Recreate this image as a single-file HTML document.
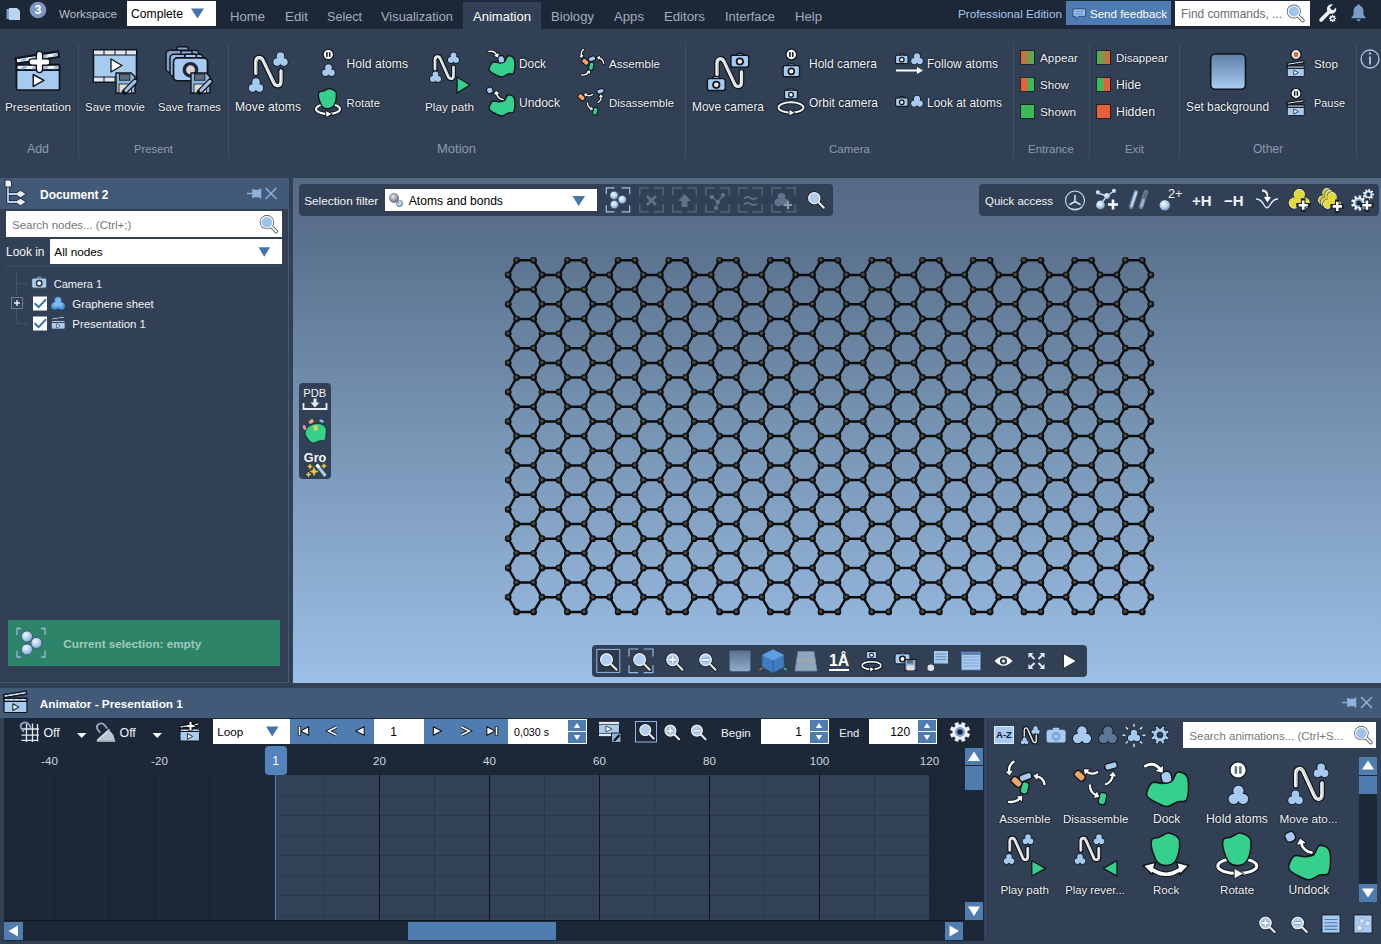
<!DOCTYPE html>
<html lang="en"><head><meta charset="utf-8"><title>SAMSON Animator</title><style>
html,body{margin:0;padding:0;}
body{width:1381px;height:944px;overflow:hidden;background:#314054;position:relative;font-family:"Liberation Sans",sans-serif;}
.t{position:absolute;white-space:nowrap;}
.b{position:absolute;}
.i{position:absolute;overflow:visible;}
</style></head><body>
<div class="b" style="left:0px;top:0px;width:1381px;height:29px;background:#1c2838;"></div>
<div class="b" style="left:0px;top:29px;width:1381px;height:149px;background:#314054;"></div>
<div class="b" style="left:463px;top:2px;width:78px;height:27px;background:#314054;"></div>
<svg class="i" style="left:0;top:0" width="1381" height="29" viewBox="0 0 1381 29"><rect x="6.5" y="9" width="8" height="10" fill="#7f9fc6"/><path d="M9 8 L17 8 L20 11 L20 20 L9 20 Z" fill="#b9d3f0"/><circle cx="38" cy="10" r="8.3" fill="#7d97c4"/></svg>
<div class="t" style="left:34.52px;top:0.00px;font-size:12.50px;color:#fff;line-height:20px;font-weight:bold;">3</div>
<div class="t" style="left:59.00px;top:4.00px;font-size:11.64px;color:#b7bec9;line-height:20px;">Workspace</div>
<div class="b" style="left:127px;top:1px;width:89px;height:25px;background:#ffffff;"></div>
<div class="t" style="left:131.00px;top:3.50px;font-size:12.15px;color:#000;line-height:20px;">Complete</div>
<svg class="i" style="left:190px;top:8px" width="16" height="12" viewBox="0 0 16 12"><path d="M1 0.5 L14 0.5 L7.5 10.5 Z" fill="#4574ad"/></svg>
<div class="t" style="left:230.00px;top:6.50px;font-size:13.12px;color:#a3adbb;line-height:20px;">Home</div>
<div class="t" style="left:285.00px;top:6.50px;font-size:13.35px;color:#a3adbb;line-height:20px;">Edit</div>
<div class="t" style="left:327.00px;top:6.50px;font-size:12.59px;color:#a3adbb;line-height:20px;">Select</div>
<div class="t" style="left:381.00px;top:6.50px;font-size:12.87px;color:#a3adbb;line-height:20px;">Visualization</div>
<div class="t" style="left:473.00px;top:6.50px;font-size:13.04px;color:#ffffff;line-height:20px;">Animation</div>
<div class="t" style="left:551.00px;top:6.50px;font-size:13.11px;color:#a3adbb;line-height:20px;">Biology</div>
<div class="t" style="left:614.00px;top:6.50px;font-size:13.16px;color:#a3adbb;line-height:20px;">Apps</div>
<div class="t" style="left:664.00px;top:6.50px;font-size:13.17px;color:#a3adbb;line-height:20px;">Editors</div>
<div class="t" style="left:725.00px;top:6.50px;font-size:12.85px;color:#a3adbb;line-height:20px;">Interface</div>
<div class="t" style="left:795.00px;top:6.50px;font-size:13.13px;color:#a3adbb;line-height:20px;">Help</div>
<div class="t" style="left:958.00px;top:3.50px;font-size:11.77px;color:#a9c6ee;line-height:20px;">Professional Edition</div>
<div class="b" style="left:1066px;top:1px;width:105px;height:24px;background:#4e7bb1;"></div>
<svg class="i" style="left:1072px;top:7.500px" width="15" height="13" viewBox="0 0 16 14"><path d="M1 1 H14.5 V9 H7 L4 12 V9 H1 Z" fill="#9cc0ea" stroke="#2a4a78" stroke-width="1"/><path d="M3.5 4 H12 M3.5 6.5 H12" stroke="#5b86bd" stroke-width="1"/></svg>
<div class="t" style="left:1090.00px;top:3.50px;font-size:11.54px;color:#fff;line-height:20px;">Send feedback</div>
<div class="b" style="left:1175px;top:1px;width:135px;height:25px;background:#ffffff;"></div>
<div class="t" style="left:1181.00px;top:3.50px;font-size:11.88px;color:#6d6d6d;line-height:20px;">Find commands, ...</div>
<svg class="i" style="left:0;top:0" width="1381" height="29" viewBox="0 0 1381 29"><line x1="1298.25" y1="15.95" x2="1302.81" y2="20.51" stroke="#3c4046" stroke-width="3.70" stroke-linecap="round"/><circle cx="1293.8" cy="11.5" r="6.95" fill="#3c4046"/><line x1="1298.25" y1="15.95" x2="1302.81" y2="20.51" stroke="#f6f6f6" stroke-width="2.20" stroke-linecap="round"/><circle cx="1293.8" cy="11.5" r="5.70" fill="#9cc4ee" stroke="#f6f6f6" stroke-width="1.3"/></svg>
<svg class="i" style="left:1316.500px;top:2px" width="22.500" height="24.200" viewBox="0 0 26 28"><path d="M3 19.5 L12 10.5 Q10.5 6.5 13.5 3.8 Q16 2 18.5 3 L15 6.5 L16.5 9 L19 9.5 L22 6.5 Q23 9.5 21 12 Q18.5 14.5 15 13.2 L6 22.5 Q4.5 23.5 3.2 22.2 Q2 21 3 19.5 Z" fill="#f2f4f7"/><path d="M22.14 18.28 L22.14 19.72 L20.95 19.68 L20.57 20.60 L21.44 21.42 L20.42 22.44 L19.60 21.57 L18.68 21.95 L18.72 23.14 L17.28 23.14 L17.32 21.95 L16.40 21.57 L15.58 22.44 L14.56 21.42 L15.43 20.60 L15.05 19.68 L13.86 19.72 L13.86 18.28 L15.05 18.32 L15.43 17.40 L14.56 16.58 L15.58 15.56 L16.40 16.43 L17.32 16.05 L17.28 14.86 L18.72 14.86 L18.68 16.05 L19.60 16.43 L20.42 15.56 L21.44 16.58 L20.57 17.40 L20.95 18.32 Z" fill="#f2f4f7" stroke-linejoin="round"/><circle cx="18" cy="19" r="1.43" fill="#1e293a"/></svg>
<svg class="i" style="left:1348px;top:2px" width="22" height="24" viewBox="0 0 22 24"><path d="M9.300 3.500 Q9.300 2.300 10.500 2.300 Q11.700 2.300 11.700 3.500 Q15.500 4.800 15.500 10 L15.500 13 L18 16.300 L3 16.300 L5.500 13 L5.500 10 Q5.500 4.800 9.300 3.500 Z" fill="#7d9cc6"/><path d="M8.500 17.300 H12.500 Q12 19.300 10.500 19.300 Q9 19.300 8.500 17.300 Z" fill="#7d9cc6"/></svg>
<div class="b" style="left:78.0px;top:44px;width:0;height:115px;border-left:1px solid #3d4e66"></div>
<div class="b" style="left:228.0px;top:44px;width:0;height:115px;border-left:1px solid #3d4e66"></div>
<div class="b" style="left:685.0px;top:44px;width:0;height:115px;border-left:1px solid #3d4e66"></div>
<div class="b" style="left:1013.0px;top:44px;width:0;height:115px;border-left:1px solid #3d4e66"></div>
<div class="b" style="left:1089.0px;top:44px;width:0;height:115px;border-left:1px solid #3d4e66"></div>
<div class="b" style="left:1179.0px;top:44px;width:0;height:115px;border-left:1px solid #3d4e66"></div>
<div class="b" style="left:1356.0px;top:44px;width:0;height:115px;border-left:1px solid #3d4e66"></div>
<div class="t" style="left:27.00px;top:138.50px;font-size:12.36px;color:#8d9bb0;line-height:20px;">Add</div>
<div class="t" style="left:134.00px;top:138.50px;font-size:11.32px;color:#8d9bb0;line-height:20px;">Present</div>
<div class="t" style="left:437.00px;top:138.50px;font-size:12.99px;color:#8d9bb0;line-height:20px;">Motion</div>
<div class="t" style="left:829.00px;top:138.50px;font-size:11.53px;color:#8d9bb0;line-height:20px;">Camera</div>
<div class="t" style="left:1028.00px;top:138.50px;font-size:11.49px;color:#8d9bb0;line-height:20px;">Entrance</div>
<div class="t" style="left:1125.00px;top:138.50px;font-size:11.40px;color:#8d9bb0;line-height:20px;">Exit</div>
<div class="t" style="left:1253.00px;top:138.50px;font-size:12.00px;color:#8d9bb0;line-height:20px;">Other</div>
<div class="t" style="left:5.00px;top:96.50px;font-size:11.75px;color:#f4f6f9;line-height:20px;text-shadow:0 0 2px #0d1320,0 0 1px #0d1320;">Presentation</div>
<div class="t" style="left:85.00px;top:96.50px;font-size:11.48px;color:#f4f6f9;line-height:20px;text-shadow:0 0 2px #0d1320,0 0 1px #0d1320;">Save movie</div>
<div class="t" style="left:158.00px;top:96.50px;font-size:11.22px;color:#f4f6f9;line-height:20px;text-shadow:0 0 2px #0d1320,0 0 1px #0d1320;">Save frames</div>
<div class="t" style="left:235.00px;top:96.50px;font-size:12.12px;color:#f4f6f9;line-height:20px;text-shadow:0 0 2px #0d1320,0 0 1px #0d1320;">Move atoms</div>
<div class="t" style="left:346.50px;top:53.50px;font-size:12.16px;color:#f4f6f9;line-height:20px;text-shadow:0 0 2px #0d1320,0 0 1px #0d1320;">Hold atoms</div>
<div class="t" style="left:346.50px;top:92.50px;font-size:11.37px;color:#f4f6f9;line-height:20px;text-shadow:0 0 2px #0d1320,0 0 1px #0d1320;">Rotate</div>
<div class="t" style="left:425.00px;top:96.50px;font-size:11.75px;color:#f4f6f9;line-height:20px;text-shadow:0 0 2px #0d1320,0 0 1px #0d1320;">Play path</div>
<div class="t" style="left:519.00px;top:53.50px;font-size:11.85px;color:#f4f6f9;line-height:20px;text-shadow:0 0 2px #0d1320,0 0 1px #0d1320;">Dock</div>
<div class="t" style="left:519.00px;top:92.50px;font-size:12.09px;color:#f4f6f9;line-height:20px;text-shadow:0 0 2px #0d1320,0 0 1px #0d1320;">Undock</div>
<div class="t" style="left:609.00px;top:53.50px;font-size:11.62px;color:#f4f6f9;line-height:20px;text-shadow:0 0 2px #0d1320,0 0 1px #0d1320;">Assemble</div>
<div class="t" style="left:609.00px;top:92.50px;font-size:11.36px;color:#f4f6f9;line-height:20px;text-shadow:0 0 2px #0d1320,0 0 1px #0d1320;">Disassemble</div>
<div class="t" style="left:692.00px;top:96.50px;font-size:11.89px;color:#f4f6f9;line-height:20px;text-shadow:0 0 2px #0d1320,0 0 1px #0d1320;">Move camera</div>
<div class="t" style="left:809.00px;top:53.50px;font-size:11.99px;color:#f4f6f9;line-height:20px;text-shadow:0 0 2px #0d1320,0 0 1px #0d1320;">Hold camera</div>
<div class="t" style="left:809.00px;top:92.50px;font-size:11.94px;color:#f4f6f9;line-height:20px;text-shadow:0 0 2px #0d1320,0 0 1px #0d1320;">Orbit camera</div>
<div class="t" style="left:927.00px;top:53.50px;font-size:12.05px;color:#f4f6f9;line-height:20px;text-shadow:0 0 2px #0d1320,0 0 1px #0d1320;">Follow atoms</div>
<div class="t" style="left:927.00px;top:92.50px;font-size:11.94px;color:#f4f6f9;line-height:20px;text-shadow:0 0 2px #0d1320,0 0 1px #0d1320;">Look at atoms</div>
<div class="t" style="left:1040.00px;top:47.50px;font-size:11.78px;color:#f4f6f9;line-height:20px;text-shadow:0 0 2px #0d1320,0 0 1px #0d1320;">Appear</div>
<div class="t" style="left:1040.00px;top:74.50px;font-size:11.59px;color:#f4f6f9;line-height:20px;text-shadow:0 0 2px #0d1320,0 0 1px #0d1320;">Show</div>
<div class="t" style="left:1040.00px;top:101.50px;font-size:11.77px;color:#f4f6f9;line-height:20px;text-shadow:0 0 2px #0d1320,0 0 1px #0d1320;">Shown</div>
<div class="t" style="left:1116.00px;top:47.50px;font-size:11.41px;color:#f4f6f9;line-height:20px;text-shadow:0 0 2px #0d1320,0 0 1px #0d1320;">Disappear</div>
<div class="t" style="left:1116.00px;top:74.50px;font-size:12.16px;color:#f4f6f9;line-height:20px;text-shadow:0 0 2px #0d1320,0 0 1px #0d1320;">Hide</div>
<div class="t" style="left:1116.00px;top:101.50px;font-size:12.31px;color:#f4f6f9;line-height:20px;text-shadow:0 0 2px #0d1320,0 0 1px #0d1320;">Hidden</div>
<div class="t" style="left:1186.00px;top:96.50px;font-size:11.85px;color:#f4f6f9;line-height:20px;text-shadow:0 0 2px #0d1320,0 0 1px #0d1320;">Set background</div>
<div class="t" style="left:1314.00px;top:53.50px;font-size:11.67px;color:#f4f6f9;line-height:20px;text-shadow:0 0 2px #0d1320,0 0 1px #0d1320;">Stop</div>
<div class="t" style="left:1314.00px;top:92.50px;font-size:10.93px;color:#f4f6f9;line-height:20px;text-shadow:0 0 2px #0d1320,0 0 1px #0d1320;">Pause</div>
<svg class="i" style="left:0;top:0" width="1381" height="178" viewBox="0 0 1381 178"><rect x="16.50" y="70.12" width="43.00" height="19.88" rx="1" fill="#a6caf0" stroke="#10151d" stroke-width="1.7"/><g><rect x="16.50" y="64.69" width="43.00" height="5.44" fill="#eef2f7" stroke="#10151d" stroke-width="1.7"/><path d="M19.94 70.12 L24.24 64.69 L28.54 64.69 L24.24 70.12 Z" fill="#9fb9d6"/><path d="M30.69 70.12 L34.99 64.69 L39.29 64.69 L34.99 70.12 Z" fill="#9fb9d6"/><path d="M41.44 70.12 L45.74 64.69 L50.04 64.69 L45.74 70.12 Z" fill="#9fb9d6"/><path d="M52.19 70.12 L56.49 64.69 L60.79 64.69 L56.49 70.12 Z" fill="#9fb9d6"/><rect x="16.50" y="64.69" width="43.00" height="5.44" fill="none" stroke="#10151d" stroke-width="1.7"/></g><g transform="rotate(-9 16.50 63.56)"><rect x="16.50" y="58.12" width="43.00" height="5.44" fill="#eef2f7" stroke="#10151d" stroke-width="1.7"/><path d="M19.94 63.56 L24.24 58.12 L28.54 58.12 L24.24 63.56 Z" fill="#9fb9d6"/><path d="M30.69 63.56 L34.99 58.12 L39.29 58.12 L34.99 63.56 Z" fill="#9fb9d6"/><path d="M41.44 63.56 L45.74 58.12 L50.04 58.12 L45.74 63.56 Z" fill="#9fb9d6"/><path d="M52.19 63.56 L56.49 58.12 L60.79 58.12 L56.49 63.56 Z" fill="#9fb9d6"/><rect x="16.50" y="58.12" width="43.00" height="5.44" fill="none" stroke="#10151d" stroke-width="1.7"/></g><path d="M33.23 74.50 L43.96 80.46 L33.23 86.42 Z" fill="#fff" stroke="#10151d" stroke-width="1.44" stroke-linejoin="round"/><path d="M39.500 54.500 V69.500 M32 62 H47" stroke="#10151d" stroke-width="7.6" stroke-linecap="round"/><path d="M39.500 54.500 V69.500 M32 62 H47" stroke="#fff" stroke-width="4.8" stroke-linecap="round"/><rect x="93.5" y="50" width="43" height="32" fill="#a6caf0" stroke="#10151d" stroke-width="1.6"/><rect x="93.5" y="50" width="43" height="5" fill="#dfe6ee" stroke="#10151d" stroke-width="1"/><rect x="93.5" y="77" width="43" height="5" fill="#dfe6ee" stroke="#10151d" stroke-width="1"/><line x1="104" y1="50" x2="104" y2="55" stroke="#10151d" stroke-width="1"/><line x1="104" y1="77" x2="104" y2="82" stroke="#10151d" stroke-width="1"/><line x1="115" y1="50" x2="115" y2="55" stroke="#10151d" stroke-width="1"/><line x1="115" y1="77" x2="115" y2="82" stroke="#10151d" stroke-width="1"/><line x1="126" y1="50" x2="126" y2="55" stroke="#10151d" stroke-width="1"/><line x1="126" y1="77" x2="126" y2="82" stroke="#10151d" stroke-width="1"/><line x1="137" y1="50" x2="137" y2="55" stroke="#10151d" stroke-width="1"/><line x1="137" y1="77" x2="137" y2="82" stroke="#10151d" stroke-width="1"/><path d="M111 59 L122 65.5 L111 72 Z" fill="#fff" stroke="#10151d" stroke-width="1.3" stroke-linejoin="round"/><path d="M116.00 73.00 L131.20 73.00 L135.00 76.80 L135.00 92.95 L116.00 92.95 Z" fill="#8fb4dc" stroke="#10151d" stroke-width="1.4" stroke-linejoin="round"/><rect x="119.42" y="74.14" width="10.45" height="6.08" fill="#5f6b7a" stroke="#10151d" stroke-width="0.8"/><rect x="119.04" y="84.02" width="12.54" height="8.93" fill="#e4ddd0" stroke="#10151d" stroke-width="0.8"/><line x1="124.55" y1="91.95" x2="135.00" y2="81.38" stroke="#10151d" stroke-width="5.70" stroke-linecap="round"/><line x1="126.07" y1="90.43" x2="135.00" y2="81.38" stroke="#9cc0ea" stroke-width="3.23" stroke-linecap="round"/><rect x="176.89" y="46.63" width="11.22" height="7.72" rx="1.65" fill="#7f9fc6" stroke="#10151d" stroke-width="1.5"/><rect x="166.00" y="50.23" width="33.00" height="22.14" rx="3.96" fill="#7f9fc6" stroke="#10151d" stroke-width="1.5"/><circle cx="182.50" cy="61.74" r="5.98" fill="#7f9fc6" stroke="#10151d" stroke-width="3.30"/><rect x="180.89" y="50.63" width="11.22" height="7.72" rx="1.65" fill="#93b5dd" stroke="#10151d" stroke-width="1.5"/><rect x="170.00" y="54.23" width="33.00" height="22.14" rx="3.96" fill="#93b5dd" stroke="#10151d" stroke-width="1.5"/><circle cx="186.50" cy="65.74" r="5.98" fill="#93b5dd" stroke="#10151d" stroke-width="3.30"/><rect x="184.72" y="54.24" width="11.56" height="7.96" rx="1.70" fill="#a6caf0" stroke="#10151d" stroke-width="1.7"/><rect x="173.50" y="57.95" width="34.00" height="22.81" rx="4.08" fill="#a6caf0" stroke="#10151d" stroke-width="1.7"/><circle cx="190.50" cy="69.81" r="6.16" fill="#ddd5cc" stroke="#1d2838" stroke-width="3.40"/><path d="M191.00 73.00 L206.20 73.00 L210.00 76.80 L210.00 92.95 L191.00 92.95 Z" fill="#8fb4dc" stroke="#10151d" stroke-width="1.4" stroke-linejoin="round"/><rect x="194.42" y="74.14" width="10.45" height="6.08" fill="#5f6b7a" stroke="#10151d" stroke-width="0.8"/><rect x="194.04" y="84.02" width="12.54" height="8.93" fill="#e4ddd0" stroke="#10151d" stroke-width="0.8"/><line x1="199.55" y1="91.95" x2="210.00" y2="81.38" stroke="#10151d" stroke-width="5.70" stroke-linecap="round"/><line x1="201.07" y1="90.43" x2="210.00" y2="81.38" stroke="#9cc0ea" stroke-width="3.23" stroke-linecap="round"/><path d="M255.80 73.46 L255.80 62.06 C255.80 56.65 261.34 56.08 263.36 60.92 L273.44 82.01 C275.46 87.14 281.00 86.86 281.00 81.44 L281.00 70.89" fill="none" stroke="#10151d" stroke-width="5.6" stroke-linecap="round" stroke-linejoin="round"/><path d="M255.80 73.46 L255.80 62.06 C255.80 56.65 261.34 56.08 263.36 60.92 L273.44 82.01 C275.46 87.14 281.00 86.86 281.00 81.44 L281.00 70.89" fill="none" stroke="#f6f6f6" stroke-width="3.2" stroke-linecap="round" stroke-linejoin="round"/><path d="M255.80 73.46 L255.80 62.06 C255.80 56.65 261.34 56.08 263.36 60.92 L273.44 82.01 C275.46 87.14 281.00 86.86 281.00 81.44 L281.00 70.89" fill="none" stroke="#c4c4c4" stroke-width="0.96" stroke-linecap="round" stroke-linejoin="round" transform="translate(0.70,0)"/><circle cx="280.50" cy="56.16" r="4.60" fill="#10151d"/><circle cx="283.92" cy="62.08" r="4.60" fill="#10151d"/><circle cx="277.08" cy="62.08" r="4.60" fill="#10151d"/><circle cx="280.50" cy="60.11" r="4.22" fill="#10151d"/><circle cx="280.50" cy="56.16" r="3.80" fill="#a6caf0"/><circle cx="283.92" cy="62.08" r="3.80" fill="#a6caf0"/><circle cx="277.08" cy="62.08" r="3.80" fill="#a6caf0"/><circle cx="280.50" cy="60.11" r="3.42" fill="#a6caf0"/><circle cx="256.00" cy="82.16" r="4.60" fill="#10151d"/><circle cx="259.42" cy="88.08" r="4.60" fill="#10151d"/><circle cx="252.58" cy="88.08" r="4.60" fill="#10151d"/><circle cx="256.00" cy="86.11" r="4.22" fill="#10151d"/><circle cx="256.00" cy="82.16" r="3.80" fill="#a6caf0"/><circle cx="259.42" cy="88.08" r="3.80" fill="#a6caf0"/><circle cx="252.58" cy="88.08" r="3.80" fill="#a6caf0"/><circle cx="256.00" cy="86.11" r="3.42" fill="#a6caf0"/><circle cx="328.3" cy="54.5" r="5.2" fill="#fff" stroke="#10151d" stroke-width="1.2"/><rect x="326.12" y="52.16" width="1.56" height="4.68" fill="#10151d"/><rect x="328.92" y="52.16" width="1.56" height="4.68" fill="#10151d"/><circle cx="328.50" cy="67.60" r="4.10" fill="#10151d"/><circle cx="331.47" cy="72.74" r="4.10" fill="#10151d"/><circle cx="325.53" cy="72.74" r="4.10" fill="#10151d"/><circle cx="328.50" cy="71.03" r="3.77" fill="#10151d"/><circle cx="328.50" cy="67.60" r="3.30" fill="#a6caf0"/><circle cx="331.47" cy="72.74" r="3.30" fill="#a6caf0"/><circle cx="325.53" cy="72.74" r="3.30" fill="#a6caf0"/><circle cx="328.50" cy="71.03" r="2.97" fill="#a6caf0"/><ellipse cx="328" cy="109" rx="12" ry="5.0" fill="none" stroke="#10151d" stroke-width="3.8"/><ellipse cx="328" cy="109" rx="12" ry="5.0" fill="none" stroke="#fff" stroke-width="2.0"/><path d="M319.14 92.15 C320.03 91.33 322.05 91.53 323.70 90.92 C325.35 90.31 327.31 88.60 329.02 88.46 C330.73 88.32 332.76 89.35 333.96 90.10 C335.16 90.85 335.92 91.26 336.24 92.97 C336.56 94.68 336.37 98.09 335.86 100.35 C335.35 102.60 334.53 105.10 333.20 106.50 C331.87 107.90 329.65 108.69 327.88 108.75 C326.11 108.82 323.95 108.24 322.56 106.91 C321.17 105.58 320.22 102.60 319.52 100.76 C318.82 98.91 318.44 97.28 318.38 95.84 C318.32 94.41 318.25 92.97 319.14 92.15 Z" fill="#35d08b" stroke="#10151d" stroke-width="1.4" stroke-linejoin="round"/><path d="M316 109 A12 5.0 0 0 0 340 109" fill="none" stroke="#10151d" stroke-width="3.8"/><path d="M316 109 A12 5.0 0 0 0 340 109" fill="none" stroke="#fff" stroke-width="2.0"/><path d="M325.80 110.43 L332.26 114.00 L325.80 117.57 Z" fill="#fff" stroke="#10151d" stroke-width="0.9" stroke-linejoin="round"/><path d="M435.00 69.10 L435.00 60.10 C435.00 55.83 439.07 55.38 440.55 59.20 L447.95 75.85 C449.43 79.90 453.50 79.67 453.50 75.40 L453.50 67.08" fill="none" stroke="#10151d" stroke-width="5.0" stroke-linecap="round" stroke-linejoin="round"/><path d="M435.00 69.10 L435.00 60.10 C435.00 55.83 439.07 55.38 440.55 59.20 L447.95 75.85 C449.43 79.90 453.50 79.67 453.50 75.40 L453.50 67.08" fill="none" stroke="#f6f6f6" stroke-width="2.6" stroke-linecap="round" stroke-linejoin="round"/><path d="M435.00 69.10 L435.00 60.10 C435.00 55.83 439.07 55.38 440.55 59.20 L447.95 75.85 C449.43 79.90 453.50 79.67 453.50 75.40 L453.50 67.08" fill="none" stroke="#c4c4c4" stroke-width="0.78" stroke-linecap="round" stroke-linejoin="round" transform="translate(0.57,0)"/><circle cx="453.50" cy="55.45" r="3.70" fill="#10151d"/><circle cx="456.11" cy="59.97" r="3.70" fill="#10151d"/><circle cx="450.89" cy="59.97" r="3.70" fill="#10151d"/><circle cx="453.50" cy="58.46" r="3.41" fill="#10151d"/><circle cx="453.50" cy="55.45" r="2.90" fill="#a6caf0"/><circle cx="456.11" cy="59.97" r="2.90" fill="#a6caf0"/><circle cx="450.89" cy="59.97" r="2.90" fill="#a6caf0"/><circle cx="453.50" cy="58.46" r="2.61" fill="#a6caf0"/><circle cx="435.50" cy="74.45" r="3.70" fill="#10151d"/><circle cx="438.11" cy="78.97" r="3.70" fill="#10151d"/><circle cx="432.89" cy="78.97" r="3.70" fill="#10151d"/><circle cx="435.50" cy="77.46" r="3.41" fill="#10151d"/><circle cx="435.50" cy="74.45" r="2.90" fill="#a6caf0"/><circle cx="438.11" cy="78.97" r="2.90" fill="#a6caf0"/><circle cx="432.89" cy="78.97" r="2.90" fill="#a6caf0"/><circle cx="435.50" cy="77.46" r="2.61" fill="#a6caf0"/><path d="M457 77 L470 85 L457 93 Z" fill="#35d08b" stroke="#10151d" stroke-width="1.3" stroke-linejoin="round"/><path d="M489.20 68.30 C489.67 66.80 491.20 63.12 492.80 62.20 C494.40 61.28 496.83 62.93 498.80 62.80 C500.77 62.67 503.10 62.53 504.60 61.40 C506.10 60.27 506.35 56.65 507.80 56.00 C509.25 55.35 512.12 56.28 513.30 57.50 C514.48 58.72 514.85 60.72 514.90 63.30 C514.95 65.88 514.70 71.22 513.60 73.00 C512.50 74.78 510.28 73.35 508.30 74.00 C506.32 74.65 503.92 76.83 501.70 76.90 C499.48 76.97 496.95 75.35 495.00 74.40 C493.05 73.45 490.97 72.22 490.00 71.20 C489.03 70.18 488.73 69.80 489.20 68.30 Z" fill="#35d08b" stroke="#10151d" stroke-width="1.4" stroke-linejoin="round"/><rect x="498.00" y="55.80" width="6.40" height="7.20" rx="2.43" fill="#a6caf0" stroke="#10151d" stroke-width="1.1" transform="rotate(-12 501.20 59.40)"/><path d="M489.00 51.50 Q494.27 50.46 496.80 55.20" fill="none" stroke="#10151d" stroke-width="3.2" stroke-linecap="round"/><path d="M497.99 57.42 L493.93 55.78 L498.88 53.14 Z" fill="#10151d" stroke="#10151d" stroke-width="1.6" stroke-linejoin="round"/><path d="M489.00 51.50 Q494.27 50.46 496.80 55.20" fill="none" stroke="#fff" stroke-width="1.6" stroke-linecap="round"/><path d="M497.99 57.42 L493.93 55.78 L498.88 53.14 Z" fill="#fff"/><path d="M489.20 107.30 C489.67 105.80 491.20 102.12 492.80 101.20 C494.40 100.28 496.83 101.93 498.80 101.80 C500.77 101.67 503.10 101.53 504.60 100.40 C506.10 99.27 506.35 95.65 507.80 95.00 C509.25 94.35 512.12 95.28 513.30 96.50 C514.48 97.72 514.85 99.72 514.90 102.30 C514.95 104.88 514.70 110.22 513.60 112.00 C512.50 113.78 510.28 112.35 508.30 113.00 C506.32 113.65 503.92 115.83 501.70 115.90 C499.48 115.97 496.95 114.35 495.00 113.40 C493.05 112.45 490.97 111.22 490.00 110.20 C489.03 109.18 488.73 108.80 489.20 107.30 Z" fill="#35d08b" stroke="#10151d" stroke-width="1.4" stroke-linejoin="round"/><rect x="486.70" y="87.20" width="6.20" height="6.20" rx="2.36" fill="#a6caf0" stroke="#10151d" stroke-width="1.1" transform="rotate(-25 489.80 90.30)"/><path d="M503.00 99.50 Q497.68 98.57 496.50 93.30" fill="none" stroke="#10151d" stroke-width="3.2" stroke-linecap="round"/><path d="M495.95 90.84 L499.42 93.51 L493.95 94.73 Z" fill="#10151d" stroke="#10151d" stroke-width="1.6" stroke-linejoin="round"/><path d="M503.00 99.50 Q497.68 98.57 496.50 93.30" fill="none" stroke="#fff" stroke-width="1.6" stroke-linecap="round"/><path d="M495.95 90.84 L499.42 93.51 L493.95 94.73 Z" fill="#fff"/><rect x="581.55" y="59.30" width="7.50" height="5.00" rx="1.90" fill="#f2a468" stroke="#10151d" stroke-width="1.1" transform="rotate(40 585.30 61.80)"/><rect x="588.50" y="56.50" width="7.00" height="4.60" rx="1.75" fill="#a6caf0" stroke="#10151d" stroke-width="1.1" transform="rotate(-18 592.00 58.80)"/><rect x="589.00" y="62.20" width="4.60" height="8.00" rx="1.75" fill="#35d08b" stroke="#10151d" stroke-width="1.1" transform="rotate(12 591.30 66.20)"/><path d="M583.50 49.50 Q580.40 52.10 581.50 56.00" fill="none" stroke="#10151d" stroke-width="2.9000000000000004" stroke-linecap="round"/><path d="M582.04 57.91 L579.20 55.96 L583.44 54.77 Z" fill="#10151d" stroke="#10151d" stroke-width="1.6" stroke-linejoin="round"/><path d="M583.50 49.50 Q580.40 52.10 581.50 56.00" fill="none" stroke="#fff" stroke-width="1.3" stroke-linecap="round"/><path d="M582.04 57.91 L579.20 55.96 L583.44 54.77 Z" fill="#fff"/><path d="M603.70 63.30 Q603.11 58.97 598.90 57.80" fill="none" stroke="#10151d" stroke-width="2.9000000000000004" stroke-linecap="round"/><path d="M596.99 57.27 L600.13 55.86 L598.95 60.10 Z" fill="#10151d" stroke="#10151d" stroke-width="1.6" stroke-linejoin="round"/><path d="M603.70 63.30 Q603.11 58.97 598.90 57.80" fill="none" stroke="#fff" stroke-width="1.3" stroke-linecap="round"/><path d="M596.99 57.27 L600.13 55.86 L598.95 60.10 Z" fill="#fff"/><path d="M581.50 75.00 Q585.91 75.35 588.80 72.00" fill="none" stroke="#10151d" stroke-width="2.9000000000000004" stroke-linecap="round"/><path d="M590.09 70.50 L590.03 73.94 L586.70 71.06 Z" fill="#10151d" stroke="#10151d" stroke-width="1.6" stroke-linejoin="round"/><path d="M581.50 75.00 Q585.91 75.35 588.80 72.00" fill="none" stroke="#fff" stroke-width="1.3" stroke-linecap="round"/><path d="M590.09 70.50 L590.03 73.94 L586.70 71.06 Z" fill="#fff"/><rect x="577.75" y="94.70" width="7.50" height="5.00" rx="1.90" fill="#f2a468" stroke="#10151d" stroke-width="1.1" transform="rotate(40 581.50 97.20)"/><rect x="597.00" y="88.90" width="7.00" height="4.60" rx="1.75" fill="#a6caf0" stroke="#10151d" stroke-width="1.1" transform="rotate(-18 600.50 91.20)"/><rect x="593.00" y="107.45" width="4.60" height="7.50" rx="1.75" fill="#35d08b" stroke="#10151d" stroke-width="1.1" transform="rotate(12 595.30 111.20)"/><path d="M592.50 94.50 Q589.25 96.85 585.80 94.80" fill="none" stroke="#10151d" stroke-width="2.9000000000000004" stroke-linecap="round"/><path d="M584.10 93.79 L587.49 93.25 L585.24 97.03 Z" fill="#10151d" stroke="#10151d" stroke-width="1.6" stroke-linejoin="round"/><path d="M592.50 94.50 Q589.25 96.85 585.80 94.80" fill="none" stroke="#fff" stroke-width="1.3" stroke-linecap="round"/><path d="M584.10 93.79 L587.49 93.25 L585.24 97.03 Z" fill="#fff"/><path d="M598.00 102.50 Q601.48 100.36 601.00 96.30" fill="none" stroke="#10151d" stroke-width="2.9000000000000004" stroke-linecap="round"/><path d="M600.77 94.33 L603.26 96.70 L598.89 97.21 Z" fill="#10151d" stroke="#10151d" stroke-width="1.6" stroke-linejoin="round"/><path d="M598.00 102.50 Q601.48 100.36 601.00 96.30" fill="none" stroke="#fff" stroke-width="1.3" stroke-linecap="round"/><path d="M600.77 94.33 L603.26 96.70 L598.89 97.21 Z" fill="#fff"/><path d="M587.50 103.00 Q587.56 107.11 591.30 108.80" fill="none" stroke="#10151d" stroke-width="2.9000000000000004" stroke-linecap="round"/><path d="M593.10 109.62 L589.79 110.53 L591.61 106.52 Z" fill="#10151d" stroke="#10151d" stroke-width="1.6" stroke-linejoin="round"/><path d="M587.50 103.00 Q587.56 107.11 591.30 108.80" fill="none" stroke="#fff" stroke-width="1.3" stroke-linecap="round"/><path d="M593.10 109.62 L589.79 110.53 L591.61 106.52 Z" fill="#fff"/><path d="M717.00 74.48 L717.00 63.28 C717.00 57.96 722.39 57.40 724.35 62.16 L734.15 82.88 C736.11 87.92 741.50 87.64 741.50 82.32 L741.50 71.96" fill="none" stroke="#10151d" stroke-width="5.6" stroke-linecap="round" stroke-linejoin="round"/><path d="M717.00 74.48 L717.00 63.28 C717.00 57.96 722.39 57.40 724.35 62.16 L734.15 82.88 C736.11 87.92 741.50 87.64 741.50 82.32 L741.50 71.96" fill="none" stroke="#f6f6f6" stroke-width="3.2" stroke-linecap="round" stroke-linejoin="round"/><path d="M717.00 74.48 L717.00 63.28 C717.00 57.96 722.39 57.40 724.35 62.16 L734.15 82.88 C736.11 87.92 741.50 87.64 741.50 82.32 L741.50 71.96" fill="none" stroke="#c4c4c4" stroke-width="0.96" stroke-linecap="round" stroke-linejoin="round" transform="translate(0.70,0)"/><rect x="736.77" y="53.36" width="6.05" height="4.17" rx="0.89" fill="#a6caf0" stroke="#10151d" stroke-width="1.4"/><rect x="730.90" y="55.30" width="17.80" height="11.94" rx="2.14" fill="#a6caf0" stroke="#10151d" stroke-width="1.4"/><circle cx="739.80" cy="61.51" r="3.22" fill="#ece8e4" stroke="#10151d" stroke-width="1.78"/><rect x="713.27" y="76.66" width="6.05" height="4.17" rx="0.89" fill="#a6caf0" stroke="#10151d" stroke-width="1.4"/><rect x="707.40" y="78.60" width="17.80" height="11.94" rx="2.14" fill="#a6caf0" stroke="#10151d" stroke-width="1.4"/><circle cx="716.30" cy="84.81" r="3.22" fill="#ece8e4" stroke="#10151d" stroke-width="1.78"/><circle cx="791.3" cy="54.5" r="5.3" fill="#fff" stroke="#10151d" stroke-width="1.2"/><rect x="789.07" y="52.12" width="1.59" height="4.77" fill="#10151d"/><rect x="791.94" y="52.12" width="1.59" height="4.77" fill="#10151d"/><rect x="788.50" y="63.86" width="5.61" height="3.86" rx="0.83" fill="#a6caf0" stroke="#10151d" stroke-width="1.4"/><rect x="783.05" y="65.67" width="16.50" height="11.07" rx="1.98" fill="#a6caf0" stroke="#10151d" stroke-width="1.4"/><circle cx="791.30" cy="71.42" r="2.99" fill="#ffffff" stroke="#10151d" stroke-width="1.65"/><rect x="788.79" y="88.73" width="4.42" height="3.04" rx="0.65" fill="#a6caf0" stroke="#10151d" stroke-width="1.2"/><rect x="784.50" y="90.15" width="13.00" height="8.72" rx="1.56" fill="#a6caf0" stroke="#10151d" stroke-width="1.2"/><circle cx="791.00" cy="94.68" r="2.35" fill="#ffffff" stroke="#10151d" stroke-width="1.30"/><ellipse cx="791" cy="107.5" rx="12.5" ry="5.2" fill="none" stroke="#10151d" stroke-width="3.7"/><ellipse cx="791" cy="107.5" rx="12.5" ry="5.2" fill="none" stroke="#fff" stroke-width="1.9"/><path d="M778.5 107.5 A12.5 5.2 0 0 0 803.5 107.5" fill="none" stroke="#10151d" stroke-width="3.7"/><path d="M778.5 107.5 A12.5 5.2 0 0 0 803.5 107.5" fill="none" stroke="#fff" stroke-width="1.9"/><path d="M789.02 109.31 L795.16 112.70 L789.02 116.09 Z" fill="#fff" stroke="#10151d" stroke-width="0.9" stroke-linejoin="round"/><rect x="899.67" y="53.92" width="4.25" height="2.92" rx="0.62" fill="#a6caf0" stroke="#10151d" stroke-width="1.1"/><rect x="895.55" y="55.29" width="12.50" height="8.38" rx="1.50" fill="#a6caf0" stroke="#10151d" stroke-width="1.1"/><circle cx="901.80" cy="59.65" r="2.26" fill="#ffffff" stroke="#10151d" stroke-width="1.25"/><circle cx="917.00" cy="56.27" r="3.70" fill="#10151d"/><circle cx="919.79" cy="61.11" r="3.70" fill="#10151d"/><circle cx="914.21" cy="61.11" r="3.70" fill="#10151d"/><circle cx="917.00" cy="59.50" r="3.39" fill="#10151d"/><circle cx="917.00" cy="56.27" r="3.10" fill="#a6caf0"/><circle cx="919.79" cy="61.11" r="3.10" fill="#a6caf0"/><circle cx="914.21" cy="61.11" r="3.10" fill="#a6caf0"/><circle cx="917.00" cy="59.50" r="2.79" fill="#a6caf0"/><path d="M896 70.5 H918" stroke="#fff" stroke-width="2"/><path d="M917 67 L923 70.5 L917 74 Z" fill="#fff"/><rect x="899.67" y="96.62" width="4.25" height="2.92" rx="0.62" fill="#a6caf0" stroke="#10151d" stroke-width="1.1"/><rect x="895.55" y="97.99" width="12.50" height="8.38" rx="1.50" fill="#a6caf0" stroke="#10151d" stroke-width="1.1"/><circle cx="901.80" cy="102.35" r="2.26" fill="#ffffff" stroke="#10151d" stroke-width="1.25"/><circle cx="917.00" cy="98.77" r="3.70" fill="#10151d"/><circle cx="919.79" cy="103.61" r="3.70" fill="#10151d"/><circle cx="914.21" cy="103.61" r="3.70" fill="#10151d"/><circle cx="917.00" cy="102.00" r="3.39" fill="#10151d"/><circle cx="917.00" cy="98.77" r="3.10" fill="#a6caf0"/><circle cx="919.79" cy="103.61" r="3.10" fill="#a6caf0"/><circle cx="914.21" cy="103.61" r="3.10" fill="#a6caf0"/><circle cx="917.00" cy="102.00" r="2.79" fill="#a6caf0"/><defs><linearGradient id="gA" x1="0" x2="1"><stop offset="0" stop-color="#e8603a"/><stop offset="1" stop-color="#3cba5a"/></linearGradient><linearGradient id="gD" x1="0" x2="1"><stop offset="0" stop-color="#3cba5a"/><stop offset="1" stop-color="#e8603a"/></linearGradient><linearGradient id="gBG" x1="0" y1="0" x2="0" y2="1"><stop offset="0" stop-color="#5f7fa8"/><stop offset="1" stop-color="#a9ccf0"/></linearGradient></defs><rect x="1020.5" y="50.5" width="14" height="14" fill="url(#gA)" stroke="#10151d" stroke-width="0.8"/><rect x="1020.5" y="77.500" width="14" height="14" fill="#3cba5a" stroke="#10151d" stroke-width="0.8"/><rect x="1020.9" y="77.900" width="6.5" height="13.2" fill="#e8603a"/><rect x="1020.5" y="104.5" width="14" height="14" fill="#3cba5a" stroke="#10151d" stroke-width="0.8"/><rect x="1096.500" y="50.5" width="14" height="14" fill="url(#gD)" stroke="#10151d" stroke-width="0.8"/><rect x="1096.500" y="77.500" width="14" height="14" fill="#e8603a" stroke="#10151d" stroke-width="0.8"/><rect x="1096.9" y="77.900" width="6.5" height="13.2" fill="#3cba5a"/><rect x="1096.500" y="104.5" width="14" height="14" fill="#e8603a" stroke="#10151d" stroke-width="0.8"/><rect x="1210.700" y="54" width="34.800" height="35.300" rx="4.5" fill="url(#gBG)" stroke="#10151d" stroke-width="1.6"/><circle cx="1296" cy="54.5" r="5" fill="#fff" stroke="#10151d" stroke-width="1.2"/><rect x="1293.75" y="52.25" width="4.50" height="4.50" fill="#e8603a"/><rect x="1287.30" y="68.23" width="17.00" height="8.37" rx="1" fill="#a6caf0" stroke="#10151d" stroke-width="0.9"/><g><rect x="1287.30" y="65.94" width="17.00" height="2.29" fill="#eef2f7" stroke="#10151d" stroke-width="0.9"/><path d="M1288.66 68.23 L1290.36 65.94 L1292.06 65.94 L1290.36 68.23 Z" fill="#9fb9d6"/><path d="M1292.91 68.23 L1294.61 65.94 L1296.31 65.94 L1294.61 68.23 Z" fill="#9fb9d6"/><path d="M1297.16 68.23 L1298.86 65.94 L1300.56 65.94 L1298.86 68.23 Z" fill="#9fb9d6"/><path d="M1301.41 68.23 L1303.11 65.94 L1304.81 65.94 L1303.11 68.23 Z" fill="#9fb9d6"/><rect x="1287.30" y="65.94" width="17.00" height="2.29" fill="none" stroke="#10151d" stroke-width="0.9"/></g><g transform="rotate(-9 1287.30 65.46)"><rect x="1287.30" y="63.17" width="17.00" height="2.29" fill="#eef2f7" stroke="#10151d" stroke-width="0.9"/><path d="M1288.66 65.46 L1290.36 63.17 L1292.06 63.17 L1290.36 65.46 Z" fill="#9fb9d6"/><path d="M1292.91 65.46 L1294.61 63.17 L1296.31 63.17 L1294.61 65.46 Z" fill="#9fb9d6"/><path d="M1297.16 65.46 L1298.86 63.17 L1300.56 63.17 L1298.86 65.46 Z" fill="#9fb9d6"/><path d="M1301.41 65.46 L1303.11 63.17 L1304.81 63.17 L1303.11 65.46 Z" fill="#9fb9d6"/><rect x="1287.30" y="63.17" width="17.00" height="2.29" fill="none" stroke="#10151d" stroke-width="0.9"/></g><path d="M1293.79 70.07 L1298.31 72.58 L1293.79 75.09 Z" fill="#fff" stroke="#10151d" stroke-width="0.77" stroke-linejoin="round"/><circle cx="1296" cy="93.5" r="5" fill="#fff" stroke="#10151d" stroke-width="1.2"/><rect x="1293.90" y="91.25" width="1.50" height="4.50" fill="#10151d"/><rect x="1296.60" y="91.25" width="1.50" height="4.50" fill="#10151d"/><rect x="1287.30" y="107.23" width="17.00" height="8.37" rx="1" fill="#a6caf0" stroke="#10151d" stroke-width="0.9"/><g><rect x="1287.30" y="104.94" width="17.00" height="2.29" fill="#eef2f7" stroke="#10151d" stroke-width="0.9"/><path d="M1288.66 107.23 L1290.36 104.94 L1292.06 104.94 L1290.36 107.23 Z" fill="#9fb9d6"/><path d="M1292.91 107.23 L1294.61 104.94 L1296.31 104.94 L1294.61 107.23 Z" fill="#9fb9d6"/><path d="M1297.16 107.23 L1298.86 104.94 L1300.56 104.94 L1298.86 107.23 Z" fill="#9fb9d6"/><path d="M1301.41 107.23 L1303.11 104.94 L1304.81 104.94 L1303.11 107.23 Z" fill="#9fb9d6"/><rect x="1287.30" y="104.94" width="17.00" height="2.29" fill="none" stroke="#10151d" stroke-width="0.9"/></g><g transform="rotate(-9 1287.30 104.46)"><rect x="1287.30" y="102.17" width="17.00" height="2.29" fill="#eef2f7" stroke="#10151d" stroke-width="0.9"/><path d="M1288.66 104.46 L1290.36 102.17 L1292.06 102.17 L1290.36 104.46 Z" fill="#9fb9d6"/><path d="M1292.91 104.46 L1294.61 102.17 L1296.31 102.17 L1294.61 104.46 Z" fill="#9fb9d6"/><path d="M1297.16 104.46 L1298.86 102.17 L1300.56 102.17 L1298.86 104.46 Z" fill="#9fb9d6"/><path d="M1301.41 104.46 L1303.11 102.17 L1304.81 102.17 L1303.11 104.46 Z" fill="#9fb9d6"/><rect x="1287.30" y="102.17" width="17.00" height="2.29" fill="none" stroke="#10151d" stroke-width="0.9"/></g><path d="M1293.79 109.07 L1298.31 111.58 L1293.79 114.09 Z" fill="#fff" stroke="#10151d" stroke-width="0.77" stroke-linejoin="round"/><circle cx="1370" cy="59" r="9" fill="none" stroke="#a9c6ee" stroke-width="1.3"/><path d="M1370 56.5 V64.5" stroke="#a9c6ee" stroke-width="1.8"/><circle cx="1370" cy="53.500" r="1.2" fill="#a9c6ee"/></svg>
<div class="b" style="left:0px;top:178px;width:289px;height:505px;background:#314054;border-right:1px solid #455a76;border-bottom:1px solid #455a76;box-sizing:border-box;"></div>
<div class="b" style="left:0px;top:178px;width:289px;height:31px;background:#425a78;"></div>
<div class="b" style="left:289px;top:178px;width:4px;height:510px;background:#314054;"></div>
<div class="t" style="left:40.00px;top:184.50px;font-size:11.97px;color:#fff;line-height:20px;font-weight:bold;">Document 2</div>
<svg class="i" style="left:0;top:0" width="293" height="700" viewBox="0 0 293 700"><g transform="translate(-0.5,-1.5)" stroke-linejoin="round"><path d="M8.500 189 V203.500 H17 M8.500 195.500 H17" fill="none" stroke="#1d2838" stroke-width="3.4"/><path d="M16 195.500 L21 192.300 L26 195.500 L21 198.700 Z M16 203.500 L21 200.300 L26 203.500 L21 206.700 Z" fill="#1d2838" stroke="#1d2838" stroke-width="1.6"/><path d="M5.500 181.500 H10 L12 183.500 V188.500 H5.500 Z" fill="#e8eef6" stroke="#1d2838" stroke-width="0.9"/><path d="M8.500 189 V203.500 H17 M8.500 195.500 H17" fill="none" stroke="#b9d0ec" stroke-width="1.8"/><path d="M16 195.500 L21 192.300 L26 195.500 L21 198.700 Z" fill="#e8eef6"/><path d="M16 203.500 L21 200.300 L26 203.500 L21 206.700 Z" fill="#e8eef6"/></g><path d="M247 193.500 H253" stroke="#8fb2dc" stroke-width="1.4"/><path d="M253 189 V198 M254 190.500 H259 V196.500 H254 Z M260.500 188.500 V198.500" stroke="#8fb2dc" stroke-width="1.5" fill="#8fb2dc"/><path d="M265.500 188 L276.500 199 M276.500 188 L265.500 199" stroke="#8fb2dc" stroke-width="1.5"/></svg>
<div class="b" style="left:6px;top:211px;width:276px;height:26px;background:#fff;"></div>
<div class="t" style="left:12.00px;top:214.50px;font-size:11.53px;color:#777;line-height:20px;">Search nodes... (Ctrl+;)</div>
<svg class="i" style="left:0;top:0" width="293" height="300" viewBox="0 0 293 300"><line x1="271.50" y1="226.80" x2="276.22" y2="231.52" stroke="#3c4046" stroke-width="3.70" stroke-linecap="round"/><circle cx="266.9" cy="222.2" r="7.15" fill="#3c4046"/><line x1="271.50" y1="226.80" x2="276.22" y2="231.52" stroke="#f6f6f6" stroke-width="2.20" stroke-linecap="round"/><circle cx="266.9" cy="222.2" r="5.90" fill="#9cc4ee" stroke="#f6f6f6" stroke-width="1.3"/></svg>
<div class="t" style="left:6.00px;top:241.50px;font-size:11.94px;color:#f2f4f7;line-height:20px;">Look in</div>
<div class="b" style="left:50px;top:239px;width:232px;height:25px;background:#fff;"></div>
<div class="t" style="left:54.30px;top:241.50px;font-size:11.79px;color:#000;line-height:20px;">All nodes</div>
<svg class="i" style="left:258px;top:247px" width="14" height="11" viewBox="0 0 14 11"><path d="M0.500 0.3 L12 0.3 L6.2 9.8 Z" fill="#4574ad"/></svg>
<div class="b" style="left:6px;top:266px;width:276px;height:0;border-top:1px dotted #46566e"></div>
<svg class="i" style="left:0;top:0" width="293" height="700" viewBox="0 0 293 700"><path d="M16.500 273 V323.500 H27 M16.500 283.500 H27 M23 303.500 H27" fill="none" stroke="#55647a" stroke-width="1" stroke-dasharray="1 1"/><rect x="11.5" y="297.500" width="11" height="11" fill="#314054" stroke="#6b7b92" stroke-width="1"/><path d="M14 303 H20 M17 300 V306" stroke="#e8eef6" stroke-width="1.4"/><rect x="36.65" y="276.45" width="5.10" height="3.51" rx="0.75" fill="#a6caf0" stroke="#2a3a52" stroke-width="0.8"/><rect x="31.70" y="278.09" width="15.00" height="10.06" rx="1.80" fill="#a6caf0" stroke="#2a3a52" stroke-width="0.8"/><circle cx="39.20" cy="283.32" r="2.72" fill="#f4f6f9" stroke="#2a3648" stroke-width="1.50"/><rect x="33" y="296.5" width="14" height="14" fill="#fff"/><path d="M34.600 303.3 L38.600 307.1 L46 299.3" fill="none" stroke="#3d6fa8" stroke-width="2"/><rect x="33" y="316.5" width="14" height="14" fill="#fff"/><path d="M34.600 323.3 L38.600 327.1 L46 319.3" fill="none" stroke="#3d6fa8" stroke-width="2"/><circle cx="58.00" cy="300.33" r="3.60" fill="#4b97dc"/><circle cx="61.24" cy="305.95" r="3.60" fill="#4b97dc"/><circle cx="54.76" cy="305.95" r="3.60" fill="#4b97dc"/><circle cx="58.00" cy="304.08" r="3.24" fill="#4b97dc"/><circle cx="58.00" cy="300.60" r="2.50" fill="#7db8ee"/><circle cx="60.25" cy="304.50" r="2.50" fill="#7db8ee"/><circle cx="55.75" cy="304.50" r="2.50" fill="#7db8ee"/><circle cx="58.00" cy="303.20" r="2.25" fill="#7db8ee"/><rect x="51.30" y="322.32" width="13.80" height="6.78" rx="1" fill="#a6caf0" stroke="#2a3a52" stroke-width="0.8"/><g><rect x="51.30" y="320.46" width="13.80" height="1.86" fill="#eef2f7" stroke="#2a3a52" stroke-width="0.8"/><path d="M52.40 322.32 L53.78 320.46 L55.16 320.46 L53.78 322.32 Z" fill="#9fb9d6"/><path d="M55.85 322.32 L57.23 320.46 L58.61 320.46 L57.23 322.32 Z" fill="#9fb9d6"/><path d="M59.30 322.32 L60.68 320.46 L62.06 320.46 L60.68 322.32 Z" fill="#9fb9d6"/><path d="M62.75 322.32 L64.13 320.46 L65.51 320.46 L64.13 322.32 Z" fill="#9fb9d6"/><rect x="51.30" y="320.46" width="13.80" height="1.86" fill="none" stroke="#2a3a52" stroke-width="0.8"/></g><g transform="rotate(-9 51.30 320.08)"><rect x="51.30" y="318.22" width="13.80" height="1.86" fill="#eef2f7" stroke="#2a3a52" stroke-width="0.8"/><path d="M52.40 320.08 L53.78 318.22 L55.16 318.22 L53.78 320.08 Z" fill="#9fb9d6"/><path d="M55.85 320.08 L57.23 318.22 L58.61 318.22 L57.23 320.08 Z" fill="#9fb9d6"/><path d="M59.30 320.08 L60.68 318.22 L62.06 318.22 L60.68 320.08 Z" fill="#9fb9d6"/><path d="M62.75 320.08 L64.13 318.22 L65.51 318.22 L64.13 320.08 Z" fill="#9fb9d6"/><rect x="51.30" y="318.22" width="13.80" height="1.86" fill="none" stroke="#2a3a52" stroke-width="0.8"/></g><path d="M56.57 323.81 L60.24 325.84 L56.57 327.88 Z" fill="#fff" stroke="#2a3a52" stroke-width="0.68" stroke-linejoin="round"/></svg>
<div class="t" style="left:53.70px;top:273.50px;font-size:11.05px;color:#f2f4f7;line-height:20px;">Camera 1</div>
<div class="t" style="left:72.30px;top:293.50px;font-size:11.36px;color:#f2f4f7;line-height:20px;">Graphene sheet</div>
<div class="t" style="left:72.30px;top:313.50px;font-size:11.43px;color:#f2f4f7;line-height:20px;">Presentation 1</div>
<div class="b" style="left:8px;top:620px;width:272px;height:46px;background:#2d8468;"></div>
<svg class="i" style="left:0;top:0" width="293" height="700" viewBox="0 0 293 700"><path d="M21 628.500 H17 V635 M41 628.500 H45 V635 M21 657 H17 V650.500 M41 657 H45 V650.500" fill="none" stroke="#9ab9d8" stroke-width="1.3"/><defs><radialGradient id="sph" cx="0.4" cy="0.35" r="0.7"><stop offset="0" stop-color="#f4f9ff"/><stop offset="0.6" stop-color="#a8c8ea"/><stop offset="1" stop-color="#6f93bd"/></radialGradient></defs><circle cx="27" cy="636.5" r="5.6" fill="url(#sph)" stroke="#3d5878" stroke-width="0.9"/><circle cx="36.5" cy="643" r="5.6" fill="url(#sph)" stroke="#3d5878" stroke-width="0.9"/><circle cx="27" cy="649.5" r="5.6" fill="url(#sph)" stroke="#3d5878" stroke-width="0.9"/></svg>
<div class="t" style="left:63.30px;top:633.50px;font-size:11.71px;color:#a3c9be;line-height:20px;font-weight:bold;">Current selection: empty</div>
<div class="b" style="left:293px;top:178px;width:1088px;height:505px;background:linear-gradient(to bottom,#556a85 0%,#5b728e 13%,#728fad 44%,#9cbfe6 100%);"></div>
<div class="b" style="left:0px;top:683px;width:1381px;height:5px;background:#314054;"></div>
<svg class="i" style="left:0;top:0" width="1381" height="700" viewBox="0 0 1381 700"><defs><radialGradient id="at" cx="0.46" cy="0.44" r="0.6"><stop offset="0" stop-color="#58584e"/><stop offset="0.28" stop-color="#454540"/><stop offset="0.55" stop-color="#141414"/><stop offset="1" stop-color="#050607"/></radialGradient></defs><path d="M516.6 260.3L533.6 260.3M516.6 260.3L508.2 274.9M533.6 260.3L542.0 274.9M567.4 260.3L584.3 260.3M567.4 260.3L558.9 274.9M584.3 260.3L592.7 274.9M618.1 260.3L635.0 260.3M618.1 260.3L609.7 274.9M635.0 260.3L643.5 274.9M668.8 260.3L685.7 260.3M668.8 260.3L660.4 274.9M685.7 260.3L694.2 274.9M719.6 260.3L736.5 260.3M719.6 260.3L711.1 274.9M736.5 260.3L744.9 274.9M770.3 260.3L787.2 260.3M770.3 260.3L761.8 274.9M787.2 260.3L795.7 274.9M821.0 260.3L837.9 260.3M821.0 260.3L812.6 274.9M837.9 260.3L846.4 274.9M871.8 260.3L888.7 260.3M871.8 260.3L863.3 274.9M888.7 260.3L897.1 274.9M922.5 260.3L939.4 260.3M922.5 260.3L914.0 274.9M939.4 260.3L947.9 274.9M973.2 260.3L990.1 260.3M973.2 260.3L964.8 274.9M990.1 260.3L998.6 274.9M1024.0 260.3L1040.9 260.3M1024.0 260.3L1015.5 274.9M1040.9 260.3L1049.3 274.9M1074.7 260.3L1091.6 260.3M1074.7 260.3L1066.2 274.9M1091.6 260.3L1100.0 274.9M1125.4 260.3L1142.3 260.3M1125.4 260.3L1117.0 274.9M1142.3 260.3L1150.8 274.9M542.0 274.9L558.9 274.9M592.7 274.9L609.7 274.9M643.5 274.9L660.4 274.9M694.2 274.9L711.1 274.9M744.9 274.9L761.8 274.9M795.7 274.9L812.6 274.9M846.4 274.9L863.3 274.9M897.1 274.9L914.0 274.9M947.9 274.9L964.8 274.9M998.6 274.9L1015.5 274.9M1049.3 274.9L1066.2 274.9M1100.0 274.9L1117.0 274.9M516.6 289.6L533.6 289.6M516.6 289.6L508.2 275.0M533.6 289.6L542.0 275.0M516.6 289.6L508.2 304.2M533.6 289.6L542.0 304.2M567.4 289.6L584.3 289.6M567.4 289.6L558.9 275.0M584.3 289.6L592.7 275.0M567.4 289.6L558.9 304.2M584.3 289.6L592.7 304.2M618.1 289.6L635.0 289.6M618.1 289.6L609.7 275.0M635.0 289.6L643.5 275.0M618.1 289.6L609.7 304.2M635.0 289.6L643.5 304.2M668.8 289.6L685.7 289.6M668.8 289.6L660.4 275.0M685.7 289.6L694.2 275.0M668.8 289.6L660.4 304.2M685.7 289.6L694.2 304.2M719.6 289.6L736.5 289.6M719.6 289.6L711.1 275.0M736.5 289.6L744.9 275.0M719.6 289.6L711.1 304.2M736.5 289.6L744.9 304.2M770.3 289.6L787.2 289.6M770.3 289.6L761.8 275.0M787.2 289.6L795.7 275.0M770.3 289.6L761.8 304.2M787.2 289.6L795.7 304.2M821.0 289.6L837.9 289.6M821.0 289.6L812.6 275.0M837.9 289.6L846.4 275.0M821.0 289.6L812.6 304.2M837.9 289.6L846.4 304.2M871.8 289.6L888.7 289.6M871.8 289.6L863.3 275.0M888.7 289.6L897.1 275.0M871.8 289.6L863.3 304.2M888.7 289.6L897.1 304.2M922.5 289.6L939.4 289.6M922.5 289.6L914.0 275.0M939.4 289.6L947.9 275.0M922.5 289.6L914.0 304.2M939.4 289.6L947.9 304.2M973.2 289.6L990.1 289.6M973.2 289.6L964.8 275.0M990.1 289.6L998.6 275.0M973.2 289.6L964.8 304.2M990.1 289.6L998.6 304.2M1024.0 289.6L1040.9 289.6M1024.0 289.6L1015.5 275.0M1040.9 289.6L1049.3 275.0M1024.0 289.6L1015.5 304.2M1040.9 289.6L1049.3 304.2M1074.7 289.6L1091.6 289.6M1074.7 289.6L1066.2 275.0M1091.6 289.6L1100.0 275.0M1074.7 289.6L1066.2 304.2M1091.6 289.6L1100.0 304.2M1125.4 289.6L1142.3 289.6M1125.4 289.6L1117.0 275.0M1142.3 289.6L1150.8 275.0M1125.4 289.6L1117.0 304.2M1142.3 289.6L1150.8 304.2M542.0 304.2L558.9 304.2M592.7 304.2L609.7 304.2M643.5 304.2L660.4 304.2M694.2 304.2L711.1 304.2M744.9 304.2L761.8 304.2M795.7 304.2L812.6 304.2M846.4 304.2L863.3 304.2M897.1 304.2L914.0 304.2M947.9 304.2L964.8 304.2M998.6 304.2L1015.5 304.2M1049.3 304.2L1066.2 304.2M1100.0 304.2L1117.0 304.2M516.6 318.9L533.6 318.9M516.6 318.9L508.2 304.3M533.6 318.9L542.0 304.3M516.6 318.9L508.2 333.6M533.6 318.9L542.0 333.6M567.4 318.9L584.3 318.9M567.4 318.9L558.9 304.3M584.3 318.9L592.7 304.3M567.4 318.9L558.9 333.6M584.3 318.9L592.7 333.6M618.1 318.9L635.0 318.9M618.1 318.9L609.7 304.3M635.0 318.9L643.5 304.3M618.1 318.9L609.7 333.6M635.0 318.9L643.5 333.6M668.8 318.9L685.7 318.9M668.8 318.9L660.4 304.3M685.7 318.9L694.2 304.3M668.8 318.9L660.4 333.6M685.7 318.9L694.2 333.6M719.6 318.9L736.5 318.9M719.6 318.9L711.1 304.3M736.5 318.9L744.9 304.3M719.6 318.9L711.1 333.6M736.5 318.9L744.9 333.6M770.3 318.9L787.2 318.9M770.3 318.9L761.8 304.3M787.2 318.9L795.7 304.3M770.3 318.9L761.8 333.6M787.2 318.9L795.7 333.6M821.0 318.9L837.9 318.9M821.0 318.9L812.6 304.3M837.9 318.9L846.4 304.3M821.0 318.9L812.6 333.6M837.9 318.9L846.4 333.6M871.8 318.9L888.7 318.9M871.8 318.9L863.3 304.3M888.7 318.9L897.1 304.3M871.8 318.9L863.3 333.6M888.7 318.9L897.1 333.6M922.5 318.9L939.4 318.9M922.5 318.9L914.0 304.3M939.4 318.9L947.9 304.3M922.5 318.9L914.0 333.6M939.4 318.9L947.9 333.6M973.2 318.9L990.1 318.9M973.2 318.9L964.8 304.3M990.1 318.9L998.6 304.3M973.2 318.9L964.8 333.6M990.1 318.9L998.6 333.6M1024.0 318.9L1040.9 318.9M1024.0 318.9L1015.5 304.3M1040.9 318.9L1049.3 304.3M1024.0 318.9L1015.5 333.6M1040.9 318.9L1049.3 333.6M1074.7 318.9L1091.6 318.9M1074.7 318.9L1066.2 304.3M1091.6 318.9L1100.0 304.3M1074.7 318.9L1066.2 333.6M1091.6 318.9L1100.0 333.6M1125.4 318.9L1142.3 318.9M1125.4 318.9L1117.0 304.3M1142.3 318.9L1150.8 304.3M1125.4 318.9L1117.0 333.6M1142.3 318.9L1150.8 333.6M542.0 333.6L558.9 333.6M592.7 333.6L609.7 333.6M643.5 333.6L660.4 333.6M694.2 333.6L711.1 333.6M744.9 333.6L761.8 333.6M795.7 333.6L812.6 333.6M846.4 333.6L863.3 333.6M897.1 333.6L914.0 333.6M947.9 333.6L964.8 333.6M998.6 333.6L1015.5 333.6M1049.3 333.6L1066.2 333.6M1100.0 333.6L1117.0 333.6M516.6 348.2L533.6 348.2M516.6 348.2L508.2 333.6M533.6 348.2L542.0 333.6M516.6 348.2L508.2 362.9M533.6 348.2L542.0 362.9M567.4 348.2L584.3 348.2M567.4 348.2L558.9 333.6M584.3 348.2L592.7 333.6M567.4 348.2L558.9 362.9M584.3 348.2L592.7 362.9M618.1 348.2L635.0 348.2M618.1 348.2L609.7 333.6M635.0 348.2L643.5 333.6M618.1 348.2L609.7 362.9M635.0 348.2L643.5 362.9M668.8 348.2L685.7 348.2M668.8 348.2L660.4 333.6M685.7 348.2L694.2 333.6M668.8 348.2L660.4 362.9M685.7 348.2L694.2 362.9M719.6 348.2L736.5 348.2M719.6 348.2L711.1 333.6M736.5 348.2L744.9 333.6M719.6 348.2L711.1 362.9M736.5 348.2L744.9 362.9M770.3 348.2L787.2 348.2M770.3 348.2L761.8 333.6M787.2 348.2L795.7 333.6M770.3 348.2L761.8 362.9M787.2 348.2L795.7 362.9M821.0 348.2L837.9 348.2M821.0 348.2L812.6 333.6M837.9 348.2L846.4 333.6M821.0 348.2L812.6 362.9M837.9 348.2L846.4 362.9M871.8 348.2L888.7 348.2M871.8 348.2L863.3 333.6M888.7 348.2L897.1 333.6M871.8 348.2L863.3 362.9M888.7 348.2L897.1 362.9M922.5 348.2L939.4 348.2M922.5 348.2L914.0 333.6M939.4 348.2L947.9 333.6M922.5 348.2L914.0 362.9M939.4 348.2L947.9 362.9M973.2 348.2L990.1 348.2M973.2 348.2L964.8 333.6M990.1 348.2L998.6 333.6M973.2 348.2L964.8 362.9M990.1 348.2L998.6 362.9M1024.0 348.2L1040.9 348.2M1024.0 348.2L1015.5 333.6M1040.9 348.2L1049.3 333.6M1024.0 348.2L1015.5 362.9M1040.9 348.2L1049.3 362.9M1074.7 348.2L1091.6 348.2M1074.7 348.2L1066.2 333.6M1091.6 348.2L1100.0 333.6M1074.7 348.2L1066.2 362.9M1091.6 348.2L1100.0 362.9M1125.4 348.2L1142.3 348.2M1125.4 348.2L1117.0 333.6M1142.3 348.2L1150.8 333.6M1125.4 348.2L1117.0 362.9M1142.3 348.2L1150.8 362.9M542.0 362.9L558.9 362.9M592.7 362.9L609.7 362.9M643.5 362.9L660.4 362.9M694.2 362.9L711.1 362.9M744.9 362.9L761.8 362.9M795.7 362.9L812.6 362.9M846.4 362.9L863.3 362.9M897.1 362.9L914.0 362.9M947.9 362.9L964.8 362.9M998.6 362.9L1015.5 362.9M1049.3 362.9L1066.2 362.9M1100.0 362.9L1117.0 362.9M516.6 377.5L533.6 377.5M516.6 377.5L508.2 362.9M533.6 377.5L542.0 362.9M516.6 377.5L508.2 392.1M533.6 377.5L542.0 392.1M567.4 377.5L584.3 377.5M567.4 377.5L558.9 362.9M584.3 377.5L592.7 362.9M567.4 377.5L558.9 392.1M584.3 377.5L592.7 392.1M618.1 377.5L635.0 377.5M618.1 377.5L609.7 362.9M635.0 377.5L643.5 362.9M618.1 377.5L609.7 392.1M635.0 377.5L643.5 392.1M668.8 377.5L685.7 377.5M668.8 377.5L660.4 362.9M685.7 377.5L694.2 362.9M668.8 377.5L660.4 392.1M685.7 377.5L694.2 392.1M719.6 377.5L736.5 377.5M719.6 377.5L711.1 362.9M736.5 377.5L744.9 362.9M719.6 377.5L711.1 392.1M736.5 377.5L744.9 392.1M770.3 377.5L787.2 377.5M770.3 377.5L761.8 362.9M787.2 377.5L795.7 362.9M770.3 377.5L761.8 392.1M787.2 377.5L795.7 392.1M821.0 377.5L837.9 377.5M821.0 377.5L812.6 362.9M837.9 377.5L846.4 362.9M821.0 377.5L812.6 392.1M837.9 377.5L846.4 392.1M871.8 377.5L888.7 377.5M871.8 377.5L863.3 362.9M888.7 377.5L897.1 362.9M871.8 377.5L863.3 392.1M888.7 377.5L897.1 392.1M922.5 377.5L939.4 377.5M922.5 377.5L914.0 362.9M939.4 377.5L947.9 362.9M922.5 377.5L914.0 392.1M939.4 377.5L947.9 392.1M973.2 377.5L990.1 377.5M973.2 377.5L964.8 362.9M990.1 377.5L998.6 362.9M973.2 377.5L964.8 392.1M990.1 377.5L998.6 392.1M1024.0 377.5L1040.9 377.5M1024.0 377.5L1015.5 362.9M1040.9 377.5L1049.3 362.9M1024.0 377.5L1015.5 392.1M1040.9 377.5L1049.3 392.1M1074.7 377.5L1091.6 377.5M1074.7 377.5L1066.2 362.9M1091.6 377.5L1100.0 362.9M1074.7 377.5L1066.2 392.1M1091.6 377.5L1100.0 392.1M1125.4 377.5L1142.3 377.5M1125.4 377.5L1117.0 362.9M1142.3 377.5L1150.8 362.9M1125.4 377.5L1117.0 392.1M1142.3 377.5L1150.8 392.1M542.0 392.1L558.9 392.1M592.7 392.1L609.7 392.1M643.5 392.1L660.4 392.1M694.2 392.1L711.1 392.1M744.9 392.1L761.8 392.1M795.7 392.1L812.6 392.1M846.4 392.1L863.3 392.1M897.1 392.1L914.0 392.1M947.9 392.1L964.8 392.1M998.6 392.1L1015.5 392.1M1049.3 392.1L1066.2 392.1M1100.0 392.1L1117.0 392.1M516.6 406.8L533.6 406.8M516.6 406.8L508.2 392.2M533.6 406.8L542.0 392.2M516.6 406.8L508.2 421.4M533.6 406.8L542.0 421.4M567.4 406.8L584.3 406.8M567.4 406.8L558.9 392.2M584.3 406.8L592.7 392.2M567.4 406.8L558.9 421.4M584.3 406.8L592.7 421.4M618.1 406.8L635.0 406.8M618.1 406.8L609.7 392.2M635.0 406.8L643.5 392.2M618.1 406.8L609.7 421.4M635.0 406.8L643.5 421.4M668.8 406.8L685.7 406.8M668.8 406.8L660.4 392.2M685.7 406.8L694.2 392.2M668.8 406.8L660.4 421.4M685.7 406.8L694.2 421.4M719.6 406.8L736.5 406.8M719.6 406.8L711.1 392.2M736.5 406.8L744.9 392.2M719.6 406.8L711.1 421.4M736.5 406.8L744.9 421.4M770.3 406.8L787.2 406.8M770.3 406.8L761.8 392.2M787.2 406.8L795.7 392.2M770.3 406.8L761.8 421.4M787.2 406.8L795.7 421.4M821.0 406.8L837.9 406.8M821.0 406.8L812.6 392.2M837.9 406.8L846.4 392.2M821.0 406.8L812.6 421.4M837.9 406.8L846.4 421.4M871.8 406.8L888.7 406.8M871.8 406.8L863.3 392.2M888.7 406.8L897.1 392.2M871.8 406.8L863.3 421.4M888.7 406.8L897.1 421.4M922.5 406.8L939.4 406.8M922.5 406.8L914.0 392.2M939.4 406.8L947.9 392.2M922.5 406.8L914.0 421.4M939.4 406.8L947.9 421.4M973.2 406.8L990.1 406.8M973.2 406.8L964.8 392.2M990.1 406.8L998.6 392.2M973.2 406.8L964.8 421.4M990.1 406.8L998.6 421.4M1024.0 406.8L1040.9 406.8M1024.0 406.8L1015.5 392.2M1040.9 406.8L1049.3 392.2M1024.0 406.8L1015.5 421.4M1040.9 406.8L1049.3 421.4M1074.7 406.8L1091.6 406.8M1074.7 406.8L1066.2 392.2M1091.6 406.8L1100.0 392.2M1074.7 406.8L1066.2 421.4M1091.6 406.8L1100.0 421.4M1125.4 406.8L1142.3 406.8M1125.4 406.8L1117.0 392.2M1142.3 406.8L1150.8 392.2M1125.4 406.8L1117.0 421.4M1142.3 406.8L1150.8 421.4M542.0 421.5L558.9 421.5M592.7 421.5L609.7 421.5M643.5 421.5L660.4 421.5M694.2 421.5L711.1 421.5M744.9 421.5L761.8 421.5M795.7 421.5L812.6 421.5M846.4 421.5L863.3 421.5M897.1 421.5L914.0 421.5M947.9 421.5L964.8 421.5M998.6 421.5L1015.5 421.5M1049.3 421.5L1066.2 421.5M1100.0 421.5L1117.0 421.5M516.6 436.1L533.6 436.1M516.6 436.1L508.2 421.5M533.6 436.1L542.0 421.5M516.6 436.1L508.2 450.8M533.6 436.1L542.0 450.8M567.4 436.1L584.3 436.1M567.4 436.1L558.9 421.5M584.3 436.1L592.7 421.5M567.4 436.1L558.9 450.8M584.3 436.1L592.7 450.8M618.1 436.1L635.0 436.1M618.1 436.1L609.7 421.5M635.0 436.1L643.5 421.5M618.1 436.1L609.7 450.8M635.0 436.1L643.5 450.8M668.8 436.1L685.7 436.1M668.8 436.1L660.4 421.5M685.7 436.1L694.2 421.5M668.8 436.1L660.4 450.8M685.7 436.1L694.2 450.8M719.6 436.1L736.5 436.1M719.6 436.1L711.1 421.5M736.5 436.1L744.9 421.5M719.6 436.1L711.1 450.8M736.5 436.1L744.9 450.8M770.3 436.1L787.2 436.1M770.3 436.1L761.8 421.5M787.2 436.1L795.7 421.5M770.3 436.1L761.8 450.8M787.2 436.1L795.7 450.8M821.0 436.1L837.9 436.1M821.0 436.1L812.6 421.5M837.9 436.1L846.4 421.5M821.0 436.1L812.6 450.8M837.9 436.1L846.4 450.8M871.8 436.1L888.7 436.1M871.8 436.1L863.3 421.5M888.7 436.1L897.1 421.5M871.8 436.1L863.3 450.8M888.7 436.1L897.1 450.8M922.5 436.1L939.4 436.1M922.5 436.1L914.0 421.5M939.4 436.1L947.9 421.5M922.5 436.1L914.0 450.8M939.4 436.1L947.9 450.8M973.2 436.1L990.1 436.1M973.2 436.1L964.8 421.5M990.1 436.1L998.6 421.5M973.2 436.1L964.8 450.8M990.1 436.1L998.6 450.8M1024.0 436.1L1040.9 436.1M1024.0 436.1L1015.5 421.5M1040.9 436.1L1049.3 421.5M1024.0 436.1L1015.5 450.8M1040.9 436.1L1049.3 450.8M1074.7 436.1L1091.6 436.1M1074.7 436.1L1066.2 421.5M1091.6 436.1L1100.0 421.5M1074.7 436.1L1066.2 450.8M1091.6 436.1L1100.0 450.8M1125.4 436.1L1142.3 436.1M1125.4 436.1L1117.0 421.5M1142.3 436.1L1150.8 421.5M1125.4 436.1L1117.0 450.8M1142.3 436.1L1150.8 450.8M542.0 450.8L558.9 450.8M592.7 450.8L609.7 450.8M643.5 450.8L660.4 450.8M694.2 450.8L711.1 450.8M744.9 450.8L761.8 450.8M795.7 450.8L812.6 450.8M846.4 450.8L863.3 450.8M897.1 450.8L914.0 450.8M947.9 450.8L964.8 450.8M998.6 450.8L1015.5 450.8M1049.3 450.8L1066.2 450.8M1100.0 450.8L1117.0 450.8M516.6 465.4L533.6 465.4M516.6 465.4L508.2 450.8M533.6 465.4L542.0 450.8M516.6 465.4L508.2 480.0M533.6 465.4L542.0 480.0M567.4 465.4L584.3 465.4M567.4 465.4L558.9 450.8M584.3 465.4L592.7 450.8M567.4 465.4L558.9 480.0M584.3 465.4L592.7 480.0M618.1 465.4L635.0 465.4M618.1 465.4L609.7 450.8M635.0 465.4L643.5 450.8M618.1 465.4L609.7 480.0M635.0 465.4L643.5 480.0M668.8 465.4L685.7 465.4M668.8 465.4L660.4 450.8M685.7 465.4L694.2 450.8M668.8 465.4L660.4 480.0M685.7 465.4L694.2 480.0M719.6 465.4L736.5 465.4M719.6 465.4L711.1 450.8M736.5 465.4L744.9 450.8M719.6 465.4L711.1 480.0M736.5 465.4L744.9 480.0M770.3 465.4L787.2 465.4M770.3 465.4L761.8 450.8M787.2 465.4L795.7 450.8M770.3 465.4L761.8 480.0M787.2 465.4L795.7 480.0M821.0 465.4L837.9 465.4M821.0 465.4L812.6 450.8M837.9 465.4L846.4 450.8M821.0 465.4L812.6 480.0M837.9 465.4L846.4 480.0M871.8 465.4L888.7 465.4M871.8 465.4L863.3 450.8M888.7 465.4L897.1 450.8M871.8 465.4L863.3 480.0M888.7 465.4L897.1 480.0M922.5 465.4L939.4 465.4M922.5 465.4L914.0 450.8M939.4 465.4L947.9 450.8M922.5 465.4L914.0 480.0M939.4 465.4L947.9 480.0M973.2 465.4L990.1 465.4M973.2 465.4L964.8 450.8M990.1 465.4L998.6 450.8M973.2 465.4L964.8 480.0M990.1 465.4L998.6 480.0M1024.0 465.4L1040.9 465.4M1024.0 465.4L1015.5 450.8M1040.9 465.4L1049.3 450.8M1024.0 465.4L1015.5 480.0M1040.9 465.4L1049.3 480.0M1074.7 465.4L1091.6 465.4M1074.7 465.4L1066.2 450.8M1091.6 465.4L1100.0 450.8M1074.7 465.4L1066.2 480.0M1091.6 465.4L1100.0 480.0M1125.4 465.4L1142.3 465.4M1125.4 465.4L1117.0 450.8M1142.3 465.4L1150.8 450.8M1125.4 465.4L1117.0 480.0M1142.3 465.4L1150.8 480.0M542.0 480.1L558.9 480.1M592.7 480.1L609.7 480.1M643.5 480.1L660.4 480.1M694.2 480.1L711.1 480.1M744.9 480.1L761.8 480.1M795.7 480.1L812.6 480.1M846.4 480.1L863.3 480.1M897.1 480.1L914.0 480.1M947.9 480.1L964.8 480.1M998.6 480.1L1015.5 480.1M1049.3 480.1L1066.2 480.1M1100.0 480.1L1117.0 480.1M516.6 494.7L533.6 494.7M516.6 494.7L508.2 480.1M533.6 494.7L542.0 480.1M516.6 494.7L508.2 509.4M533.6 494.7L542.0 509.4M567.4 494.7L584.3 494.7M567.4 494.7L558.9 480.1M584.3 494.7L592.7 480.1M567.4 494.7L558.9 509.4M584.3 494.7L592.7 509.4M618.1 494.7L635.0 494.7M618.1 494.7L609.7 480.1M635.0 494.7L643.5 480.1M618.1 494.7L609.7 509.4M635.0 494.7L643.5 509.4M668.8 494.7L685.7 494.7M668.8 494.7L660.4 480.1M685.7 494.7L694.2 480.1M668.8 494.7L660.4 509.4M685.7 494.7L694.2 509.4M719.6 494.7L736.5 494.7M719.6 494.7L711.1 480.1M736.5 494.7L744.9 480.1M719.6 494.7L711.1 509.4M736.5 494.7L744.9 509.4M770.3 494.7L787.2 494.7M770.3 494.7L761.8 480.1M787.2 494.7L795.7 480.1M770.3 494.7L761.8 509.4M787.2 494.7L795.7 509.4M821.0 494.7L837.9 494.7M821.0 494.7L812.6 480.1M837.9 494.7L846.4 480.1M821.0 494.7L812.6 509.4M837.9 494.7L846.4 509.4M871.8 494.7L888.7 494.7M871.8 494.7L863.3 480.1M888.7 494.7L897.1 480.1M871.8 494.7L863.3 509.4M888.7 494.7L897.1 509.4M922.5 494.7L939.4 494.7M922.5 494.7L914.0 480.1M939.4 494.7L947.9 480.1M922.5 494.7L914.0 509.4M939.4 494.7L947.9 509.4M973.2 494.7L990.1 494.7M973.2 494.7L964.8 480.1M990.1 494.7L998.6 480.1M973.2 494.7L964.8 509.4M990.1 494.7L998.6 509.4M1024.0 494.7L1040.9 494.7M1024.0 494.7L1015.5 480.1M1040.9 494.7L1049.3 480.1M1024.0 494.7L1015.5 509.4M1040.9 494.7L1049.3 509.4M1074.7 494.7L1091.6 494.7M1074.7 494.7L1066.2 480.1M1091.6 494.7L1100.0 480.1M1074.7 494.7L1066.2 509.4M1091.6 494.7L1100.0 509.4M1125.4 494.7L1142.3 494.7M1125.4 494.7L1117.0 480.1M1142.3 494.7L1150.8 480.1M1125.4 494.7L1117.0 509.4M1142.3 494.7L1150.8 509.4M542.0 509.4L558.9 509.4M592.7 509.4L609.7 509.4M643.5 509.4L660.4 509.4M694.2 509.4L711.1 509.4M744.9 509.4L761.8 509.4M795.7 509.4L812.6 509.4M846.4 509.4L863.3 509.4M897.1 509.4L914.0 509.4M947.9 509.4L964.8 509.4M998.6 509.4L1015.5 509.4M1049.3 509.4L1066.2 509.4M1100.0 509.4L1117.0 509.4M516.6 524.0L533.6 524.0M516.6 524.0L508.2 509.4M533.6 524.0L542.0 509.4M516.6 524.0L508.2 538.6M533.6 524.0L542.0 538.6M567.4 524.0L584.3 524.0M567.4 524.0L558.9 509.4M584.3 524.0L592.7 509.4M567.4 524.0L558.9 538.6M584.3 524.0L592.7 538.6M618.1 524.0L635.0 524.0M618.1 524.0L609.7 509.4M635.0 524.0L643.5 509.4M618.1 524.0L609.7 538.6M635.0 524.0L643.5 538.6M668.8 524.0L685.7 524.0M668.8 524.0L660.4 509.4M685.7 524.0L694.2 509.4M668.8 524.0L660.4 538.6M685.7 524.0L694.2 538.6M719.6 524.0L736.5 524.0M719.6 524.0L711.1 509.4M736.5 524.0L744.9 509.4M719.6 524.0L711.1 538.6M736.5 524.0L744.9 538.6M770.3 524.0L787.2 524.0M770.3 524.0L761.8 509.4M787.2 524.0L795.7 509.4M770.3 524.0L761.8 538.6M787.2 524.0L795.7 538.6M821.0 524.0L837.9 524.0M821.0 524.0L812.6 509.4M837.9 524.0L846.4 509.4M821.0 524.0L812.6 538.6M837.9 524.0L846.4 538.6M871.8 524.0L888.7 524.0M871.8 524.0L863.3 509.4M888.7 524.0L897.1 509.4M871.8 524.0L863.3 538.6M888.7 524.0L897.1 538.6M922.5 524.0L939.4 524.0M922.5 524.0L914.0 509.4M939.4 524.0L947.9 509.4M922.5 524.0L914.0 538.6M939.4 524.0L947.9 538.6M973.2 524.0L990.1 524.0M973.2 524.0L964.8 509.4M990.1 524.0L998.6 509.4M973.2 524.0L964.8 538.6M990.1 524.0L998.6 538.6M1024.0 524.0L1040.9 524.0M1024.0 524.0L1015.5 509.4M1040.9 524.0L1049.3 509.4M1024.0 524.0L1015.5 538.6M1040.9 524.0L1049.3 538.6M1074.7 524.0L1091.6 524.0M1074.7 524.0L1066.2 509.4M1091.6 524.0L1100.0 509.4M1074.7 524.0L1066.2 538.6M1091.6 524.0L1100.0 538.6M1125.4 524.0L1142.3 524.0M1125.4 524.0L1117.0 509.4M1142.3 524.0L1150.8 509.4M1125.4 524.0L1117.0 538.6M1142.3 524.0L1150.8 538.6M542.0 538.7L558.9 538.7M592.7 538.7L609.7 538.7M643.5 538.7L660.4 538.7M694.2 538.7L711.1 538.7M744.9 538.7L761.8 538.7M795.7 538.7L812.6 538.7M846.4 538.7L863.3 538.7M897.1 538.7L914.0 538.7M947.9 538.7L964.8 538.7M998.6 538.7L1015.5 538.7M1049.3 538.7L1066.2 538.7M1100.0 538.7L1117.0 538.7M516.6 553.3L533.6 553.3M516.6 553.3L508.2 538.6M533.6 553.3L542.0 538.6M516.6 553.3L508.2 567.9M533.6 553.3L542.0 567.9M567.4 553.3L584.3 553.3M567.4 553.3L558.9 538.6M584.3 553.3L592.7 538.6M567.4 553.3L558.9 567.9M584.3 553.3L592.7 567.9M618.1 553.3L635.0 553.3M618.1 553.3L609.7 538.6M635.0 553.3L643.5 538.6M618.1 553.3L609.7 567.9M635.0 553.3L643.5 567.9M668.8 553.3L685.7 553.3M668.8 553.3L660.4 538.6M685.7 553.3L694.2 538.6M668.8 553.3L660.4 567.9M685.7 553.3L694.2 567.9M719.6 553.3L736.5 553.3M719.6 553.3L711.1 538.6M736.5 553.3L744.9 538.6M719.6 553.3L711.1 567.9M736.5 553.3L744.9 567.9M770.3 553.3L787.2 553.3M770.3 553.3L761.8 538.6M787.2 553.3L795.7 538.6M770.3 553.3L761.8 567.9M787.2 553.3L795.7 567.9M821.0 553.3L837.9 553.3M821.0 553.3L812.6 538.6M837.9 553.3L846.4 538.6M821.0 553.3L812.6 567.9M837.9 553.3L846.4 567.9M871.8 553.3L888.7 553.3M871.8 553.3L863.3 538.6M888.7 553.3L897.1 538.6M871.8 553.3L863.3 567.9M888.7 553.3L897.1 567.9M922.5 553.3L939.4 553.3M922.5 553.3L914.0 538.6M939.4 553.3L947.9 538.6M922.5 553.3L914.0 567.9M939.4 553.3L947.9 567.9M973.2 553.3L990.1 553.3M973.2 553.3L964.8 538.6M990.1 553.3L998.6 538.6M973.2 553.3L964.8 567.9M990.1 553.3L998.6 567.9M1024.0 553.3L1040.9 553.3M1024.0 553.3L1015.5 538.6M1040.9 553.3L1049.3 538.6M1024.0 553.3L1015.5 567.9M1040.9 553.3L1049.3 567.9M1074.7 553.3L1091.6 553.3M1074.7 553.3L1066.2 538.6M1091.6 553.3L1100.0 538.6M1074.7 553.3L1066.2 567.9M1091.6 553.3L1100.0 567.9M1125.4 553.3L1142.3 553.3M1125.4 553.3L1117.0 538.6M1142.3 553.3L1150.8 538.6M1125.4 553.3L1117.0 567.9M1142.3 553.3L1150.8 567.9M542.0 568.0L558.9 568.0M592.7 568.0L609.7 568.0M643.5 568.0L660.4 568.0M694.2 568.0L711.1 568.0M744.9 568.0L761.8 568.0M795.7 568.0L812.6 568.0M846.4 568.0L863.3 568.0M897.1 568.0L914.0 568.0M947.9 568.0L964.8 568.0M998.6 568.0L1015.5 568.0M1049.3 568.0L1066.2 568.0M1100.0 568.0L1117.0 568.0M516.6 582.6L533.6 582.6M516.6 582.6L508.2 568.0M533.6 582.6L542.0 568.0M516.6 582.6L508.2 597.2M533.6 582.6L542.0 597.2M567.4 582.6L584.3 582.6M567.4 582.6L558.9 568.0M584.3 582.6L592.7 568.0M567.4 582.6L558.9 597.2M584.3 582.6L592.7 597.2M618.1 582.6L635.0 582.6M618.1 582.6L609.7 568.0M635.0 582.6L643.5 568.0M618.1 582.6L609.7 597.2M635.0 582.6L643.5 597.2M668.8 582.6L685.7 582.6M668.8 582.6L660.4 568.0M685.7 582.6L694.2 568.0M668.8 582.6L660.4 597.2M685.7 582.6L694.2 597.2M719.6 582.6L736.5 582.6M719.6 582.6L711.1 568.0M736.5 582.6L744.9 568.0M719.6 582.6L711.1 597.2M736.5 582.6L744.9 597.2M770.3 582.6L787.2 582.6M770.3 582.6L761.8 568.0M787.2 582.6L795.7 568.0M770.3 582.6L761.8 597.2M787.2 582.6L795.7 597.2M821.0 582.6L837.9 582.6M821.0 582.6L812.6 568.0M837.9 582.6L846.4 568.0M821.0 582.6L812.6 597.2M837.9 582.6L846.4 597.2M871.8 582.6L888.7 582.6M871.8 582.6L863.3 568.0M888.7 582.6L897.1 568.0M871.8 582.6L863.3 597.2M888.7 582.6L897.1 597.2M922.5 582.6L939.4 582.6M922.5 582.6L914.0 568.0M939.4 582.6L947.9 568.0M922.5 582.6L914.0 597.2M939.4 582.6L947.9 597.2M973.2 582.6L990.1 582.6M973.2 582.6L964.8 568.0M990.1 582.6L998.6 568.0M973.2 582.6L964.8 597.2M990.1 582.6L998.6 597.2M1024.0 582.6L1040.9 582.6M1024.0 582.6L1015.5 568.0M1040.9 582.6L1049.3 568.0M1024.0 582.6L1015.5 597.2M1040.9 582.6L1049.3 597.2M1074.7 582.6L1091.6 582.6M1074.7 582.6L1066.2 568.0M1091.6 582.6L1100.0 568.0M1074.7 582.6L1066.2 597.2M1091.6 582.6L1100.0 597.2M1125.4 582.6L1142.3 582.6M1125.4 582.6L1117.0 568.0M1142.3 582.6L1150.8 568.0M1125.4 582.6L1117.0 597.2M1142.3 582.6L1150.8 597.2M542.0 597.2L558.9 597.2M592.7 597.2L609.7 597.2M643.5 597.2L660.4 597.2M694.2 597.2L711.1 597.2M744.9 597.2L761.8 597.2M795.7 597.2L812.6 597.2M846.4 597.2L863.3 597.2M897.1 597.2L914.0 597.2M947.9 597.2L964.8 597.2M998.6 597.2L1015.5 597.2M1049.3 597.2L1066.2 597.2M1100.0 597.2L1117.0 597.2M516.6 611.9L533.6 611.9M516.6 611.9L508.2 597.3M533.6 611.9L542.0 597.3M567.4 611.9L584.3 611.9M567.4 611.9L558.9 597.3M584.3 611.9L592.7 597.3M618.1 611.9L635.0 611.9M618.1 611.9L609.7 597.3M635.0 611.9L643.5 597.3M668.8 611.9L685.7 611.9M668.8 611.9L660.4 597.3M685.7 611.9L694.2 597.3M719.6 611.9L736.5 611.9M719.6 611.9L711.1 597.3M736.5 611.9L744.9 597.3M770.3 611.9L787.2 611.9M770.3 611.9L761.8 597.3M787.2 611.9L795.7 597.3M821.0 611.9L837.9 611.9M821.0 611.9L812.6 597.3M837.9 611.9L846.4 597.3M871.8 611.9L888.7 611.9M871.8 611.9L863.3 597.3M888.7 611.9L897.1 597.3M922.5 611.9L939.4 611.9M922.5 611.9L914.0 597.3M939.4 611.9L947.9 597.3M973.2 611.9L990.1 611.9M973.2 611.9L964.8 597.3M990.1 611.9L998.6 597.3M1024.0 611.9L1040.9 611.9M1024.0 611.9L1015.5 597.3M1040.9 611.9L1049.3 597.3M1074.7 611.9L1091.6 611.9M1074.7 611.9L1066.2 597.3M1091.6 611.9L1100.0 597.3M1125.4 611.9L1142.3 611.9M1125.4 611.9L1117.0 597.3M1142.3 611.9L1150.8 597.3" stroke="#0a0c0e" stroke-width="2.5" fill="none" stroke-linecap="round"/><g fill="url(#at)"><circle cx="516.6" cy="260.3" r="3.4"/><circle cx="533.6" cy="260.3" r="3.4"/><circle cx="567.4" cy="260.3" r="3.4"/><circle cx="584.3" cy="260.3" r="3.4"/><circle cx="618.1" cy="260.3" r="3.4"/><circle cx="635.0" cy="260.3" r="3.4"/><circle cx="668.8" cy="260.3" r="3.4"/><circle cx="685.7" cy="260.3" r="3.4"/><circle cx="719.6" cy="260.3" r="3.4"/><circle cx="736.5" cy="260.3" r="3.4"/><circle cx="770.3" cy="260.3" r="3.4"/><circle cx="787.2" cy="260.3" r="3.4"/><circle cx="821.0" cy="260.3" r="3.4"/><circle cx="837.9" cy="260.3" r="3.4"/><circle cx="871.8" cy="260.3" r="3.4"/><circle cx="888.7" cy="260.3" r="3.4"/><circle cx="922.5" cy="260.3" r="3.4"/><circle cx="939.4" cy="260.3" r="3.4"/><circle cx="973.2" cy="260.3" r="3.4"/><circle cx="990.1" cy="260.3" r="3.4"/><circle cx="1024.0" cy="260.3" r="3.4"/><circle cx="1040.9" cy="260.3" r="3.4"/><circle cx="1074.7" cy="260.3" r="3.4"/><circle cx="1091.6" cy="260.3" r="3.4"/><circle cx="1125.4" cy="260.3" r="3.4"/><circle cx="1142.3" cy="260.3" r="3.4"/><circle cx="508.2" cy="274.9" r="3.4"/><circle cx="542.0" cy="274.9" r="3.4"/><circle cx="558.9" cy="274.9" r="3.4"/><circle cx="592.7" cy="274.9" r="3.4"/><circle cx="609.7" cy="274.9" r="3.4"/><circle cx="643.5" cy="274.9" r="3.4"/><circle cx="660.4" cy="274.9" r="3.4"/><circle cx="694.2" cy="274.9" r="3.4"/><circle cx="711.1" cy="274.9" r="3.4"/><circle cx="744.9" cy="274.9" r="3.4"/><circle cx="761.8" cy="274.9" r="3.4"/><circle cx="795.7" cy="274.9" r="3.4"/><circle cx="812.6" cy="274.9" r="3.4"/><circle cx="846.4" cy="274.9" r="3.4"/><circle cx="863.3" cy="274.9" r="3.4"/><circle cx="897.1" cy="274.9" r="3.4"/><circle cx="914.0" cy="274.9" r="3.4"/><circle cx="947.9" cy="274.9" r="3.4"/><circle cx="964.8" cy="274.9" r="3.4"/><circle cx="998.6" cy="274.9" r="3.4"/><circle cx="1015.5" cy="274.9" r="3.4"/><circle cx="1049.3" cy="274.9" r="3.4"/><circle cx="1066.2" cy="274.9" r="3.4"/><circle cx="1100.0" cy="274.9" r="3.4"/><circle cx="1117.0" cy="274.9" r="3.4"/><circle cx="1150.8" cy="274.9" r="3.4"/><circle cx="516.6" cy="289.6" r="3.4"/><circle cx="533.6" cy="289.6" r="3.4"/><circle cx="567.4" cy="289.6" r="3.4"/><circle cx="584.3" cy="289.6" r="3.4"/><circle cx="618.1" cy="289.6" r="3.4"/><circle cx="635.0" cy="289.6" r="3.4"/><circle cx="668.8" cy="289.6" r="3.4"/><circle cx="685.7" cy="289.6" r="3.4"/><circle cx="719.6" cy="289.6" r="3.4"/><circle cx="736.5" cy="289.6" r="3.4"/><circle cx="770.3" cy="289.6" r="3.4"/><circle cx="787.2" cy="289.6" r="3.4"/><circle cx="821.0" cy="289.6" r="3.4"/><circle cx="837.9" cy="289.6" r="3.4"/><circle cx="871.8" cy="289.6" r="3.4"/><circle cx="888.7" cy="289.6" r="3.4"/><circle cx="922.5" cy="289.6" r="3.4"/><circle cx="939.4" cy="289.6" r="3.4"/><circle cx="973.2" cy="289.6" r="3.4"/><circle cx="990.1" cy="289.6" r="3.4"/><circle cx="1024.0" cy="289.6" r="3.4"/><circle cx="1040.9" cy="289.6" r="3.4"/><circle cx="1074.7" cy="289.6" r="3.4"/><circle cx="1091.6" cy="289.6" r="3.4"/><circle cx="1125.4" cy="289.6" r="3.4"/><circle cx="1142.3" cy="289.6" r="3.4"/><circle cx="508.2" cy="304.2" r="3.4"/><circle cx="542.0" cy="304.2" r="3.4"/><circle cx="558.9" cy="304.2" r="3.4"/><circle cx="592.7" cy="304.2" r="3.4"/><circle cx="609.7" cy="304.2" r="3.4"/><circle cx="643.5" cy="304.2" r="3.4"/><circle cx="660.4" cy="304.2" r="3.4"/><circle cx="694.2" cy="304.2" r="3.4"/><circle cx="711.1" cy="304.2" r="3.4"/><circle cx="744.9" cy="304.2" r="3.4"/><circle cx="761.8" cy="304.2" r="3.4"/><circle cx="795.7" cy="304.2" r="3.4"/><circle cx="812.6" cy="304.2" r="3.4"/><circle cx="846.4" cy="304.2" r="3.4"/><circle cx="863.3" cy="304.2" r="3.4"/><circle cx="897.1" cy="304.2" r="3.4"/><circle cx="914.0" cy="304.2" r="3.4"/><circle cx="947.9" cy="304.2" r="3.4"/><circle cx="964.8" cy="304.2" r="3.4"/><circle cx="998.6" cy="304.2" r="3.4"/><circle cx="1015.5" cy="304.2" r="3.4"/><circle cx="1049.3" cy="304.2" r="3.4"/><circle cx="1066.2" cy="304.2" r="3.4"/><circle cx="1100.0" cy="304.2" r="3.4"/><circle cx="1117.0" cy="304.2" r="3.4"/><circle cx="1150.8" cy="304.2" r="3.4"/><circle cx="516.6" cy="318.9" r="3.4"/><circle cx="533.6" cy="318.9" r="3.4"/><circle cx="567.4" cy="318.9" r="3.4"/><circle cx="584.3" cy="318.9" r="3.4"/><circle cx="618.1" cy="318.9" r="3.4"/><circle cx="635.0" cy="318.9" r="3.4"/><circle cx="668.8" cy="318.9" r="3.4"/><circle cx="685.7" cy="318.9" r="3.4"/><circle cx="719.6" cy="318.9" r="3.4"/><circle cx="736.5" cy="318.9" r="3.4"/><circle cx="770.3" cy="318.9" r="3.4"/><circle cx="787.2" cy="318.9" r="3.4"/><circle cx="821.0" cy="318.9" r="3.4"/><circle cx="837.9" cy="318.9" r="3.4"/><circle cx="871.8" cy="318.9" r="3.4"/><circle cx="888.7" cy="318.9" r="3.4"/><circle cx="922.5" cy="318.9" r="3.4"/><circle cx="939.4" cy="318.9" r="3.4"/><circle cx="973.2" cy="318.9" r="3.4"/><circle cx="990.1" cy="318.9" r="3.4"/><circle cx="1024.0" cy="318.9" r="3.4"/><circle cx="1040.9" cy="318.9" r="3.4"/><circle cx="1074.7" cy="318.9" r="3.4"/><circle cx="1091.6" cy="318.9" r="3.4"/><circle cx="1125.4" cy="318.9" r="3.4"/><circle cx="1142.3" cy="318.9" r="3.4"/><circle cx="508.2" cy="333.6" r="3.4"/><circle cx="542.0" cy="333.6" r="3.4"/><circle cx="558.9" cy="333.6" r="3.4"/><circle cx="592.7" cy="333.6" r="3.4"/><circle cx="609.7" cy="333.6" r="3.4"/><circle cx="643.5" cy="333.6" r="3.4"/><circle cx="660.4" cy="333.6" r="3.4"/><circle cx="694.2" cy="333.6" r="3.4"/><circle cx="711.1" cy="333.6" r="3.4"/><circle cx="744.9" cy="333.6" r="3.4"/><circle cx="761.8" cy="333.6" r="3.4"/><circle cx="795.7" cy="333.6" r="3.4"/><circle cx="812.6" cy="333.6" r="3.4"/><circle cx="846.4" cy="333.6" r="3.4"/><circle cx="863.3" cy="333.6" r="3.4"/><circle cx="897.1" cy="333.6" r="3.4"/><circle cx="914.0" cy="333.6" r="3.4"/><circle cx="947.9" cy="333.6" r="3.4"/><circle cx="964.8" cy="333.6" r="3.4"/><circle cx="998.6" cy="333.6" r="3.4"/><circle cx="1015.5" cy="333.6" r="3.4"/><circle cx="1049.3" cy="333.6" r="3.4"/><circle cx="1066.2" cy="333.6" r="3.4"/><circle cx="1100.0" cy="333.6" r="3.4"/><circle cx="1117.0" cy="333.6" r="3.4"/><circle cx="1150.8" cy="333.6" r="3.4"/><circle cx="516.6" cy="348.2" r="3.4"/><circle cx="533.6" cy="348.2" r="3.4"/><circle cx="567.4" cy="348.2" r="3.4"/><circle cx="584.3" cy="348.2" r="3.4"/><circle cx="618.1" cy="348.2" r="3.4"/><circle cx="635.0" cy="348.2" r="3.4"/><circle cx="668.8" cy="348.2" r="3.4"/><circle cx="685.7" cy="348.2" r="3.4"/><circle cx="719.6" cy="348.2" r="3.4"/><circle cx="736.5" cy="348.2" r="3.4"/><circle cx="770.3" cy="348.2" r="3.4"/><circle cx="787.2" cy="348.2" r="3.4"/><circle cx="821.0" cy="348.2" r="3.4"/><circle cx="837.9" cy="348.2" r="3.4"/><circle cx="871.8" cy="348.2" r="3.4"/><circle cx="888.7" cy="348.2" r="3.4"/><circle cx="922.5" cy="348.2" r="3.4"/><circle cx="939.4" cy="348.2" r="3.4"/><circle cx="973.2" cy="348.2" r="3.4"/><circle cx="990.1" cy="348.2" r="3.4"/><circle cx="1024.0" cy="348.2" r="3.4"/><circle cx="1040.9" cy="348.2" r="3.4"/><circle cx="1074.7" cy="348.2" r="3.4"/><circle cx="1091.6" cy="348.2" r="3.4"/><circle cx="1125.4" cy="348.2" r="3.4"/><circle cx="1142.3" cy="348.2" r="3.4"/><circle cx="508.2" cy="362.9" r="3.4"/><circle cx="542.0" cy="362.9" r="3.4"/><circle cx="558.9" cy="362.9" r="3.4"/><circle cx="592.7" cy="362.9" r="3.4"/><circle cx="609.7" cy="362.9" r="3.4"/><circle cx="643.5" cy="362.9" r="3.4"/><circle cx="660.4" cy="362.9" r="3.4"/><circle cx="694.2" cy="362.9" r="3.4"/><circle cx="711.1" cy="362.9" r="3.4"/><circle cx="744.9" cy="362.9" r="3.4"/><circle cx="761.8" cy="362.9" r="3.4"/><circle cx="795.7" cy="362.9" r="3.4"/><circle cx="812.6" cy="362.9" r="3.4"/><circle cx="846.4" cy="362.9" r="3.4"/><circle cx="863.3" cy="362.9" r="3.4"/><circle cx="897.1" cy="362.9" r="3.4"/><circle cx="914.0" cy="362.9" r="3.4"/><circle cx="947.9" cy="362.9" r="3.4"/><circle cx="964.8" cy="362.9" r="3.4"/><circle cx="998.6" cy="362.9" r="3.4"/><circle cx="1015.5" cy="362.9" r="3.4"/><circle cx="1049.3" cy="362.9" r="3.4"/><circle cx="1066.2" cy="362.9" r="3.4"/><circle cx="1100.0" cy="362.9" r="3.4"/><circle cx="1117.0" cy="362.9" r="3.4"/><circle cx="1150.8" cy="362.9" r="3.4"/><circle cx="516.6" cy="377.5" r="3.4"/><circle cx="533.6" cy="377.5" r="3.4"/><circle cx="567.4" cy="377.5" r="3.4"/><circle cx="584.3" cy="377.5" r="3.4"/><circle cx="618.1" cy="377.5" r="3.4"/><circle cx="635.0" cy="377.5" r="3.4"/><circle cx="668.8" cy="377.5" r="3.4"/><circle cx="685.7" cy="377.5" r="3.4"/><circle cx="719.6" cy="377.5" r="3.4"/><circle cx="736.5" cy="377.5" r="3.4"/><circle cx="770.3" cy="377.5" r="3.4"/><circle cx="787.2" cy="377.5" r="3.4"/><circle cx="821.0" cy="377.5" r="3.4"/><circle cx="837.9" cy="377.5" r="3.4"/><circle cx="871.8" cy="377.5" r="3.4"/><circle cx="888.7" cy="377.5" r="3.4"/><circle cx="922.5" cy="377.5" r="3.4"/><circle cx="939.4" cy="377.5" r="3.4"/><circle cx="973.2" cy="377.5" r="3.4"/><circle cx="990.1" cy="377.5" r="3.4"/><circle cx="1024.0" cy="377.5" r="3.4"/><circle cx="1040.9" cy="377.5" r="3.4"/><circle cx="1074.7" cy="377.5" r="3.4"/><circle cx="1091.6" cy="377.5" r="3.4"/><circle cx="1125.4" cy="377.5" r="3.4"/><circle cx="1142.3" cy="377.5" r="3.4"/><circle cx="508.2" cy="392.1" r="3.4"/><circle cx="542.0" cy="392.1" r="3.4"/><circle cx="558.9" cy="392.1" r="3.4"/><circle cx="592.7" cy="392.1" r="3.4"/><circle cx="609.7" cy="392.1" r="3.4"/><circle cx="643.5" cy="392.1" r="3.4"/><circle cx="660.4" cy="392.1" r="3.4"/><circle cx="694.2" cy="392.1" r="3.4"/><circle cx="711.1" cy="392.1" r="3.4"/><circle cx="744.9" cy="392.1" r="3.4"/><circle cx="761.8" cy="392.1" r="3.4"/><circle cx="795.7" cy="392.1" r="3.4"/><circle cx="812.6" cy="392.1" r="3.4"/><circle cx="846.4" cy="392.1" r="3.4"/><circle cx="863.3" cy="392.1" r="3.4"/><circle cx="897.1" cy="392.1" r="3.4"/><circle cx="914.0" cy="392.1" r="3.4"/><circle cx="947.9" cy="392.1" r="3.4"/><circle cx="964.8" cy="392.1" r="3.4"/><circle cx="998.6" cy="392.1" r="3.4"/><circle cx="1015.5" cy="392.1" r="3.4"/><circle cx="1049.3" cy="392.1" r="3.4"/><circle cx="1066.2" cy="392.1" r="3.4"/><circle cx="1100.0" cy="392.1" r="3.4"/><circle cx="1117.0" cy="392.1" r="3.4"/><circle cx="1150.8" cy="392.1" r="3.4"/><circle cx="516.6" cy="406.8" r="3.4"/><circle cx="533.6" cy="406.8" r="3.4"/><circle cx="567.4" cy="406.8" r="3.4"/><circle cx="584.3" cy="406.8" r="3.4"/><circle cx="618.1" cy="406.8" r="3.4"/><circle cx="635.0" cy="406.8" r="3.4"/><circle cx="668.8" cy="406.8" r="3.4"/><circle cx="685.7" cy="406.8" r="3.4"/><circle cx="719.6" cy="406.8" r="3.4"/><circle cx="736.5" cy="406.8" r="3.4"/><circle cx="770.3" cy="406.8" r="3.4"/><circle cx="787.2" cy="406.8" r="3.4"/><circle cx="821.0" cy="406.8" r="3.4"/><circle cx="837.9" cy="406.8" r="3.4"/><circle cx="871.8" cy="406.8" r="3.4"/><circle cx="888.7" cy="406.8" r="3.4"/><circle cx="922.5" cy="406.8" r="3.4"/><circle cx="939.4" cy="406.8" r="3.4"/><circle cx="973.2" cy="406.8" r="3.4"/><circle cx="990.1" cy="406.8" r="3.4"/><circle cx="1024.0" cy="406.8" r="3.4"/><circle cx="1040.9" cy="406.8" r="3.4"/><circle cx="1074.7" cy="406.8" r="3.4"/><circle cx="1091.6" cy="406.8" r="3.4"/><circle cx="1125.4" cy="406.8" r="3.4"/><circle cx="1142.3" cy="406.8" r="3.4"/><circle cx="508.2" cy="421.5" r="3.4"/><circle cx="542.0" cy="421.5" r="3.4"/><circle cx="558.9" cy="421.5" r="3.4"/><circle cx="592.7" cy="421.5" r="3.4"/><circle cx="609.7" cy="421.5" r="3.4"/><circle cx="643.5" cy="421.5" r="3.4"/><circle cx="660.4" cy="421.5" r="3.4"/><circle cx="694.2" cy="421.5" r="3.4"/><circle cx="711.1" cy="421.5" r="3.4"/><circle cx="744.9" cy="421.5" r="3.4"/><circle cx="761.8" cy="421.5" r="3.4"/><circle cx="795.7" cy="421.5" r="3.4"/><circle cx="812.6" cy="421.5" r="3.4"/><circle cx="846.4" cy="421.5" r="3.4"/><circle cx="863.3" cy="421.5" r="3.4"/><circle cx="897.1" cy="421.5" r="3.4"/><circle cx="914.0" cy="421.5" r="3.4"/><circle cx="947.9" cy="421.5" r="3.4"/><circle cx="964.8" cy="421.5" r="3.4"/><circle cx="998.6" cy="421.5" r="3.4"/><circle cx="1015.5" cy="421.5" r="3.4"/><circle cx="1049.3" cy="421.5" r="3.4"/><circle cx="1066.2" cy="421.5" r="3.4"/><circle cx="1100.0" cy="421.5" r="3.4"/><circle cx="1117.0" cy="421.5" r="3.4"/><circle cx="1150.8" cy="421.5" r="3.4"/><circle cx="516.6" cy="436.1" r="3.4"/><circle cx="533.6" cy="436.1" r="3.4"/><circle cx="567.4" cy="436.1" r="3.4"/><circle cx="584.3" cy="436.1" r="3.4"/><circle cx="618.1" cy="436.1" r="3.4"/><circle cx="635.0" cy="436.1" r="3.4"/><circle cx="668.8" cy="436.1" r="3.4"/><circle cx="685.7" cy="436.1" r="3.4"/><circle cx="719.6" cy="436.1" r="3.4"/><circle cx="736.5" cy="436.1" r="3.4"/><circle cx="770.3" cy="436.1" r="3.4"/><circle cx="787.2" cy="436.1" r="3.4"/><circle cx="821.0" cy="436.1" r="3.4"/><circle cx="837.9" cy="436.1" r="3.4"/><circle cx="871.8" cy="436.1" r="3.4"/><circle cx="888.7" cy="436.1" r="3.4"/><circle cx="922.5" cy="436.1" r="3.4"/><circle cx="939.4" cy="436.1" r="3.4"/><circle cx="973.2" cy="436.1" r="3.4"/><circle cx="990.1" cy="436.1" r="3.4"/><circle cx="1024.0" cy="436.1" r="3.4"/><circle cx="1040.9" cy="436.1" r="3.4"/><circle cx="1074.7" cy="436.1" r="3.4"/><circle cx="1091.6" cy="436.1" r="3.4"/><circle cx="1125.4" cy="436.1" r="3.4"/><circle cx="1142.3" cy="436.1" r="3.4"/><circle cx="508.2" cy="450.8" r="3.4"/><circle cx="542.0" cy="450.8" r="3.4"/><circle cx="558.9" cy="450.8" r="3.4"/><circle cx="592.7" cy="450.8" r="3.4"/><circle cx="609.7" cy="450.8" r="3.4"/><circle cx="643.5" cy="450.8" r="3.4"/><circle cx="660.4" cy="450.8" r="3.4"/><circle cx="694.2" cy="450.8" r="3.4"/><circle cx="711.1" cy="450.8" r="3.4"/><circle cx="744.9" cy="450.8" r="3.4"/><circle cx="761.8" cy="450.8" r="3.4"/><circle cx="795.7" cy="450.8" r="3.4"/><circle cx="812.6" cy="450.8" r="3.4"/><circle cx="846.4" cy="450.8" r="3.4"/><circle cx="863.3" cy="450.8" r="3.4"/><circle cx="897.1" cy="450.8" r="3.4"/><circle cx="914.0" cy="450.8" r="3.4"/><circle cx="947.9" cy="450.8" r="3.4"/><circle cx="964.8" cy="450.8" r="3.4"/><circle cx="998.6" cy="450.8" r="3.4"/><circle cx="1015.5" cy="450.8" r="3.4"/><circle cx="1049.3" cy="450.8" r="3.4"/><circle cx="1066.2" cy="450.8" r="3.4"/><circle cx="1100.0" cy="450.8" r="3.4"/><circle cx="1117.0" cy="450.8" r="3.4"/><circle cx="1150.8" cy="450.8" r="3.4"/><circle cx="516.6" cy="465.4" r="3.4"/><circle cx="533.6" cy="465.4" r="3.4"/><circle cx="567.4" cy="465.4" r="3.4"/><circle cx="584.3" cy="465.4" r="3.4"/><circle cx="618.1" cy="465.4" r="3.4"/><circle cx="635.0" cy="465.4" r="3.4"/><circle cx="668.8" cy="465.4" r="3.4"/><circle cx="685.7" cy="465.4" r="3.4"/><circle cx="719.6" cy="465.4" r="3.4"/><circle cx="736.5" cy="465.4" r="3.4"/><circle cx="770.3" cy="465.4" r="3.4"/><circle cx="787.2" cy="465.4" r="3.4"/><circle cx="821.0" cy="465.4" r="3.4"/><circle cx="837.9" cy="465.4" r="3.4"/><circle cx="871.8" cy="465.4" r="3.4"/><circle cx="888.7" cy="465.4" r="3.4"/><circle cx="922.5" cy="465.4" r="3.4"/><circle cx="939.4" cy="465.4" r="3.4"/><circle cx="973.2" cy="465.4" r="3.4"/><circle cx="990.1" cy="465.4" r="3.4"/><circle cx="1024.0" cy="465.4" r="3.4"/><circle cx="1040.9" cy="465.4" r="3.4"/><circle cx="1074.7" cy="465.4" r="3.4"/><circle cx="1091.6" cy="465.4" r="3.4"/><circle cx="1125.4" cy="465.4" r="3.4"/><circle cx="1142.3" cy="465.4" r="3.4"/><circle cx="508.2" cy="480.1" r="3.4"/><circle cx="542.0" cy="480.1" r="3.4"/><circle cx="558.9" cy="480.1" r="3.4"/><circle cx="592.7" cy="480.1" r="3.4"/><circle cx="609.7" cy="480.1" r="3.4"/><circle cx="643.5" cy="480.1" r="3.4"/><circle cx="660.4" cy="480.1" r="3.4"/><circle cx="694.2" cy="480.1" r="3.4"/><circle cx="711.1" cy="480.1" r="3.4"/><circle cx="744.9" cy="480.1" r="3.4"/><circle cx="761.8" cy="480.1" r="3.4"/><circle cx="795.7" cy="480.1" r="3.4"/><circle cx="812.6" cy="480.1" r="3.4"/><circle cx="846.4" cy="480.1" r="3.4"/><circle cx="863.3" cy="480.1" r="3.4"/><circle cx="897.1" cy="480.1" r="3.4"/><circle cx="914.0" cy="480.1" r="3.4"/><circle cx="947.9" cy="480.1" r="3.4"/><circle cx="964.8" cy="480.1" r="3.4"/><circle cx="998.6" cy="480.1" r="3.4"/><circle cx="1015.5" cy="480.1" r="3.4"/><circle cx="1049.3" cy="480.1" r="3.4"/><circle cx="1066.2" cy="480.1" r="3.4"/><circle cx="1100.0" cy="480.1" r="3.4"/><circle cx="1117.0" cy="480.1" r="3.4"/><circle cx="1150.8" cy="480.1" r="3.4"/><circle cx="516.6" cy="494.7" r="3.4"/><circle cx="533.6" cy="494.7" r="3.4"/><circle cx="567.4" cy="494.7" r="3.4"/><circle cx="584.3" cy="494.7" r="3.4"/><circle cx="618.1" cy="494.7" r="3.4"/><circle cx="635.0" cy="494.7" r="3.4"/><circle cx="668.8" cy="494.7" r="3.4"/><circle cx="685.7" cy="494.7" r="3.4"/><circle cx="719.6" cy="494.7" r="3.4"/><circle cx="736.5" cy="494.7" r="3.4"/><circle cx="770.3" cy="494.7" r="3.4"/><circle cx="787.2" cy="494.7" r="3.4"/><circle cx="821.0" cy="494.7" r="3.4"/><circle cx="837.9" cy="494.7" r="3.4"/><circle cx="871.8" cy="494.7" r="3.4"/><circle cx="888.7" cy="494.7" r="3.4"/><circle cx="922.5" cy="494.7" r="3.4"/><circle cx="939.4" cy="494.7" r="3.4"/><circle cx="973.2" cy="494.7" r="3.4"/><circle cx="990.1" cy="494.7" r="3.4"/><circle cx="1024.0" cy="494.7" r="3.4"/><circle cx="1040.9" cy="494.7" r="3.4"/><circle cx="1074.7" cy="494.7" r="3.4"/><circle cx="1091.6" cy="494.7" r="3.4"/><circle cx="1125.4" cy="494.7" r="3.4"/><circle cx="1142.3" cy="494.7" r="3.4"/><circle cx="508.2" cy="509.4" r="3.4"/><circle cx="542.0" cy="509.4" r="3.4"/><circle cx="558.9" cy="509.4" r="3.4"/><circle cx="592.7" cy="509.4" r="3.4"/><circle cx="609.7" cy="509.4" r="3.4"/><circle cx="643.5" cy="509.4" r="3.4"/><circle cx="660.4" cy="509.4" r="3.4"/><circle cx="694.2" cy="509.4" r="3.4"/><circle cx="711.1" cy="509.4" r="3.4"/><circle cx="744.9" cy="509.4" r="3.4"/><circle cx="761.8" cy="509.4" r="3.4"/><circle cx="795.7" cy="509.4" r="3.4"/><circle cx="812.6" cy="509.4" r="3.4"/><circle cx="846.4" cy="509.4" r="3.4"/><circle cx="863.3" cy="509.4" r="3.4"/><circle cx="897.1" cy="509.4" r="3.4"/><circle cx="914.0" cy="509.4" r="3.4"/><circle cx="947.9" cy="509.4" r="3.4"/><circle cx="964.8" cy="509.4" r="3.4"/><circle cx="998.6" cy="509.4" r="3.4"/><circle cx="1015.5" cy="509.4" r="3.4"/><circle cx="1049.3" cy="509.4" r="3.4"/><circle cx="1066.2" cy="509.4" r="3.4"/><circle cx="1100.0" cy="509.4" r="3.4"/><circle cx="1117.0" cy="509.4" r="3.4"/><circle cx="1150.8" cy="509.4" r="3.4"/><circle cx="516.6" cy="524.0" r="3.4"/><circle cx="533.6" cy="524.0" r="3.4"/><circle cx="567.4" cy="524.0" r="3.4"/><circle cx="584.3" cy="524.0" r="3.4"/><circle cx="618.1" cy="524.0" r="3.4"/><circle cx="635.0" cy="524.0" r="3.4"/><circle cx="668.8" cy="524.0" r="3.4"/><circle cx="685.7" cy="524.0" r="3.4"/><circle cx="719.6" cy="524.0" r="3.4"/><circle cx="736.5" cy="524.0" r="3.4"/><circle cx="770.3" cy="524.0" r="3.4"/><circle cx="787.2" cy="524.0" r="3.4"/><circle cx="821.0" cy="524.0" r="3.4"/><circle cx="837.9" cy="524.0" r="3.4"/><circle cx="871.8" cy="524.0" r="3.4"/><circle cx="888.7" cy="524.0" r="3.4"/><circle cx="922.5" cy="524.0" r="3.4"/><circle cx="939.4" cy="524.0" r="3.4"/><circle cx="973.2" cy="524.0" r="3.4"/><circle cx="990.1" cy="524.0" r="3.4"/><circle cx="1024.0" cy="524.0" r="3.4"/><circle cx="1040.9" cy="524.0" r="3.4"/><circle cx="1074.7" cy="524.0" r="3.4"/><circle cx="1091.6" cy="524.0" r="3.4"/><circle cx="1125.4" cy="524.0" r="3.4"/><circle cx="1142.3" cy="524.0" r="3.4"/><circle cx="508.2" cy="538.7" r="3.4"/><circle cx="542.0" cy="538.7" r="3.4"/><circle cx="558.9" cy="538.7" r="3.4"/><circle cx="592.7" cy="538.7" r="3.4"/><circle cx="609.7" cy="538.7" r="3.4"/><circle cx="643.5" cy="538.7" r="3.4"/><circle cx="660.4" cy="538.7" r="3.4"/><circle cx="694.2" cy="538.7" r="3.4"/><circle cx="711.1" cy="538.7" r="3.4"/><circle cx="744.9" cy="538.7" r="3.4"/><circle cx="761.8" cy="538.7" r="3.4"/><circle cx="795.7" cy="538.7" r="3.4"/><circle cx="812.6" cy="538.7" r="3.4"/><circle cx="846.4" cy="538.7" r="3.4"/><circle cx="863.3" cy="538.7" r="3.4"/><circle cx="897.1" cy="538.7" r="3.4"/><circle cx="914.0" cy="538.7" r="3.4"/><circle cx="947.9" cy="538.7" r="3.4"/><circle cx="964.8" cy="538.7" r="3.4"/><circle cx="998.6" cy="538.7" r="3.4"/><circle cx="1015.5" cy="538.7" r="3.4"/><circle cx="1049.3" cy="538.7" r="3.4"/><circle cx="1066.2" cy="538.7" r="3.4"/><circle cx="1100.0" cy="538.7" r="3.4"/><circle cx="1117.0" cy="538.7" r="3.4"/><circle cx="1150.8" cy="538.7" r="3.4"/><circle cx="516.6" cy="553.3" r="3.4"/><circle cx="533.6" cy="553.3" r="3.4"/><circle cx="567.4" cy="553.3" r="3.4"/><circle cx="584.3" cy="553.3" r="3.4"/><circle cx="618.1" cy="553.3" r="3.4"/><circle cx="635.0" cy="553.3" r="3.4"/><circle cx="668.8" cy="553.3" r="3.4"/><circle cx="685.7" cy="553.3" r="3.4"/><circle cx="719.6" cy="553.3" r="3.4"/><circle cx="736.5" cy="553.3" r="3.4"/><circle cx="770.3" cy="553.3" r="3.4"/><circle cx="787.2" cy="553.3" r="3.4"/><circle cx="821.0" cy="553.3" r="3.4"/><circle cx="837.9" cy="553.3" r="3.4"/><circle cx="871.8" cy="553.3" r="3.4"/><circle cx="888.7" cy="553.3" r="3.4"/><circle cx="922.5" cy="553.3" r="3.4"/><circle cx="939.4" cy="553.3" r="3.4"/><circle cx="973.2" cy="553.3" r="3.4"/><circle cx="990.1" cy="553.3" r="3.4"/><circle cx="1024.0" cy="553.3" r="3.4"/><circle cx="1040.9" cy="553.3" r="3.4"/><circle cx="1074.7" cy="553.3" r="3.4"/><circle cx="1091.6" cy="553.3" r="3.4"/><circle cx="1125.4" cy="553.3" r="3.4"/><circle cx="1142.3" cy="553.3" r="3.4"/><circle cx="508.2" cy="568.0" r="3.4"/><circle cx="542.0" cy="568.0" r="3.4"/><circle cx="558.9" cy="568.0" r="3.4"/><circle cx="592.7" cy="568.0" r="3.4"/><circle cx="609.7" cy="568.0" r="3.4"/><circle cx="643.5" cy="568.0" r="3.4"/><circle cx="660.4" cy="568.0" r="3.4"/><circle cx="694.2" cy="568.0" r="3.4"/><circle cx="711.1" cy="568.0" r="3.4"/><circle cx="744.9" cy="568.0" r="3.4"/><circle cx="761.8" cy="568.0" r="3.4"/><circle cx="795.7" cy="568.0" r="3.4"/><circle cx="812.6" cy="568.0" r="3.4"/><circle cx="846.4" cy="568.0" r="3.4"/><circle cx="863.3" cy="568.0" r="3.4"/><circle cx="897.1" cy="568.0" r="3.4"/><circle cx="914.0" cy="568.0" r="3.4"/><circle cx="947.9" cy="568.0" r="3.4"/><circle cx="964.8" cy="568.0" r="3.4"/><circle cx="998.6" cy="568.0" r="3.4"/><circle cx="1015.5" cy="568.0" r="3.4"/><circle cx="1049.3" cy="568.0" r="3.4"/><circle cx="1066.2" cy="568.0" r="3.4"/><circle cx="1100.0" cy="568.0" r="3.4"/><circle cx="1117.0" cy="568.0" r="3.4"/><circle cx="1150.8" cy="568.0" r="3.4"/><circle cx="516.6" cy="582.6" r="3.4"/><circle cx="533.6" cy="582.6" r="3.4"/><circle cx="567.4" cy="582.6" r="3.4"/><circle cx="584.3" cy="582.6" r="3.4"/><circle cx="618.1" cy="582.6" r="3.4"/><circle cx="635.0" cy="582.6" r="3.4"/><circle cx="668.8" cy="582.6" r="3.4"/><circle cx="685.7" cy="582.6" r="3.4"/><circle cx="719.6" cy="582.6" r="3.4"/><circle cx="736.5" cy="582.6" r="3.4"/><circle cx="770.3" cy="582.6" r="3.4"/><circle cx="787.2" cy="582.6" r="3.4"/><circle cx="821.0" cy="582.6" r="3.4"/><circle cx="837.9" cy="582.6" r="3.4"/><circle cx="871.8" cy="582.6" r="3.4"/><circle cx="888.7" cy="582.6" r="3.4"/><circle cx="922.5" cy="582.6" r="3.4"/><circle cx="939.4" cy="582.6" r="3.4"/><circle cx="973.2" cy="582.6" r="3.4"/><circle cx="990.1" cy="582.6" r="3.4"/><circle cx="1024.0" cy="582.6" r="3.4"/><circle cx="1040.9" cy="582.6" r="3.4"/><circle cx="1074.7" cy="582.6" r="3.4"/><circle cx="1091.6" cy="582.6" r="3.4"/><circle cx="1125.4" cy="582.6" r="3.4"/><circle cx="1142.3" cy="582.6" r="3.4"/><circle cx="508.2" cy="597.2" r="3.4"/><circle cx="542.0" cy="597.2" r="3.4"/><circle cx="558.9" cy="597.2" r="3.4"/><circle cx="592.7" cy="597.2" r="3.4"/><circle cx="609.7" cy="597.2" r="3.4"/><circle cx="643.5" cy="597.2" r="3.4"/><circle cx="660.4" cy="597.2" r="3.4"/><circle cx="694.2" cy="597.2" r="3.4"/><circle cx="711.1" cy="597.2" r="3.4"/><circle cx="744.9" cy="597.2" r="3.4"/><circle cx="761.8" cy="597.2" r="3.4"/><circle cx="795.7" cy="597.2" r="3.4"/><circle cx="812.6" cy="597.2" r="3.4"/><circle cx="846.4" cy="597.2" r="3.4"/><circle cx="863.3" cy="597.2" r="3.4"/><circle cx="897.1" cy="597.2" r="3.4"/><circle cx="914.0" cy="597.2" r="3.4"/><circle cx="947.9" cy="597.2" r="3.4"/><circle cx="964.8" cy="597.2" r="3.4"/><circle cx="998.6" cy="597.2" r="3.4"/><circle cx="1015.5" cy="597.2" r="3.4"/><circle cx="1049.3" cy="597.2" r="3.4"/><circle cx="1066.2" cy="597.2" r="3.4"/><circle cx="1100.0" cy="597.2" r="3.4"/><circle cx="1117.0" cy="597.2" r="3.4"/><circle cx="1150.8" cy="597.2" r="3.4"/><circle cx="516.6" cy="611.9" r="3.4"/><circle cx="533.6" cy="611.9" r="3.4"/><circle cx="567.4" cy="611.9" r="3.4"/><circle cx="584.3" cy="611.9" r="3.4"/><circle cx="618.1" cy="611.9" r="3.4"/><circle cx="635.0" cy="611.9" r="3.4"/><circle cx="668.8" cy="611.9" r="3.4"/><circle cx="685.7" cy="611.9" r="3.4"/><circle cx="719.6" cy="611.9" r="3.4"/><circle cx="736.5" cy="611.9" r="3.4"/><circle cx="770.3" cy="611.9" r="3.4"/><circle cx="787.2" cy="611.9" r="3.4"/><circle cx="821.0" cy="611.9" r="3.4"/><circle cx="837.9" cy="611.9" r="3.4"/><circle cx="871.8" cy="611.9" r="3.4"/><circle cx="888.7" cy="611.9" r="3.4"/><circle cx="922.5" cy="611.9" r="3.4"/><circle cx="939.4" cy="611.9" r="3.4"/><circle cx="973.2" cy="611.9" r="3.4"/><circle cx="990.1" cy="611.9" r="3.4"/><circle cx="1024.0" cy="611.9" r="3.4"/><circle cx="1040.9" cy="611.9" r="3.4"/><circle cx="1074.7" cy="611.9" r="3.4"/><circle cx="1091.6" cy="611.9" r="3.4"/><circle cx="1125.4" cy="611.9" r="3.4"/><circle cx="1142.3" cy="611.9" r="3.4"/></g></svg>
<div class="b" style="left:299px;top:184px;width:534px;height:32px;background:#314054;border-radius:4px;"></div>
<div class="b" style="left:979px;top:184px;width:400px;height:32px;background:#314054;border-radius:4px;"></div>
<div class="b" style="left:299px;top:383px;width:32px;height:96px;background:#314054;border-radius:4px;"></div>
<div class="b" style="left:592px;top:645px;width:495px;height:32px;background:#314054;border-radius:4px;"></div>
<div class="t" style="left:304.20px;top:190.50px;font-size:11.81px;color:#f2f4f7;line-height:20px;">Selection filter</div>
<div class="b" style="left:385px;top:189px;width:212px;height:22px;background:#fff;"></div>
<div class="t" style="left:408.80px;top:190.50px;font-size:12.10px;color:#000;line-height:20px;">Atoms and bonds</div>
<div class="t" style="left:985.00px;top:190.50px;font-size:11.44px;color:#f2f4f7;line-height:20px;">Quick access</div>
<svg class="i" style="left:0;top:0" width="1381" height="700" viewBox="0 0 1381 700"><defs><radialGradient id="sp2" cx="0.4" cy="0.35" r="0.7"><stop offset="0" stop-color="#f8fbff"/><stop offset="0.55" stop-color="#b4d0ee"/><stop offset="1" stop-color="#6f93bd"/></radialGradient><radialGradient id="spg" cx="0.4" cy="0.35" r="0.7"><stop offset="0" stop-color="#e8e8e8"/><stop offset="0.55" stop-color="#9aa4b0"/><stop offset="1" stop-color="#5c6876"/></radialGradient><linearGradient id="vbg" x1="0" y1="0" x2="0" y2="1"><stop offset="0" stop-color="#5a728f"/><stop offset="1" stop-color="#8eaccd"/></linearGradient></defs><circle cx="394" cy="198" r="4.6" fill="url(#spg)" stroke="#5c6876" stroke-width="0.6"/><circle cx="399.500" cy="203.500" r="3.2" fill="url(#sp2)" stroke="#5c6876" stroke-width="0.6"/><path d="M396 200 L399 203" stroke="#7a8796" stroke-width="1.6"/><path d="M572.500 196 L585 196 L578.700 206 Z" fill="#4574ad"/><path d="M614.5 187.8 H606.3 V194.36 M621.5 187.8 H629.7 V194.36 M614.5 211.8 H606.3 V205.24 M621.5 211.8 H629.7 V205.24" fill="none" stroke="#9fc3ee" stroke-width="1.2"/><circle cx="614.1" cy="195.4" r="4.2" fill="url(#sp2)" stroke="#3d5878" stroke-width="0.8"/><circle cx="622.3" cy="199.6" r="4.2" fill="url(#sp2)" stroke="#3d5878" stroke-width="0.8"/><circle cx="614.4" cy="204.6" r="4.2" fill="url(#sp2)" stroke="#3d5878" stroke-width="0.8"/><path d="M649.4 187.8 H639.8 V195.48000000000002 M653.6 187.8 H663.2 V195.48000000000002 M649.4 211.8 H639.8 V204.12 M653.6 211.8 H663.2 V204.12" fill="none" stroke="#5b6a80" stroke-width="1.2"/><path d="M647 196 L656 205 M656 196 L647 205" stroke="#62718a" stroke-width="2.6"/><path d="M682.4 187.8 H672.8 V195.48000000000002 M686.6 187.8 H696.2 V195.48000000000002 M682.4 211.8 H672.8 V204.12 M686.6 211.8 H696.2 V204.12" fill="none" stroke="#5b6a80" stroke-width="1.2"/><path d="M684.500 194 L691 201 H687.500 V207 H681.500 V201 H678 Z" fill="#62718a"/><path d="M715.4 187.8 H705.8 V195.48000000000002 M719.6 187.8 H729.2 V195.48000000000002 M715.4 211.8 H705.8 V204.12 M719.6 211.8 H729.2 V204.12" fill="none" stroke="#5b6a80" stroke-width="1.2"/><path d="M712 197 L718 202 L723 195 M718 202 L716 208" stroke="#62718a" stroke-width="1.4" fill="none"/><circle cx="712" cy="197" r="2.2" fill="#62718a"/><circle cx="718" cy="202" r="2.2" fill="#62718a"/><circle cx="723" cy="195" r="2.2" fill="#62718a"/><circle cx="716" cy="208" r="2.2" fill="#62718a"/><path d="M748.4 187.8 H738.8 V195.48000000000002 M752.6 187.8 H762.2 V195.48000000000002 M748.4 211.8 H738.8 V204.12 M752.6 211.8 H762.2 V204.12" fill="none" stroke="#5b6a80" stroke-width="1.2"/><path d="M744 198.500 Q747 195.500 750.500 198 T757 197.500 M744 204.500 Q747 201.500 750.500 204 T757 203.500" stroke="#62718a" stroke-width="1.6" fill="none"/><path d="M781.4 187.8 H771.8 V195.48000000000002 M785.6 187.8 H795.2 V195.48000000000002 M781.4 211.8 H771.8 V204.12 M785.6 211.8 H795.2 V204.12" fill="none" stroke="#5b6a80" stroke-width="1.2"/><circle cx="781.50" cy="196.70" r="3.75" fill="#62718a"/><circle cx="784.88" cy="202.55" r="3.75" fill="#62718a"/><circle cx="778.12" cy="202.55" r="3.75" fill="#62718a"/><circle cx="781.50" cy="200.60" r="3.38" fill="#62718a"/><path d="M788 201 V209 M784 205 H792" stroke="#8f9db0" stroke-width="2.2"/><line x1="818.67" y1="202.57" x2="823.71" y2="207.61" stroke="#10151d" stroke-width="3.70" stroke-linecap="round"/><circle cx="814.3" cy="198.2" r="6.85" fill="#10151d"/><line x1="818.67" y1="202.57" x2="823.71" y2="207.61" stroke="#e8eaec" stroke-width="2.20" stroke-linecap="round"/><circle cx="814.3" cy="198.2" r="5.60" fill="#aecdf0" stroke="#eef0f2" stroke-width="1.3"/><circle cx="1075" cy="200.5" r="9.5" fill="none" stroke="#cfe0f4" stroke-width="1.1"/><path d="M1075 201.500 L1075.0 195.0" stroke="#cfe0f4" stroke-width="1.6"/><path d="M1075 201.500 L1080.6 204.8" stroke="#cfe0f4" stroke-width="1.6"/><path d="M1075 201.500 L1069.4 204.8" stroke="#cfe0f4" stroke-width="1.6"/><path d="M1068 207.500 Q1075 211 1082 207.500" stroke="#cfe0f4" stroke-width="1" fill="none"/><path d="M1100 205 L1107 196 L1098 193 M1107 196 L1114 191" stroke="#cfe0f4" stroke-width="1.4" fill="none"/><circle cx="1100.500" cy="205" r="4.4" fill="url(#sp2)"/><circle cx="1107" cy="196" r="3" fill="url(#sp2)"/><circle cx="1098" cy="192.500" r="2.2" fill="url(#sp2)"/><circle cx="1114" cy="191" r="2.2" fill="url(#sp2)"/><path d="M1113 199.500 V209.500 M1108 204.500 H1118" stroke="#fff" stroke-width="2.6"/><path d="M1136 192 L1131 207" stroke="#6f8198" stroke-width="4.4" stroke-linecap="round"/><path d="M1136 192.500 L1131.500 206" stroke="#b9d5f3" stroke-width="2.4" stroke-linecap="round"/><path d="M1146 192 L1141 207" stroke="#6f8198" stroke-width="4.4" stroke-linecap="round"/><path d="M1146 192.500 L1144 199" stroke="#5b6b80" stroke-width="2.4" stroke-linecap="round"/><path d="M1143.500 200 L1141.500 206" stroke="#9fb6d2" stroke-width="2.4" stroke-linecap="round"/><circle cx="1164.800" cy="205.300" r="5.2" fill="url(#sp2)"/><path d="M1256 199 Q1261 199 1264 205 Q1267 210.500 1270 205 Q1273 199 1278 199" stroke="#dfeaf7" stroke-width="1.4" fill="none"/><path d="M1262 190.500 Q1268 190.500 1267.500 198" stroke="#fff" stroke-width="1.8" fill="none"/><path d="M1264 197 L1267.500 202.500 L1271 197 Z" fill="#fff"/><circle cx="1299.30" cy="194.02" r="6.00" fill="#1a222e"/><circle cx="1304.70" cy="203.38" r="6.00" fill="#1a222e"/><circle cx="1293.90" cy="203.38" r="6.00" fill="#1a222e"/><circle cx="1299.30" cy="200.26" r="5.40" fill="#1a222e"/><circle cx="1299.30" cy="194.37" r="5.60" fill="#f1efc4"/><circle cx="1304.34" cy="203.11" r="5.60" fill="#f1efc4"/><circle cx="1294.26" cy="203.11" r="5.60" fill="#f1efc4"/><circle cx="1299.30" cy="200.20" r="5.04" fill="#f1efc4"/><circle cx="1299.30" cy="194.81" r="5.10" fill="#e4d93c"/><circle cx="1303.89" cy="202.77" r="5.10" fill="#e4d93c"/><circle cx="1294.71" cy="202.77" r="5.10" fill="#e4d93c"/><circle cx="1299.30" cy="200.12" r="4.59" fill="#e4d93c"/><path d="M1303.2 200.6 V209.79999999999998 M1298.6000000000001 205.2 H1307.8" stroke="#1a222e" stroke-width="4.6" stroke-linecap="square"/><path d="M1303.2 200.6 V209.79999999999998 M1298.6000000000001 205.2 H1307.8" stroke="#fff" stroke-width="2.6"/><circle cx="1327.00" cy="192.51" r="5.10" fill="#1a222e"/><circle cx="1331.59" cy="200.47" r="5.10" fill="#1a222e"/><circle cx="1322.41" cy="200.47" r="5.10" fill="#1a222e"/><circle cx="1327.00" cy="197.82" r="4.59" fill="#1a222e"/><circle cx="1327.00" cy="192.82" r="4.75" fill="#f1efc4"/><circle cx="1331.28" cy="200.23" r="4.75" fill="#f1efc4"/><circle cx="1322.72" cy="200.23" r="4.75" fill="#f1efc4"/><circle cx="1327.00" cy="197.76" r="4.28" fill="#f1efc4"/><circle cx="1327.00" cy="193.22" r="4.30" fill="#cfc432"/><circle cx="1330.87" cy="199.92" r="4.30" fill="#cfc432"/><circle cx="1323.13" cy="199.92" r="4.30" fill="#cfc432"/><circle cx="1327.00" cy="197.69" r="3.87" fill="#cfc432"/><circle cx="1329.50" cy="194.51" r="5.10" fill="#1a222e"/><circle cx="1334.09" cy="202.47" r="5.10" fill="#1a222e"/><circle cx="1324.91" cy="202.47" r="5.10" fill="#1a222e"/><circle cx="1329.50" cy="199.82" r="4.59" fill="#1a222e"/><circle cx="1329.50" cy="194.82" r="4.75" fill="#f1efc4"/><circle cx="1333.78" cy="202.23" r="4.75" fill="#f1efc4"/><circle cx="1325.22" cy="202.23" r="4.75" fill="#f1efc4"/><circle cx="1329.50" cy="199.76" r="4.28" fill="#f1efc4"/><circle cx="1329.50" cy="195.22" r="4.30" fill="#d9ce36"/><circle cx="1333.37" cy="201.92" r="4.30" fill="#d9ce36"/><circle cx="1325.63" cy="201.92" r="4.30" fill="#d9ce36"/><circle cx="1329.50" cy="199.69" r="3.87" fill="#d9ce36"/><circle cx="1332.00" cy="196.51" r="5.10" fill="#1a222e"/><circle cx="1336.59" cy="204.47" r="5.10" fill="#1a222e"/><circle cx="1327.41" cy="204.47" r="5.10" fill="#1a222e"/><circle cx="1332.00" cy="201.82" r="4.59" fill="#1a222e"/><circle cx="1332.00" cy="196.82" r="4.75" fill="#f1efc4"/><circle cx="1336.28" cy="204.23" r="4.75" fill="#f1efc4"/><circle cx="1327.72" cy="204.23" r="4.75" fill="#f1efc4"/><circle cx="1332.00" cy="201.76" r="4.28" fill="#f1efc4"/><circle cx="1332.00" cy="197.22" r="4.30" fill="#e4d93c"/><circle cx="1335.87" cy="203.92" r="4.30" fill="#e4d93c"/><circle cx="1328.13" cy="203.92" r="4.30" fill="#e4d93c"/><circle cx="1332.00" cy="201.69" r="3.87" fill="#e4d93c"/><path d="M1337.3 201.8 V211.0 M1332.7 206.4 H1341.8999999999999" stroke="#1a222e" stroke-width="4.6" stroke-linecap="square"/><path d="M1337.3 201.8 V211.0 M1332.7 206.4 H1341.8999999999999" stroke="#fff" stroke-width="2.6"/><path d="M1366.50 201.75 L1366.50 204.25 L1364.29 204.17 L1363.76 205.64 L1365.50 206.99 L1363.90 208.90 L1362.26 207.43 L1360.90 208.21 L1361.37 210.37 L1358.91 210.80 L1358.60 208.61 L1357.06 208.34 L1356.03 210.29 L1353.87 209.04 L1355.04 207.17 L1354.04 205.98 L1351.99 206.81 L1351.14 204.46 L1353.24 203.78 L1353.24 202.22 L1351.14 201.54 L1351.99 199.19 L1354.04 200.02 L1355.04 198.83 L1353.87 196.96 L1356.03 195.71 L1357.06 197.66 L1358.60 197.39 L1358.91 195.20 L1361.37 195.63 L1360.90 197.79 L1362.26 198.57 L1363.90 197.10 L1365.50 199.01 L1363.76 200.36 L1364.29 201.83 Z" fill="#eef1f5" stroke-linejoin="round"/><circle cx="1358.800" cy="203" r="3.900" fill="#7da3d2"/><circle cx="1358.800" cy="203" r="2.500" fill="#1e2a3a"/><path d="M1373.93 193.60 L1373.93 195.40 L1372.34 195.34 L1371.96 196.39 L1373.21 197.37 L1372.06 198.74 L1370.88 197.68 L1369.91 198.24 L1370.24 199.79 L1368.48 200.10 L1368.26 198.53 L1367.15 198.33 L1366.41 199.74 L1364.86 198.84 L1365.70 197.50 L1364.98 196.64 L1363.51 197.23 L1362.90 195.55 L1364.41 195.06 L1364.41 193.94 L1362.90 193.45 L1363.51 191.77 L1364.98 192.36 L1365.70 191.50 L1364.86 190.16 L1366.41 189.26 L1367.15 190.67 L1368.26 190.47 L1368.48 188.90 L1370.24 189.21 L1369.91 190.76 L1370.88 191.32 L1372.06 190.26 L1373.21 191.63 L1371.96 192.61 L1372.34 193.66 Z" fill="#eef1f5" stroke-linejoin="round"/><circle cx="1368.400" cy="194.500" r="2.800" fill="#7da3d2"/><circle cx="1368.400" cy="194.500" r="1.700" fill="#1e2a3a"/><path d="M1366.9 200.6 V209.79999999999998 M1362.3000000000002 205.2 H1371.5" stroke="#1a222e" stroke-width="4.6" stroke-linecap="square"/><path d="M1366.9 200.6 V209.79999999999998 M1362.3000000000002 205.2 H1371.5" stroke="#fff" stroke-width="2.6"/><path d="M303.500 403 V409 H326.500 V403" fill="none" stroke="#e8eef6" stroke-width="1.8"/><path d="M315 398.500 V404" stroke="#e8eef6" stroke-width="3"/><path d="M310.500 402.500 L315 407.500 L319.500 402.500 Z" fill="#e8eef6"/><path d="M305.00 433.00 C305.00 431.00 306.50 428.50 308.00 427.00 C309.50 425.50 311.83 424.50 314.00 424.00 C316.17 423.50 319.00 423.33 321.00 424.00 C323.00 424.67 325.17 426.17 326.00 428.00 C326.83 429.83 326.17 433.00 326.00 435.00 C325.83 437.00 326.17 439.00 325.00 440.00 C323.83 441.00 321.00 440.50 319.00 441.00 C317.00 441.50 314.83 443.33 313.00 443.00 C311.17 442.67 309.33 440.67 308.00 439.00 C306.67 437.33 305.00 435.00 305.00 433.00 Z" fill="#35d08b" stroke="#10151d" stroke-width="0.8" stroke-linejoin="round"/><rect x="309" y="420" width="5" height="3.500" rx="1" fill="#f2a468" transform="rotate(-35 311 422)"/><ellipse cx="304.500" cy="427.500" rx="1.600" ry="2.600" fill="#ee8fb4" transform="rotate(-20 304.500 427.500)"/><ellipse cx="321.500" cy="421" rx="2.400" ry="1.300" fill="#8fc4f2" transform="rotate(20 321.500 421)"/><path d="M313 426 L317 425 L318 430 L314.500 431 Z" fill="#e8c860"/><path d="M317 465 L325.500 476" stroke="#a9cdf2" stroke-width="3"/><path d="M316.500 464.500 L319 467.500" stroke="#fff" stroke-width="3"/><path d="M314 467.5 Q314 471.5 318 471.5 Q314 471.5 314 475.5 Q314 471.5 310 471.5 Q314 471.5 314 467.5 Z" fill="#f4d23c" stroke="#f4d23c" stroke-width="0.8"/><path d="M308.5 472.2 Q308.5 474.5 310.8 474.5 Q308.5 474.5 308.5 476.8 Q308.5 474.5 306.2 474.5 Q308.5 474.5 308.5 472.2 Z" fill="#f4d23c" stroke="#f4d23c" stroke-width="0.8"/><path d="M310 464.2 Q310 466.5 312.3 466.5 Q310 466.5 310 468.8 Q310 466.5 307.7 466.5 Q310 466.5 310 464.2 Z" fill="#f4d23c" stroke="#f4d23c" stroke-width="0.8"/><path d="M324 463.7 Q324 466 326.3 466 Q324 466 324 468.3 Q324 466 321.7 466 Q324 466 324 463.7 Z" fill="#f4d23c" stroke="#f4d23c" stroke-width="0.8"/><rect x="596.800" y="649.400" width="23" height="23" fill="#2c3a4e" stroke="#8fb8e8" stroke-width="1"/><line x1="611.10" y1="664.20" x2="616.53" y2="669.63" stroke="#10151d" stroke-width="3.70" stroke-linecap="round"/><circle cx="606.5" cy="659.6" r="7.15" fill="#10151d"/><line x1="611.10" y1="664.20" x2="616.53" y2="669.63" stroke="#e8eaec" stroke-width="2.20" stroke-linecap="round"/><circle cx="606.5" cy="659.6" r="5.90" fill="#aecdf0" stroke="#eef0f2" stroke-width="1.3"/><path d="M638.3 649.0 H629 V656.44 M643.7 649.0 H653 V656.44 M638.3 672.5999999999999 H629 V665.1599999999999 M643.7 672.5999999999999 H653 V665.1599999999999" fill="none" stroke="#8fb8e8" stroke-width="1.2"/><line x1="644.20" y1="664.20" x2="649.63" y2="669.63" stroke="#10151d" stroke-width="3.70" stroke-linecap="round"/><circle cx="639.6" cy="659.6" r="7.15" fill="#10151d"/><line x1="644.20" y1="664.20" x2="649.63" y2="669.63" stroke="#e8eaec" stroke-width="2.20" stroke-linecap="round"/><circle cx="639.6" cy="659.6" r="5.90" fill="#aecdf0" stroke="#eef0f2" stroke-width="1.3"/><line x1="677.12" y1="664.32" x2="682.46" y2="669.66" stroke="#10151d" stroke-width="3.70" stroke-linecap="round"/><circle cx="672.6" cy="659.8" r="7.05" fill="#10151d"/><line x1="677.12" y1="664.32" x2="682.46" y2="669.66" stroke="#e8eaec" stroke-width="2.20" stroke-linecap="round"/><circle cx="672.6" cy="659.8" r="5.80" fill="#aecdf0" stroke="#eef0f2" stroke-width="1.3"/><path d="M672.600 656.300 V663.300 M669.100 659.800 H676.100" stroke="#6f86a4" stroke-width="3.200"/><path d="M672.600 656.300 V663.300 M669.100 659.800 H676.100" stroke="#fff" stroke-width="2"/><line x1="710.12" y1="664.32" x2="715.46" y2="669.66" stroke="#10151d" stroke-width="3.70" stroke-linecap="round"/><circle cx="705.6" cy="659.8" r="7.05" fill="#10151d"/><line x1="710.12" y1="664.32" x2="715.46" y2="669.66" stroke="#e8eaec" stroke-width="2.20" stroke-linecap="round"/><circle cx="705.6" cy="659.8" r="5.80" fill="#aecdf0" stroke="#eef0f2" stroke-width="1.3"/><path d="M702.100 659.800 H709.100" stroke="#6f86a4" stroke-width="3.200"/><path d="M702.100 659.800 H709.100" stroke="#fff" stroke-width="2"/><rect x="729.500" y="650.500" width="21" height="21" rx="2" fill="url(#vbg)" stroke="#4a5d78" stroke-width="0.8"/><path d="M773 649.500 L784 655 V667 L773 673 L762 667 V655 Z" fill="#3f7cc2" stroke="#27528a" stroke-width="0.8"/><path d="M773 649.500 L784 655 L773 660.500 L762 655 Z" fill="#5f9de0"/><path d="M773 660.500 V673" stroke="#2a5a98" stroke-width="0.8"/><path d="M762 668 L759.500 670" stroke="#e8603a" stroke-width="1.6"/><path d="M784 668 L786.500 670" stroke="#35d08b" stroke-width="1.6"/><path d="M798 651.500 H814 L817 671 H795 Z" fill="#8fa6c1" stroke="#6f86a2" stroke-width="0.8"/><path d="M806 651.500 V671" stroke="#6fb39a" stroke-width="0.8"/><path d="M796.500 660 H815.500" stroke="#c9a27a" stroke-width="0.8"/><rect x="869.72" y="650.40" width="3.57" height="2.46" rx="0.53" fill="#a6caf0" stroke="#10151d" stroke-width="1.0"/><rect x="866.25" y="651.55" width="10.50" height="7.04" rx="1.26" fill="#a6caf0" stroke="#10151d" stroke-width="1.0"/><circle cx="871.50" cy="655.21" r="1.90" fill="#ffffff" stroke="#10151d" stroke-width="1.05"/><ellipse cx="871.5" cy="665.5" rx="9.5" ry="3.8" fill="none" stroke="#10151d" stroke-width="3.4000000000000004"/><ellipse cx="871.5" cy="665.5" rx="9.5" ry="3.8" fill="none" stroke="#fff" stroke-width="1.6"/><path d="M862.0 665.5 A9.5 3.8 0 0 0 881.0 665.5" fill="none" stroke="#10151d" stroke-width="3.4000000000000004"/><path d="M862.0 665.5 A9.5 3.8 0 0 0 881.0 665.5" fill="none" stroke="#fff" stroke-width="1.6"/><path d="M869.73 666.44 L874.90 669.30 L869.73 672.16 Z" fill="#fff" stroke="#10151d" stroke-width="0.9" stroke-linejoin="round"/><rect x="899.95" y="652.15" width="5.10" height="3.51" rx="0.75" fill="#a6caf0" stroke="#10151d" stroke-width="1.0"/><rect x="895.00" y="653.79" width="15.00" height="10.06" rx="1.80" fill="#a6caf0" stroke="#10151d" stroke-width="1.0"/><circle cx="902.50" cy="659.02" r="2.72" fill="#ffffff" stroke="#10151d" stroke-width="1.50"/><rect x="905" y="659.500" width="11" height="11" fill="#8fb4dc" stroke="#10151d" stroke-width="1"/><rect x="907" y="660" width="6" height="3.500" fill="#5f6b7a"/><rect x="907" y="665.500" width="7" height="5" fill="#e4ddd0"/><rect x="934" y="651" width="14" height="12.500" fill="#a6caf0"/><path d="M935.500 654 H946.500 M935.500 656.800 H946.500 M935.500 659.600 H946.500" stroke="#5d84b4" stroke-width="0.9"/><circle cx="930.800" cy="667.800" r="3.300" fill="#dfe4ea"/><rect x="961.500" y="652" width="19" height="18" fill="#a6caf0" stroke="#5d84b4" stroke-width="0.8"/><path d="M963 657 H979 M963 660 H979 M963 663 H979 M963 666 H979" stroke="#7da3d2" stroke-width="0.9"/><rect x="961.500" y="652" width="19" height="3" fill="#5d84b4"/><path d="M994.500 661 Q1003.500 651.500 1012.500 661 Q1003.500 670.500 994.500 661 Z" fill="#fff"/><circle cx="1003.500" cy="661" r="3.600" fill="#314054"/><circle cx="1003.500" cy="661" r="1.500" fill="#fff"/><path d="M1034.5 659 L1029.0 653.5" stroke="#dfeaf7" stroke-width="2"/><path d="M1028.5 653 L1028.5 658 L1033.5 653 Z" fill="#dfeaf7"/><path d="M1038.5 659 L1044.0 653.5" stroke="#dfeaf7" stroke-width="2"/><path d="M1044.5 653 L1044.5 658 L1039.5 653 Z" fill="#dfeaf7"/><path d="M1034.5 663 L1029.0 668.5" stroke="#dfeaf7" stroke-width="2"/><path d="M1028.5 669 L1028.5 664 L1033.5 669 Z" fill="#dfeaf7"/><path d="M1038.5 663 L1044.0 668.5" stroke="#dfeaf7" stroke-width="2"/><path d="M1044.5 669 L1044.5 664 L1039.5 669 Z" fill="#dfeaf7"/><path d="M1063.500 653.500 L1076.500 661 L1063.500 668.500 Z" fill="#fff" stroke="#10151d" stroke-width="0.8"/></svg>
<div class="t" style="left:303.30px;top:382.50px;font-size:11.19px;color:#f2f4f7;line-height:20px;">PDB</div>
<div class="t" style="left:303.80px;top:448.00px;font-size:12.66px;color:#f6f7f9;line-height:20px;font-weight:bold;">Gro</div>
<div class="t" style="left:1168.00px;top:183.80px;font-size:12.72px;color:#f2f4f7;line-height:20px;">2+</div>
<div class="t" style="left:1192.00px;top:190.50px;font-size:15.00px;color:#eef2f7;line-height:20px;font-weight:bold;">+H</div>
<div class="t" style="left:1224.00px;top:190.50px;font-size:15.00px;color:#eef2f7;line-height:20px;font-weight:bold;">−H</div>
<div class="t" style="left:829.00px;top:651.00px;font-size:15.80px;color:#fff;line-height:20px;font-weight:bold;">1Å</div>
<div class="b" style="left:829px;top:669px;width:20px;height:2px;background:#fff;"></div>
<div class="b" style="left:0px;top:688px;width:1381px;height:256px;background:#314054;"></div>
<div class="b" style="left:0px;top:688px;width:1381px;height:30px;background:#425a78;"></div>
<div class="t" style="left:39.80px;top:693.50px;font-size:11.75px;color:#fff;line-height:20px;font-weight:bold;">Animator - Presentation 1</div>
<svg class="i" style="left:0;top:0" width="1381" height="944" viewBox="0 0 1381 944"><rect x="4.00" y="701.37" width="23.00" height="11.13" rx="1" fill="#a6caf0" stroke="#10151d" stroke-width="1.2"/><g><rect x="4.00" y="698.33" width="23.00" height="3.04" fill="#eef2f7" stroke="#10151d" stroke-width="1.2"/><path d="M5.84 701.37 L8.14 698.33 L10.44 698.33 L8.14 701.37 Z" fill="#9fb9d6"/><path d="M11.59 701.37 L13.89 698.33 L16.19 698.33 L13.89 701.37 Z" fill="#9fb9d6"/><path d="M17.34 701.37 L19.64 698.33 L21.94 698.33 L19.64 701.37 Z" fill="#9fb9d6"/><path d="M23.09 701.37 L25.39 698.33 L27.69 698.33 L25.39 701.37 Z" fill="#9fb9d6"/><rect x="4.00" y="698.33" width="23.00" height="3.04" fill="none" stroke="#10151d" stroke-width="1.2"/></g><g transform="rotate(-9 4.00 697.70)"><rect x="4.00" y="694.65" width="23.00" height="3.04" fill="#eef2f7" stroke="#10151d" stroke-width="1.2"/><path d="M5.84 697.70 L8.14 694.65 L10.44 694.65 L8.14 697.70 Z" fill="#9fb9d6"/><path d="M11.59 697.70 L13.89 694.65 L16.19 694.65 L13.89 697.70 Z" fill="#9fb9d6"/><path d="M17.34 697.70 L19.64 694.65 L21.94 694.65 L19.64 697.70 Z" fill="#9fb9d6"/><path d="M23.09 697.70 L25.39 694.65 L27.69 694.65 L25.39 697.70 Z" fill="#9fb9d6"/><rect x="4.00" y="694.65" width="23.00" height="3.04" fill="none" stroke="#10151d" stroke-width="1.2"/></g><path d="M12.83 703.82 L18.84 707.16 L12.83 710.50 Z" fill="#fff" stroke="#10151d" stroke-width="1.02" stroke-linejoin="round"/><path d="M1342 702.500 H1348" stroke="#8fb2dc" stroke-width="1.4"/><path d="M1348 698 V707 M1349 699.500 H1354 V705.500 H1349 Z M1355.500 697.500 V707.500" stroke="#8fb2dc" stroke-width="1.5" fill="#8fb2dc"/><path d="M1361 697 L1372 708 M1372 697 L1361 708" stroke="#8fb2dc" stroke-width="1.5"/></svg>
<div class="b" style="left:4px;top:718px;width:980px;height:223px;background:#1c2838;"></div>
<div class="b" style="left:4px;top:746px;width:960px;height:29px;background:#1c2838;"></div>
<div class="b" style="left:4px;top:775px;width:960px;height:146px;background:#1c2838;"></div>
<div class="b" style="left:275px;top:775px;width:654px;height:146px;background:#324155;"></div>
<div class="b" style="left:275px;top:795px;width:654px;height:1px;background:#2c394c;"></div>
<div class="b" style="left:275px;top:815px;width:654px;height:1px;background:#2c394c;"></div>
<div class="b" style="left:275px;top:835px;width:654px;height:1px;background:#2c394c;"></div>
<div class="b" style="left:275px;top:855px;width:654px;height:1px;background:#2c394c;"></div>
<div class="b" style="left:275px;top:875px;width:654px;height:1px;background:#2c394c;"></div>
<div class="b" style="left:275px;top:895px;width:654px;height:1px;background:#2c394c;"></div>
<div class="b" style="left:275px;top:915px;width:654px;height:1px;background:#2c394c;"></div>
<div class="b" style="left:49px;top:775px;width:1px;height:146px;background:#222f42;"></div>
<div class="b" style="left:104px;top:775px;width:1px;height:146px;background:#222f42;"></div>
<div class="b" style="left:159px;top:775px;width:1px;height:146px;background:#222f42;"></div>
<div class="b" style="left:214px;top:775px;width:1px;height:146px;background:#222f42;"></div>
<div class="b" style="left:324px;top:775px;width:1px;height:146px;background:#28354a;"></div>
<div class="b" style="left:379px;top:775px;width:1px;height:146px;background:#10161f;"></div>
<div class="b" style="left:434px;top:775px;width:1px;height:146px;background:#28354a;"></div>
<div class="b" style="left:489px;top:775px;width:1px;height:146px;background:#10161f;"></div>
<div class="b" style="left:544px;top:775px;width:1px;height:146px;background:#28354a;"></div>
<div class="b" style="left:599px;top:775px;width:1px;height:146px;background:#10161f;"></div>
<div class="b" style="left:654px;top:775px;width:1px;height:146px;background:#28354a;"></div>
<div class="b" style="left:709px;top:775px;width:1px;height:146px;background:#10161f;"></div>
<div class="b" style="left:764px;top:775px;width:1px;height:146px;background:#28354a;"></div>
<div class="b" style="left:819px;top:775px;width:1px;height:146px;background:#10161f;"></div>
<div class="b" style="left:874px;top:775px;width:1px;height:146px;background:#28354a;"></div>
<div class="b" style="left:275px;top:774px;width:1px;height:147px;background:#5583bb;"></div>
<div class="b" style="left:265px;top:746px;width:22px;height:29px;background:#5583bb;border-radius:4px;"></div>
<div class="t" style="left:272.16px;top:751.00px;font-size:12.00px;color:#fff;line-height:20px;">1</div>
<div class="t" style="left:41.12px;top:751.00px;font-size:11.60px;color:#d0d6de;line-height:20px;">-40</div>
<div class="t" style="left:151.12px;top:751.00px;font-size:11.60px;color:#d0d6de;line-height:20px;">-20</div>
<div class="t" style="left:373.05px;top:751.00px;font-size:11.60px;color:#d0d6de;line-height:20px;">20</div>
<div class="t" style="left:483.05px;top:751.00px;font-size:11.60px;color:#d0d6de;line-height:20px;">40</div>
<div class="t" style="left:593.05px;top:751.00px;font-size:11.60px;color:#d0d6de;line-height:20px;">60</div>
<div class="t" style="left:703.05px;top:751.00px;font-size:11.60px;color:#d0d6de;line-height:20px;">80</div>
<div class="t" style="left:809.82px;top:751.00px;font-size:11.60px;color:#d0d6de;line-height:20px;">100</div>
<div class="t" style="left:919.82px;top:751.00px;font-size:11.60px;color:#d0d6de;line-height:20px;">120</div>
<div class="b" style="left:4px;top:920px;width:960px;height:1px;background:#10161f;"></div>
<div class="b" style="left:4px;top:921px;width:960px;height:20px;background:#1c2838;"></div>
<div class="b" style="left:4px;top:922px;width:19px;height:18px;background:#507db0;"></div>
<div class="b" style="left:408px;top:922px;width:148px;height:18px;background:#507db0;"></div>
<div class="b" style="left:945px;top:922px;width:18px;height:18px;background:#507db0;"></div>
<div class="b" style="left:964px;top:746px;width:20px;height:175px;background:#1c2838;"></div>
<div class="b" style="left:965px;top:748px;width:18px;height:17px;background:#507db0;"></div>
<div class="b" style="left:965px;top:766px;width:18px;height:24px;background:#507db0;"></div>
<div class="b" style="left:965px;top:902px;width:18px;height:18px;background:#507db0;"></div>
<div class="t" style="left:43.40px;top:722.50px;font-size:12.39px;color:#f2f4f7;line-height:20px;">Off</div>
<div class="t" style="left:119.50px;top:722.50px;font-size:12.39px;color:#f2f4f7;line-height:20px;">Off</div>
<div class="b" style="left:213px;top:719px;width:77px;height:25px;background:#fff;"></div>
<div class="t" style="left:217.20px;top:721.50px;font-size:11.69px;color:#000;line-height:20px;">Loop</div>
<div class="b" style="left:290px;top:719px;width:84px;height:25px;background:#507db0;"></div>
<div class="b" style="left:374px;top:719px;width:50px;height:25px;background:#fff;"></div>
<div class="t" style="left:390.26px;top:721.50px;font-size:12.00px;color:#000;line-height:20px;">1</div>
<div class="b" style="left:424px;top:719px;width:84px;height:25px;background:#507db0;"></div>
<div class="b" style="left:508px;top:719px;width:60px;height:25px;background:#fff;"></div>
<div class="t" style="left:514.00px;top:721.50px;font-size:10.67px;color:#000;line-height:20px;">0,030 s</div>
<div class="b" style="left:568px;top:719px;width:19px;height:25px;background:#fff;"></div>
<div class="b" style="left:568px;top:720px;width:18px;height:11px;background:#507db0;"></div>
<div class="b" style="left:568px;top:732px;width:18px;height:11px;background:#507db0;"></div>
<div class="t" style="left:721.00px;top:722.50px;font-size:11.61px;color:#f2f4f7;line-height:20px;">Begin</div>
<div class="b" style="left:761px;top:719px;width:49px;height:25px;background:#fff;"></div>
<div class="t" style="left:795.33px;top:721.50px;font-size:12.00px;color:#000;line-height:20px;">1</div>
<div class="b" style="left:810px;top:719px;width:19px;height:25px;background:#fff;"></div>
<div class="b" style="left:810px;top:720px;width:18px;height:11px;background:#507db0;"></div>
<div class="b" style="left:810px;top:732px;width:18px;height:11px;background:#507db0;"></div>
<div class="t" style="left:839.30px;top:722.50px;font-size:11.24px;color:#f2f4f7;line-height:20px;">End</div>
<div class="b" style="left:869px;top:719px;width:49px;height:25px;background:#fff;"></div>
<div class="t" style="left:890.18px;top:721.50px;font-size:12.00px;color:#000;line-height:20px;">120</div>
<div class="b" style="left:918px;top:719px;width:19px;height:25px;background:#fff;"></div>
<div class="b" style="left:918px;top:720px;width:18px;height:11px;background:#507db0;"></div>
<div class="b" style="left:918px;top:732px;width:18px;height:11px;background:#507db0;"></div>
<svg class="i" style="left:0;top:0" width="1381" height="944" viewBox="0 0 1381 944"><path d="M18 925.500 V936.500 L8.500 931 Z" fill="#fff"/><path d="M949.500 925.500 V936.500 L959 931 Z" fill="#fff"/><path d="M968 761 H980 L974 751.500 Z" fill="#fff"/><path d="M968 906.500 H980 L974 916 Z" fill="#fff"/><path d="M573.8 728 H580.2 L577 723 Z" fill="#fff"/><path d="M573.8 735 H580.2 L577 740 Z" fill="#fff"/><path d="M815.8 728 H822.2 L819 723 Z" fill="#fff"/><path d="M815.8 735 H822.2 L819 740 Z" fill="#fff"/><path d="M923.8 728 H930.2 L927 723 Z" fill="#fff"/><path d="M923.8 735 H930.2 L927 740 Z" fill="#fff"/><path d="M266 726.500 L278.500 726.500 L272.200 736.500 Z" fill="#4574ad"/><path d="M77 733 H86.500 L81.700 738 Z" fill="#f2f4f7"/><path d="M152.500 733 H162 L157.200 738 Z" fill="#f2f4f7"/><path d="M300.3 731 L308.7 726.8 L308.7 735.2 Z" fill="#fff" stroke="#10151d" stroke-width="1.1" stroke-linejoin="round"/><path d="M299.500 726.5 V735.5" stroke="#10151d" stroke-width="3.4"/><path d="M299.500 727 V735" stroke="#fff" stroke-width="1.6"/><path d="M336.5 727 L328.5 731 L336.5 735" fill="none" stroke="#10151d" stroke-width="3.2" stroke-linejoin="miter"/><path d="M336.5 727 L328.5 731 L336.5 735" fill="none" stroke="#fff" stroke-width="1.5"/><path d="M355.8 731 L364.2 726.8 L364.2 735.2 Z" fill="#fff" stroke="#10151d" stroke-width="1.1" stroke-linejoin="round"/><path d="M441.7 731 L433.3 726.8 L433.3 735.2 Z" fill="#fff" stroke="#10151d" stroke-width="1.1" stroke-linejoin="round"/><path d="M461.5 727 L469.5 731 L461.5 735" fill="none" stroke="#10151d" stroke-width="3.2" stroke-linejoin="miter"/><path d="M461.5 727 L469.5 731 L461.5 735" fill="none" stroke="#fff" stroke-width="1.5"/><path d="M495.2 731 L486.8 726.8 L486.8 735.2 Z" fill="#fff" stroke="#10151d" stroke-width="1.1" stroke-linejoin="round"/><path d="M496.500 726.5 V735.5" stroke="#10151d" stroke-width="3.4"/><path d="M496.500 727 V735" stroke="#fff" stroke-width="1.6"/><path d="M26.500 724 V742 M32.500 723.500 V742 M37.500 724 V741.500 M21.500 729 H39 M21.500 735.200 H39 M21.500 740.300 H38.500" stroke="#e4e9ef" stroke-width="1.3" fill="none"/><path d="M23.500 731.300 L21.300 728.300 Q19.500 724.500 23 722.800 Q26.500 721.500 28.800 724.500 L30.500 727" stroke="#8fa6c2" stroke-width="1.9" fill="none" stroke-linecap="round"/><path d="M97.300 740.300 L108.800 730 Q114.200 734 114.800 740.300 Z" fill="#b9c6d6"/><path d="M96.800 741 H115.200" stroke="#e4e9ef" stroke-width="1.3"/><path d="M97.300 740.300 L109.500 729.300" stroke="#e4e9ef" stroke-width="1.3"/><path d="M99.700 732.300 L97.500 729.300 Q95.700 725.500 99.200 723.800 Q102.700 722.500 105 725.500 L106.700 728" stroke="#8fa6c2" stroke-width="1.9" fill="none" stroke-linecap="round"/><rect x="180.00" y="731.46" width="19.50" height="9.54" rx="1" fill="#a6caf0" stroke="#10151d" stroke-width="1.0"/><g><rect x="180.00" y="728.85" width="19.50" height="2.61" fill="#eef2f7" stroke="#10151d" stroke-width="1.0"/><path d="M181.56 731.46 L183.51 728.85 L185.46 728.85 L183.51 731.46 Z" fill="#9fb9d6"/><path d="M186.44 731.46 L188.38 728.85 L190.34 728.85 L188.38 731.46 Z" fill="#9fb9d6"/><path d="M191.31 731.46 L193.26 728.85 L195.21 728.85 L193.26 731.46 Z" fill="#9fb9d6"/><path d="M196.19 731.46 L198.13 728.85 L200.09 728.85 L198.13 731.46 Z" fill="#9fb9d6"/><rect x="180.00" y="728.85" width="19.50" height="2.61" fill="none" stroke="#10151d" stroke-width="1.0"/></g><g transform="rotate(-9 180.00 728.31)"><rect x="180.00" y="725.70" width="19.50" height="2.61" fill="#eef2f7" stroke="#10151d" stroke-width="1.0"/><path d="M181.56 728.31 L183.51 725.70 L185.46 725.70 L183.51 728.31 Z" fill="#9fb9d6"/><path d="M186.44 728.31 L188.38 725.70 L190.34 725.70 L188.38 728.31 Z" fill="#9fb9d6"/><path d="M191.31 728.31 L193.26 725.70 L195.21 725.70 L193.26 728.31 Z" fill="#9fb9d6"/><path d="M196.19 728.31 L198.13 725.70 L200.09 725.70 L198.13 728.31 Z" fill="#9fb9d6"/><rect x="180.00" y="725.70" width="19.50" height="2.61" fill="none" stroke="#10151d" stroke-width="1.0"/></g><path d="M187.46 733.56 L192.61 736.42 L187.46 739.28 Z" fill="#fff" stroke="#10151d" stroke-width="0.85" stroke-linejoin="round"/><path d="M190.500 721.500 V730.500 M186 726 H195" stroke="#10151d" stroke-width="4"/><path d="M190.500 722 V730 M186.500 726 H194.500" stroke="#fff" stroke-width="2"/><rect x="598.500" y="721.500" width="21" height="15" fill="#a6caf0" stroke="#10151d" stroke-width="1"/><rect x="598.500" y="721.500" width="21" height="3" fill="#dfe6ee" stroke="#10151d" stroke-width="0.6"/><rect x="598.500" y="733.500" width="21" height="3" fill="#dfe6ee" stroke="#10151d" stroke-width="0.6"/><path d="M606 726 L612 729 L606 732 Z" fill="#fff" stroke="#10151d" stroke-width="0.7"/><rect x="611.500" y="733" width="9.500" height="9.500" fill="#8fb4dc" stroke="#10151d" stroke-width="0.9"/><path d="M614 741 L619.500 735" stroke="#10151d" stroke-width="2.4"/><rect x="635.500" y="721.500" width="21" height="20.500" fill="#1c2838" stroke="#8fb8e8" stroke-width="1"/><line x1="649.51" y1="734.31" x2="653.67" y2="738.47" stroke="#10151d" stroke-width="3.70" stroke-linecap="round"/><circle cx="645.3" cy="730.1" r="6.65" fill="#10151d"/><line x1="649.51" y1="734.31" x2="653.67" y2="738.47" stroke="#e8eaec" stroke-width="2.20" stroke-linecap="round"/><circle cx="645.3" cy="730.1" r="5.40" fill="#aecdf0" stroke="#eef0f2" stroke-width="1.3"/><line x1="674.61" y1="734.81" x2="679.04" y2="739.24" stroke="#10151d" stroke-width="3.70" stroke-linecap="round"/><circle cx="670.4" cy="730.6" r="6.65" fill="#10151d"/><line x1="674.61" y1="734.81" x2="679.04" y2="739.24" stroke="#e8eaec" stroke-width="2.20" stroke-linecap="round"/><circle cx="670.4" cy="730.6" r="5.40" fill="#aecdf0" stroke="#eef0f2" stroke-width="1.3"/><path d="M670.400 727.400 V733.800 M667.200 730.600 H673.600" stroke="#6f86a4" stroke-width="3.100"/><path d="M670.400 727.400 V733.800 M667.200 730.600 H673.600" stroke="#fff" stroke-width="1.9"/><line x1="701.11" y1="734.81" x2="705.54" y2="739.24" stroke="#10151d" stroke-width="3.70" stroke-linecap="round"/><circle cx="696.9" cy="730.6" r="6.65" fill="#10151d"/><line x1="701.11" y1="734.81" x2="705.54" y2="739.24" stroke="#e8eaec" stroke-width="2.20" stroke-linecap="round"/><circle cx="696.9" cy="730.6" r="5.40" fill="#aecdf0" stroke="#eef0f2" stroke-width="1.3"/><path d="M693.700 730.600 H700.100" stroke="#6f86a4" stroke-width="3.100"/><path d="M693.700 730.600 H700.100" stroke="#fff" stroke-width="1.9"/><path d="M970.02 733.91 L968.44 737.73 L966.00 736.58 L964.58 738.00 L965.73 740.44 L961.91 742.02 L961.00 739.48 L959.00 739.48 L958.09 742.02 L954.27 740.44 L955.42 738.00 L954.00 736.58 L951.56 737.73 L949.98 733.91 L952.52 733.00 L952.52 731.00 L949.98 730.09 L951.56 726.27 L954.00 727.42 L955.42 726.00 L954.27 723.56 L958.09 721.98 L959.00 724.52 L961.00 724.52 L961.91 721.98 L965.73 723.56 L964.58 726.00 L966.00 727.42 L968.44 726.27 L970.02 730.09 L967.48 731.00 L967.48 733.00 Z" fill="#eef2f6" stroke-linejoin="round"/><circle cx="960" cy="732" r="5" fill="#7da3d2"/><circle cx="960" cy="732" r="2.800" fill="#1c2838"/></svg>
<div class="b" style="left:985px;top:720px;width:0;height:215px;border-left:1px dotted #50607a"></div>
<div class="b" style="left:994px;top:726px;width:20px;height:18px;background:#a6caf0;border:1px solid #dfeaf7;box-sizing:border-box;"></div>
<div class="t" style="left:996.09px;top:725.00px;font-size:9.50px;color:#10151d;line-height:20px;font-weight:bold;">A-Z</div>
<div class="b" style="left:1183px;top:722px;width:193px;height:26px;background:#fff;"></div>
<div class="t" style="left:1189.30px;top:725.50px;font-size:11.52px;color:#777;line-height:20px;">Search animations... (Ctrl+S...</div>
<div class="b" style="left:1359px;top:757px;width:18px;height:145px;background:#1c2838;"></div>
<div class="b" style="left:1359px;top:757px;width:18px;height:18px;background:#507db0;"></div>
<div class="b" style="left:1359px;top:776px;width:18px;height:18px;background:#507db0;"></div>
<div class="b" style="left:1359px;top:884px;width:18px;height:18px;background:#507db0;"></div>
<svg class="i" style="left:0;top:0" width="1381" height="944" viewBox="0 0 1381 944"><path d="M1362 769.500 H1374 L1368 760.500 Z" fill="#fff"/><path d="M1362 888.500 H1374 L1368 897.500 Z" fill="#fff"/><line x1="1366.00" y1="737.80" x2="1370.72" y2="742.52" stroke="#3c4046" stroke-width="3.70" stroke-linecap="round"/><circle cx="1361.4" cy="733.2" r="7.15" fill="#3c4046"/><line x1="1366.00" y1="737.80" x2="1370.72" y2="742.52" stroke="#f6f6f6" stroke-width="2.20" stroke-linecap="round"/><circle cx="1361.4" cy="733.2" r="5.90" fill="#9cc4ee" stroke="#f6f6f6" stroke-width="1.3"/><path d="M1024.30 736.20 L1024.30 730.20 C1024.30 727.35 1026.94 727.05 1027.90 729.60 L1032.70 740.70 C1033.66 743.40 1036.30 743.25 1036.30 740.40 L1036.30 734.85" fill="none" stroke="#10151d" stroke-width="3.8" stroke-linecap="round" stroke-linejoin="round"/><path d="M1024.30 736.20 L1024.30 730.20 C1024.30 727.35 1026.94 727.05 1027.90 729.60 L1032.70 740.70 C1033.66 743.40 1036.30 743.25 1036.30 740.40 L1036.30 734.85" fill="none" stroke="#f6f6f6" stroke-width="1.4" stroke-linecap="round" stroke-linejoin="round"/><path d="M1024.30 736.20 L1024.30 730.20 C1024.30 727.35 1026.94 727.05 1027.90 729.60 L1032.70 740.70 C1033.66 743.40 1036.30 743.25 1036.30 740.40 L1036.30 734.85" fill="none" stroke="#c4c4c4" stroke-width="0.42" stroke-linecap="round" stroke-linejoin="round" transform="translate(0.31,0)"/><circle cx="1035.60" cy="728.26" r="2.70" fill="#10151d"/><circle cx="1037.58" cy="731.70" r="2.70" fill="#10151d"/><circle cx="1033.62" cy="731.70" r="2.70" fill="#10151d"/><circle cx="1035.60" cy="730.55" r="2.48" fill="#10151d"/><circle cx="1035.60" cy="728.26" r="2.20" fill="#a6caf0"/><circle cx="1037.58" cy="731.70" r="2.20" fill="#a6caf0"/><circle cx="1033.62" cy="731.70" r="2.20" fill="#a6caf0"/><circle cx="1035.60" cy="730.55" r="1.98" fill="#a6caf0"/><circle cx="1024.60" cy="739.14" r="2.50" fill="#10151d"/><circle cx="1026.40" cy="742.26" r="2.50" fill="#10151d"/><circle cx="1022.80" cy="742.26" r="2.50" fill="#10151d"/><circle cx="1024.60" cy="741.22" r="2.30" fill="#10151d"/><circle cx="1024.60" cy="739.14" r="2.00" fill="#a6caf0"/><circle cx="1026.40" cy="742.26" r="2.00" fill="#a6caf0"/><circle cx="1022.80" cy="742.26" r="2.00" fill="#a6caf0"/><circle cx="1024.60" cy="741.22" r="1.80" fill="#a6caf0"/><rect x="1052.87" y="727.79" width="6.46" height="4.45" rx="0.95" fill="#a6caf0" stroke="none" stroke-width="0"/><rect x="1046.60" y="729.86" width="19.00" height="12.75" rx="2.28" fill="#a6caf0" stroke="none" stroke-width="0"/><circle cx="1056.10" cy="736.49" r="3.44" fill="#a6caf0" stroke="#7da3d2" stroke-width="1.90"/><circle cx="1056.1" cy="736.400" r="2.400" fill="none" stroke="#7da3d2" stroke-width="0.9"/><circle cx="1082.00" cy="731.08" r="5.60" fill="#10151d"/><circle cx="1086.32" cy="738.56" r="5.60" fill="#10151d"/><circle cx="1077.68" cy="738.56" r="5.60" fill="#10151d"/><circle cx="1082.00" cy="736.07" r="5.12" fill="#10151d"/><circle cx="1082.00" cy="731.08" r="4.80" fill="#a6caf0"/><circle cx="1086.32" cy="738.56" r="4.80" fill="#a6caf0"/><circle cx="1077.68" cy="738.56" r="4.80" fill="#a6caf0"/><circle cx="1082.00" cy="736.07" r="4.32" fill="#a6caf0"/><circle cx="1107.90" cy="731.08" r="5.60" fill="#10151d"/><circle cx="1112.22" cy="738.56" r="5.60" fill="#10151d"/><circle cx="1103.58" cy="738.56" r="5.60" fill="#10151d"/><circle cx="1107.90" cy="736.07" r="5.12" fill="#10151d"/><circle cx="1107.90" cy="731.08" r="4.80" fill="#5a7896"/><circle cx="1112.22" cy="738.56" r="4.80" fill="#5a7896"/><circle cx="1103.58" cy="738.56" r="4.80" fill="#5a7896"/><circle cx="1107.90" cy="736.07" r="4.32" fill="#5a7896"/><circle cx="1134.00" cy="732.98" r="3.80" fill="#10151d"/><circle cx="1136.88" cy="737.98" r="3.80" fill="#10151d"/><circle cx="1131.12" cy="737.98" r="3.80" fill="#10151d"/><circle cx="1134.00" cy="736.31" r="3.48" fill="#10151d"/><circle cx="1134.00" cy="732.98" r="3.20" fill="#a6caf0"/><circle cx="1136.88" cy="737.98" r="3.20" fill="#a6caf0"/><circle cx="1131.12" cy="737.98" r="3.20" fill="#a6caf0"/><circle cx="1134.00" cy="736.31" r="2.88" fill="#a6caf0"/><path d="M1134.0 726.7 L1134.0 723.9" stroke="#f4f6f9" stroke-width="1.3"/><path d="M1140.1 729.2 L1142.1 727.2" stroke="#f4f6f9" stroke-width="1.3"/><path d="M1142.6 735.3 L1145.4 735.3" stroke="#f4f6f9" stroke-width="1.3"/><path d="M1140.1 741.4 L1142.1 743.4" stroke="#f4f6f9" stroke-width="1.3"/><path d="M1134 743.800 V747" stroke="#f4f6f9" stroke-width="1.3"/><path d="M1127.9 741.4 L1125.9 743.4" stroke="#f4f6f9" stroke-width="1.3"/><path d="M1125.4 735.3 L1122.6 735.3" stroke="#f4f6f9" stroke-width="1.3"/><path d="M1127.9 729.2 L1125.9 727.2" stroke="#f4f6f9" stroke-width="1.3"/><path d="M1169.37 737.09 L1168.11 740.14 L1165.62 739.02 L1164.02 740.62 L1165.14 743.11 L1162.09 744.37 L1161.13 741.82 L1158.87 741.82 L1157.91 744.37 L1154.86 743.11 L1155.98 740.62 L1154.38 739.02 L1151.89 740.14 L1150.63 737.09 L1153.18 736.13 L1153.18 733.87 L1150.63 732.91 L1151.89 729.86 L1154.38 730.98 L1155.98 729.38 L1154.86 726.89 L1157.91 725.63 L1158.87 728.18 L1161.13 728.18 L1162.09 725.63 L1165.14 726.89 L1164.02 729.38 L1165.62 730.98 L1168.11 729.86 L1169.37 732.91 L1166.82 733.87 L1166.82 736.13 Z" fill="#a6caf0" stroke="#10151d" stroke-width="0.9" stroke-linejoin="round"/><circle cx="1160" cy="735" r="2.9" fill="#314054" stroke="#10151d" stroke-width="0.8"/><rect x="1010.85" y="778.30" width="11.50" height="7.20" rx="2.74" fill="#f2a468" stroke="#10151d" stroke-width="1.3" transform="rotate(42 1016.60 781.90)"/><rect x="1019.25" y="773.70" width="12.50" height="6.60" rx="2.51" fill="#a6caf0" stroke="#10151d" stroke-width="1.3" transform="rotate(-20 1025.50 777.00)"/><rect x="1021.00" y="782.00" width="7.40" height="12.00" rx="2.81" fill="#35d08b" stroke="#10151d" stroke-width="1.3" transform="rotate(14 1024.70 788.00)"/><path d="M1013.60 761.80 Q1008.12 765.62 1009.30 772.20" fill="none" stroke="#10151d" stroke-width="3.9" stroke-linecap="round"/><path d="M1009.87 775.39 L1005.57 771.77 L1012.65 770.50 Z" fill="#10151d" stroke="#10151d" stroke-width="1.6" stroke-linejoin="round"/><path d="M1013.60 761.80 Q1008.12 765.62 1009.30 772.20" fill="none" stroke="#fff" stroke-width="2.3" stroke-linecap="round"/><path d="M1009.87 775.39 L1005.57 771.77 L1012.65 770.50 Z" fill="#fff"/><path d="M1044.50 784.20 Q1043.38 777.42 1036.60 776.30" fill="none" stroke="#10151d" stroke-width="3.9" stroke-linecap="round"/><path d="M1033.40 775.77 L1038.25 772.92 L1037.08 780.03 Z" fill="#10151d" stroke="#10151d" stroke-width="1.6" stroke-linejoin="round"/><path d="M1044.50 784.20 Q1043.38 777.42 1036.60 776.30" fill="none" stroke="#fff" stroke-width="2.3" stroke-linecap="round"/><path d="M1033.40 775.77 L1038.25 772.92 L1037.08 780.03 Z" fill="#fff"/><path d="M1009.00 801.80 Q1015.41 802.91 1020.00 798.30" fill="none" stroke="#10151d" stroke-width="3.9" stroke-linecap="round"/><path d="M1022.29 796.00 L1021.79 801.61 L1016.69 796.52 Z" fill="#10151d" stroke="#10151d" stroke-width="1.6" stroke-linejoin="round"/><path d="M1009.00 801.80 Q1015.41 802.91 1020.00 798.30" fill="none" stroke="#fff" stroke-width="2.3" stroke-linecap="round"/><path d="M1022.29 796.00 L1021.79 801.61 L1016.69 796.52 Z" fill="#fff"/><rect x="1073.95" y="772.20" width="11.50" height="7.20" rx="2.74" fill="#f2a468" stroke="#10151d" stroke-width="1.3" transform="rotate(42 1079.70 775.80)"/><rect x="1104.75" y="762.70" width="12.50" height="6.60" rx="2.51" fill="#a6caf0" stroke="#10151d" stroke-width="1.3" transform="rotate(-16 1111.00 766.00)"/><rect x="1098.80" y="792.60" width="7.40" height="12.00" rx="2.81" fill="#35d08b" stroke="#10151d" stroke-width="1.3" transform="rotate(12 1102.50 798.60)"/><path d="M1097.20 772.20 Q1091.45 775.34 1086.30 771.30" fill="none" stroke="#10151d" stroke-width="3.9" stroke-linecap="round"/><path d="M1083.75 769.30 L1089.37 769.13 L1084.93 774.80 Z" fill="#10151d" stroke="#10151d" stroke-width="1.6" stroke-linejoin="round"/><path d="M1097.20 772.20 Q1091.45 775.34 1086.30 771.30" fill="none" stroke="#fff" stroke-width="2.3" stroke-linecap="round"/><path d="M1083.75 769.30 L1089.37 769.13 L1084.93 774.80 Z" fill="#fff"/><path d="M1105.80 784.20 Q1112.16 781.78 1112.80 775.00" fill="none" stroke="#10151d" stroke-width="3.9" stroke-linecap="round"/><path d="M1113.10 771.77 L1116.28 776.41 L1109.11 775.74 Z" fill="#10151d" stroke="#10151d" stroke-width="1.6" stroke-linejoin="round"/><path d="M1105.80 784.20 Q1112.16 781.78 1112.80 775.00" fill="none" stroke="#fff" stroke-width="2.3" stroke-linecap="round"/><path d="M1113.10 771.77 L1116.28 776.41 L1109.11 775.74 Z" fill="#fff"/><path d="M1089.80 785.50 Q1090.05 792.39 1096.30 795.30" fill="none" stroke="#10151d" stroke-width="3.9" stroke-linecap="round"/><path d="M1099.24 796.67 L1093.80 798.11 L1096.84 791.58 Z" fill="#10151d" stroke="#10151d" stroke-width="1.6" stroke-linejoin="round"/><path d="M1089.80 785.50 Q1090.05 792.39 1096.30 795.30" fill="none" stroke="#fff" stroke-width="2.3" stroke-linecap="round"/><path d="M1099.24 796.67 L1093.80 798.11 L1096.84 791.58 Z" fill="#fff"/><path d="M1146.64 792.45 C1147.40 790.00 1149.90 784.00 1152.50 782.51 C1155.11 781.01 1159.08 783.70 1162.28 783.48 C1165.49 783.27 1169.29 783.05 1171.74 781.20 C1174.18 779.35 1174.59 773.46 1176.95 772.40 C1179.32 771.34 1183.99 772.86 1185.92 774.85 C1187.85 776.83 1188.45 780.09 1188.53 784.30 C1188.61 788.51 1188.20 797.20 1186.41 800.11 C1184.61 803.02 1181.00 800.68 1177.77 801.74 C1174.54 802.80 1170.62 806.36 1167.01 806.47 C1163.40 806.58 1159.27 803.94 1156.09 802.39 C1152.91 800.84 1149.52 798.83 1147.94 797.18 C1146.36 795.52 1145.88 794.89 1146.64 792.45 Z" fill="#35d08b" stroke="#10151d" stroke-width="1.6" stroke-linejoin="round"/><rect x="1161.15" y="771.55" width="10.50" height="11.50" rx="3.99" fill="#a6caf0" stroke="#10151d" stroke-width="1.4" transform="rotate(-12 1166.40 777.30)"/><path d="M1145.50 766.00 Q1154.36 761.43 1160.20 769.50" fill="none" stroke="#10151d" stroke-width="4.5" stroke-linecap="round"/><path d="M1162.63 772.85 L1155.66 771.08 L1163.12 765.68 Z" fill="#10151d" stroke="#10151d" stroke-width="1.6" stroke-linejoin="round"/><path d="M1145.50 766.00 Q1154.36 761.43 1160.20 769.50" fill="none" stroke="#fff" stroke-width="2.9" stroke-linecap="round"/><path d="M1162.63 772.85 L1155.66 771.08 L1163.12 765.68 Z" fill="#fff"/><circle cx="1238.1" cy="770" r="8.2" fill="#fff" stroke="#10151d" stroke-width="1.2"/><rect x="1234.66" y="766.31" width="2.46" height="7.38" fill="#5a6f88"/><rect x="1239.08" y="766.31" width="2.46" height="7.38" fill="#5a6f88"/><circle cx="1238.40" cy="790.72" r="6.05" fill="#10151d"/><circle cx="1243.08" cy="798.84" r="6.05" fill="#10151d"/><circle cx="1233.72" cy="798.84" r="6.05" fill="#10151d"/><circle cx="1238.40" cy="796.13" r="5.53" fill="#10151d"/><circle cx="1238.40" cy="790.72" r="5.20" fill="#a6caf0"/><circle cx="1243.08" cy="798.84" r="5.20" fill="#a6caf0"/><circle cx="1233.72" cy="798.84" r="5.20" fill="#a6caf0"/><circle cx="1238.40" cy="796.13" r="4.68" fill="#a6caf0"/><path d="M1295.80 785.86 L1295.80 773.46 C1295.80 767.57 1301.56 766.95 1303.66 772.22 L1314.14 795.16 C1316.24 800.74 1322.00 800.43 1322.00 794.54 L1322.00 783.07" fill="none" stroke="#10151d" stroke-width="5.9" stroke-linecap="round" stroke-linejoin="round"/><path d="M1295.80 785.86 L1295.80 773.46 C1295.80 767.57 1301.56 766.95 1303.66 772.22 L1314.14 795.16 C1316.24 800.74 1322.00 800.43 1322.00 794.54 L1322.00 783.07" fill="none" stroke="#f6f6f6" stroke-width="3.5" stroke-linecap="round" stroke-linejoin="round"/><path d="M1295.80 785.86 L1295.80 773.46 C1295.80 767.57 1301.56 766.95 1303.66 772.22 L1314.14 795.16 C1316.24 800.74 1322.00 800.43 1322.00 794.54 L1322.00 783.07" fill="none" stroke="#c4c4c4" stroke-width="1.05" stroke-linecap="round" stroke-linejoin="round" transform="translate(0.77,0)"/><circle cx="1321.10" cy="767.31" r="4.65" fill="#10151d"/><circle cx="1324.57" cy="773.32" r="4.65" fill="#10151d"/><circle cx="1317.63" cy="773.32" r="4.65" fill="#10151d"/><circle cx="1321.10" cy="771.32" r="4.27" fill="#10151d"/><circle cx="1321.10" cy="767.31" r="3.85" fill="#a6caf0"/><circle cx="1324.57" cy="773.32" r="3.85" fill="#a6caf0"/><circle cx="1317.63" cy="773.32" r="3.85" fill="#a6caf0"/><circle cx="1321.10" cy="771.32" r="3.47" fill="#a6caf0"/><circle cx="1295.50" cy="794.31" r="4.65" fill="#10151d"/><circle cx="1298.97" cy="800.32" r="4.65" fill="#10151d"/><circle cx="1292.03" cy="800.32" r="4.65" fill="#10151d"/><circle cx="1295.50" cy="798.32" r="4.27" fill="#10151d"/><circle cx="1295.50" cy="794.31" r="3.85" fill="#a6caf0"/><circle cx="1298.97" cy="800.32" r="3.85" fill="#a6caf0"/><circle cx="1292.03" cy="800.32" r="3.85" fill="#a6caf0"/><circle cx="1295.50" cy="798.32" r="3.47" fill="#a6caf0"/><path d="M1009.80 850.32 L1009.80 841.52 C1009.80 837.34 1013.76 836.90 1015.20 840.64 L1022.40 856.92 C1023.84 860.88 1027.80 860.66 1027.80 856.48 L1027.80 848.34" fill="none" stroke="#10151d" stroke-width="5.1" stroke-linecap="round" stroke-linejoin="round"/><path d="M1009.80 850.32 L1009.80 841.52 C1009.80 837.34 1013.76 836.90 1015.20 840.64 L1022.40 856.92 C1023.84 860.88 1027.80 860.66 1027.80 856.48 L1027.80 848.34" fill="none" stroke="#f6f6f6" stroke-width="2.7" stroke-linecap="round" stroke-linejoin="round"/><path d="M1009.80 850.32 L1009.80 841.52 C1009.80 837.34 1013.76 836.90 1015.20 840.64 L1022.40 856.92 C1023.84 860.88 1027.80 860.66 1027.80 856.48 L1027.80 848.34" fill="none" stroke="#c4c4c4" stroke-width="0.81" stroke-linecap="round" stroke-linejoin="round" transform="translate(0.59,0)"/><circle cx="1028.00" cy="836.94" r="3.45" fill="#10151d"/><circle cx="1030.52" cy="841.30" r="3.45" fill="#10151d"/><circle cx="1025.48" cy="841.30" r="3.45" fill="#10151d"/><circle cx="1028.00" cy="839.85" r="3.17" fill="#10151d"/><circle cx="1028.00" cy="836.94" r="2.80" fill="#a6caf0"/><circle cx="1030.52" cy="841.30" r="2.80" fill="#a6caf0"/><circle cx="1025.48" cy="841.30" r="2.80" fill="#a6caf0"/><circle cx="1028.00" cy="839.85" r="2.52" fill="#a6caf0"/><circle cx="1009.00" cy="856.74" r="3.45" fill="#10151d"/><circle cx="1011.52" cy="861.10" r="3.45" fill="#10151d"/><circle cx="1006.48" cy="861.10" r="3.45" fill="#10151d"/><circle cx="1009.00" cy="859.65" r="3.17" fill="#10151d"/><circle cx="1009.00" cy="856.74" r="2.80" fill="#a6caf0"/><circle cx="1011.52" cy="861.10" r="2.80" fill="#a6caf0"/><circle cx="1006.48" cy="861.10" r="2.80" fill="#a6caf0"/><circle cx="1009.00" cy="859.65" r="2.52" fill="#a6caf0"/><path d="M1031.800 860.800 L1045.600 868.400 L1031.800 876 Z" fill="#35d08b" stroke="#10151d" stroke-width="1.3" stroke-linejoin="round"/><path d="M1080.80 850.32 L1080.80 841.52 C1080.80 837.34 1084.76 836.90 1086.20 840.64 L1093.40 856.92 C1094.84 860.88 1098.80 860.66 1098.80 856.48 L1098.80 848.34" fill="none" stroke="#10151d" stroke-width="5.1" stroke-linecap="round" stroke-linejoin="round"/><path d="M1080.80 850.32 L1080.80 841.52 C1080.80 837.34 1084.76 836.90 1086.20 840.64 L1093.40 856.92 C1094.84 860.88 1098.80 860.66 1098.80 856.48 L1098.80 848.34" fill="none" stroke="#f6f6f6" stroke-width="2.7" stroke-linecap="round" stroke-linejoin="round"/><path d="M1080.80 850.32 L1080.80 841.52 C1080.80 837.34 1084.76 836.90 1086.20 840.64 L1093.40 856.92 C1094.84 860.88 1098.80 860.66 1098.80 856.48 L1098.80 848.34" fill="none" stroke="#c4c4c4" stroke-width="0.81" stroke-linecap="round" stroke-linejoin="round" transform="translate(0.59,0)"/><circle cx="1099.00" cy="836.94" r="3.45" fill="#10151d"/><circle cx="1101.52" cy="841.30" r="3.45" fill="#10151d"/><circle cx="1096.48" cy="841.30" r="3.45" fill="#10151d"/><circle cx="1099.00" cy="839.85" r="3.17" fill="#10151d"/><circle cx="1099.00" cy="836.94" r="2.80" fill="#a6caf0"/><circle cx="1101.52" cy="841.30" r="2.80" fill="#a6caf0"/><circle cx="1096.48" cy="841.30" r="2.80" fill="#a6caf0"/><circle cx="1099.00" cy="839.85" r="2.52" fill="#a6caf0"/><circle cx="1080.00" cy="856.74" r="3.45" fill="#10151d"/><circle cx="1082.52" cy="861.10" r="3.45" fill="#10151d"/><circle cx="1077.48" cy="861.10" r="3.45" fill="#10151d"/><circle cx="1080.00" cy="859.65" r="3.17" fill="#10151d"/><circle cx="1080.00" cy="856.74" r="2.80" fill="#a6caf0"/><circle cx="1082.52" cy="861.10" r="2.80" fill="#a6caf0"/><circle cx="1077.48" cy="861.10" r="2.80" fill="#a6caf0"/><circle cx="1080.00" cy="859.65" r="2.52" fill="#a6caf0"/><path d="M1117 860.800 L1103.200 868.400 L1117 876 Z" fill="#35d08b" stroke="#10151d" stroke-width="1.3" stroke-linejoin="round"/><path d="M1152.40 838.90 C1153.80 837.58 1157.00 837.91 1159.60 836.92 C1162.20 835.93 1165.30 833.18 1168.00 832.96 C1170.70 832.74 1173.90 834.39 1175.80 835.60 C1177.70 836.81 1178.90 837.47 1179.40 840.22 C1179.90 842.97 1179.60 848.47 1178.80 852.10 C1178.00 855.73 1176.70 859.75 1174.60 862.00 C1172.50 864.25 1169.00 865.52 1166.20 865.63 C1163.40 865.74 1160.00 864.80 1157.80 862.66 C1155.60 860.51 1154.10 855.73 1153.00 852.76 C1151.90 849.79 1151.30 847.15 1151.20 844.84 C1151.10 842.53 1151.00 840.22 1152.40 838.90 Z" fill="#35d08b" stroke="#10151d" stroke-width="1.6" stroke-linejoin="round"/><path d="M1150 868 Q1166 880.500 1182 868" fill="none" stroke="#10151d" stroke-width="6"/><path d="M1143 865.500 L1155.500 862.300 L1152 874.500 Z" fill="#fff" stroke="#10151d" stroke-width="1.6" stroke-linejoin="round"/><path d="M1189 865.500 L1176.500 862.300 L1180 874.500 Z" fill="#fff" stroke="#10151d" stroke-width="1.6" stroke-linejoin="round"/><path d="M1150 868 Q1166 880.500 1182 868" fill="none" stroke="#fff" stroke-width="3.6"/><ellipse cx="1237.3" cy="866" rx="19.5" ry="7.6" fill="none" stroke="#10151d" stroke-width="4.8"/><ellipse cx="1237.3" cy="866" rx="19.5" ry="7.6" fill="none" stroke="#fff" stroke-width="3.0"/><path d="M1223.80 838.90 C1225.20 837.58 1228.40 837.91 1231.00 836.92 C1233.60 835.93 1236.70 833.18 1239.40 832.96 C1242.10 832.74 1245.30 834.39 1247.20 835.60 C1249.10 836.81 1250.30 837.47 1250.80 840.22 C1251.30 842.97 1251.00 848.47 1250.20 852.10 C1249.40 855.73 1248.10 859.75 1246.00 862.00 C1243.90 864.25 1240.40 865.52 1237.60 865.63 C1234.80 865.74 1231.40 864.80 1229.20 862.66 C1227.00 860.51 1225.50 855.73 1224.40 852.76 C1223.30 849.79 1222.70 847.15 1222.60 844.84 C1222.50 842.53 1222.40 840.22 1223.80 838.90 Z" fill="#35d08b" stroke="#10151d" stroke-width="1.6" stroke-linejoin="round"/><path d="M1217.8 866 A19.5 7.6 0 0 0 1256.8 866" fill="none" stroke="#10151d" stroke-width="4.8"/><path d="M1217.8 866 A19.5 7.6 0 0 0 1256.8 866" fill="none" stroke="#fff" stroke-width="3.0"/><path d="M1234.15 868.25 L1243.84 873.60 L1234.15 878.96 Z" fill="#fff" stroke="#10151d" stroke-width="0.9" stroke-linejoin="round"/><path d="M1288.64 865.75 C1289.40 863.30 1291.90 857.30 1294.50 855.81 C1297.11 854.31 1301.08 857.00 1304.28 856.78 C1307.49 856.57 1311.29 856.35 1313.74 854.50 C1316.18 852.65 1316.59 846.76 1318.95 845.70 C1321.32 844.64 1325.99 846.16 1327.92 848.14 C1329.85 850.13 1330.45 853.39 1330.53 857.60 C1330.61 861.81 1330.20 870.50 1328.41 873.41 C1326.61 876.32 1323.00 873.98 1319.77 875.04 C1316.54 876.10 1312.62 879.66 1309.01 879.77 C1305.40 879.88 1301.27 877.24 1298.09 875.69 C1294.91 874.14 1291.52 872.13 1289.94 870.48 C1288.36 868.82 1287.88 868.19 1288.64 865.75 Z" fill="#35d08b" stroke="#10151d" stroke-width="1.6" stroke-linejoin="round"/><rect x="1285.20" y="831.80" width="10.00" height="10.00" rx="3.80" fill="#a6caf0" stroke="#10151d" stroke-width="1.4" transform="rotate(-25 1290.20 836.80)"/><path d="M1311.50 852.50 Q1302.80 851.12 1301.00 842.50" fill="none" stroke="#10151d" stroke-width="4.300000000000001" stroke-linecap="round"/><path d="M1300.19 838.62 L1305.58 842.89 L1296.96 844.69 Z" fill="#10151d" stroke="#10151d" stroke-width="1.6" stroke-linejoin="round"/><path d="M1311.50 852.50 Q1302.80 851.12 1301.00 842.50" fill="none" stroke="#fff" stroke-width="2.7" stroke-linecap="round"/><path d="M1300.19 838.62 L1305.58 842.89 L1296.96 844.69 Z" fill="#fff"/><line x1="1269.95" y1="927.35" x2="1274.62" y2="932.02" stroke="#10151d" stroke-width="3.70" stroke-linecap="round"/><circle cx="1265.5" cy="922.9" r="6.95" fill="#10151d"/><line x1="1269.95" y1="927.35" x2="1274.62" y2="932.02" stroke="#e8eaec" stroke-width="2.20" stroke-linecap="round"/><circle cx="1265.5" cy="922.9" r="5.70" fill="#aecdf0" stroke="#eef0f2" stroke-width="1.3"/><path d="M1262.2 922.9 H1268.8 M1265.5 919.6 V926.1999999999999" stroke="#6f86a4" stroke-width="3.2"/><path d="M1262.2 922.9 H1268.8 M1265.5 919.6 V926.1999999999999" stroke="#fff" stroke-width="2"/><line x1="1302.15" y1="927.35" x2="1306.82" y2="932.02" stroke="#10151d" stroke-width="3.70" stroke-linecap="round"/><circle cx="1297.7" cy="922.9" r="6.95" fill="#10151d"/><line x1="1302.15" y1="927.35" x2="1306.82" y2="932.02" stroke="#e8eaec" stroke-width="2.20" stroke-linecap="round"/><circle cx="1297.7" cy="922.9" r="5.70" fill="#aecdf0" stroke="#eef0f2" stroke-width="1.3"/><path d="M1294.4 922.9 H1301.0" stroke="#6f86a4" stroke-width="3.2"/><path d="M1294.4 922.9 H1301.0" stroke="#fff" stroke-width="2"/><rect x="1322" y="915" width="18" height="18" fill="#a6caf0" stroke="#10151d" stroke-width="0.8"/><path d="M1324.500 919.500 H1337.500 M1324.500 922.800 H1337.500 M1324.500 926.100 H1337.500 M1324.500 929.400 H1337.500" stroke="#4e7bb1" stroke-width="1.1"/><rect x="1354" y="915" width="18" height="18" fill="#a6caf0" stroke="#10151d" stroke-width="0.8"/><path d="M1359.500 928 L1362 921 L1367.500 923.500" stroke="#e8f0fa" stroke-width="1.2" fill="none"/><circle cx="1359.300" cy="927.800" r="3.1" fill="#d6e6f8" stroke="#7f9cc0" stroke-width="0.7"/><circle cx="1367.500" cy="923.500" r="2.8" fill="#d6e6f8" stroke="#7f9cc0" stroke-width="0.7"/><circle cx="1362" cy="920.800" r="2.5" fill="#d6e6f8" stroke="#7f9cc0" stroke-width="0.7"/></svg>
<div class="t" style="left:999.20px;top:809.00px;font-size:11.66px;color:#f4f6f9;line-height:20px;text-shadow:0 0 2px #0d1320,0 0 1px #0d1320;">Assemble</div>
<div class="t" style="left:1063.00px;top:809.00px;font-size:11.41px;color:#f4f6f9;line-height:20px;text-shadow:0 0 2px #0d1320,0 0 1px #0d1320;">Disassemble</div>
<div class="t" style="left:1153.00px;top:809.00px;font-size:12.03px;color:#f4f6f9;line-height:20px;text-shadow:0 0 2px #0d1320,0 0 1px #0d1320;">Dock</div>
<div class="t" style="left:1206.00px;top:809.00px;font-size:12.26px;color:#f4f6f9;line-height:20px;text-shadow:0 0 2px #0d1320,0 0 1px #0d1320;">Hold atoms</div>
<div class="t" style="left:1279.50px;top:809.00px;font-size:11.74px;color:#f4f6f9;line-height:20px;text-shadow:0 0 2px #0d1320,0 0 1px #0d1320;">Move ato...</div>
<div class="t" style="left:1000.40px;top:880.00px;font-size:11.63px;color:#f4f6f9;line-height:20px;text-shadow:0 0 2px #0d1320,0 0 1px #0d1320;">Play path</div>
<div class="t" style="left:1065.20px;top:880.00px;font-size:11.29px;color:#f4f6f9;line-height:20px;text-shadow:0 0 2px #0d1320,0 0 1px #0d1320;">Play rever...</div>
<div class="t" style="left:1153.00px;top:880.00px;font-size:11.50px;color:#f4f6f9;line-height:20px;text-shadow:0 0 2px #0d1320,0 0 1px #0d1320;">Rock</div>
<div class="t" style="left:1220.00px;top:880.00px;font-size:11.61px;color:#f4f6f9;line-height:20px;text-shadow:0 0 2px #0d1320,0 0 1px #0d1320;">Rotate</div>
<div class="t" style="left:1288.50px;top:880.00px;font-size:12.00px;color:#f4f6f9;line-height:20px;text-shadow:0 0 2px #0d1320,0 0 1px #0d1320;">Undock</div>
</body></html>
